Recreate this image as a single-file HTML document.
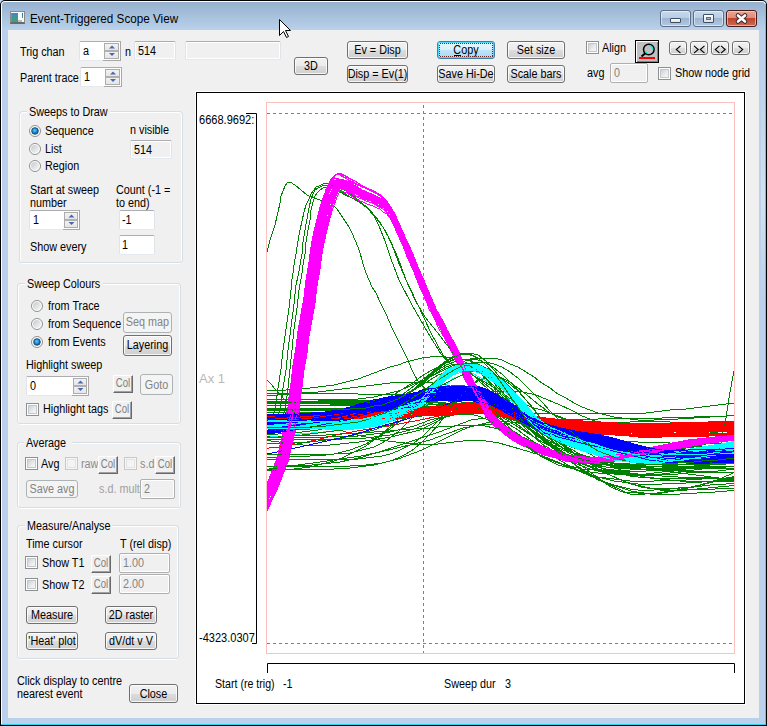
<!DOCTYPE html><html><head><meta charset="utf-8"><style>
html,body{margin:0;padding:0;width:767px;height:726px;overflow:hidden;background:#C9DDF0;}
.t{position:absolute;white-space:nowrap;font-family:'Liberation Sans', sans-serif;font-size:12px;line-height:12px;transform-origin:0 0;}
</style></head><body>
<div style="position:absolute;left:0;top:0;width:767px;height:726px;border-radius:5px 5px 0 0;background:#000;"></div>
<div style="position:absolute;left:1px;top:1px;width:765px;height:724px;border-radius:4px 4px 0 0;background:#FFF;"></div>
<div style="position:absolute;left:2px;top:2px;width:763px;height:722px;border-radius:3px 3px 0 0;background:linear-gradient(#96B1CF 0px,#B9D1EA 28px,#B9D1EA 100%);"></div>
<div style="position:absolute;left:765px;top:4px;width:1px;height:721px;box-sizing:border-box;background:#3AD5F0;"></div>
<div style="position:absolute;left:761px;top:60px;width:4px;height:241px;box-sizing:border-box;background:linear-gradient(rgba(255,255,255,0),rgba(255,255,255,0.35) 60%,rgba(255,255,255,0));"></div>
<div style="position:absolute;left:766px;top:4px;width:1px;height:722px;box-sizing:border-box;background:#000;"></div>
<div style="position:absolute;left:1px;top:724px;width:765px;height:1px;box-sizing:border-box;background:#2FD3F0;"></div>
<div style="position:absolute;left:0px;top:725px;width:767px;height:1px;box-sizing:border-box;background:#000;"></div>
<div style="position:absolute;left:0px;top:4px;width:1px;height:722px;box-sizing:border-box;background:#000;"></div>
<div style="position:absolute;left:8px;top:30px;width:751px;height:688px;box-sizing:border-box;background:#F0F0F0;"></div>
<div style="position:absolute;left:10px;top:11px;width:15px;height:13px;box-sizing:border-box;border:1px solid #8A8A8A;border-bottom:2px solid #6A6A6A;background:#FAFAFA;"></div>
<div style="position:absolute;left:11px;top:13px;width:7px;height:9px;box-sizing:border-box;background:linear-gradient(#3F86C8,#3FA36B);border-left:1px solid #8A7FC0;"></div>
<div style="position:absolute;left:18px;top:20px;width:4px;height:2px;box-sizing:border-box;background:#BDBDBD;"></div>
<div style="position:absolute;left:22px;top:13px;width:1px;height:5px;box-sizing:border-box;background:linear-gradient(#2B68C9,#3FB050);"></div>
<div class="t" style="left:30px;top:13px;font-size:12px;line-height:12px;transform:scaleX(0.974);color:#000;">Event-Triggered Scope View</div>
<div style="position:absolute;left:660px;top:10px;width:31px;height:17px;box-sizing:border-box;border:1px solid #5D6E84;border-radius:3px;background:linear-gradient(#C8D9EC 0%,#B9CDE4 45%,#9DB5D1 50%,#B3C8E0 100%);box-shadow:inset 0 0 0 1px rgba(255,255,255,0.5);"></div>
<div style="position:absolute;left:693px;top:10px;width:31px;height:17px;box-sizing:border-box;border:1px solid #5D6E84;border-radius:3px;background:linear-gradient(#C8D9EC 0%,#B9CDE4 45%,#9DB5D1 50%,#B3C8E0 100%);box-shadow:inset 0 0 0 1px rgba(255,255,255,0.5);"></div>
<div style="position:absolute;left:726px;top:10px;width:31px;height:17px;box-sizing:border-box;border:1px solid #4A1A1A;border-radius:3px;background:linear-gradient(#E8A493 0%,#DC8D7A 45%,#C0432A 50%,#CC6C56 100%);box-shadow:inset 0 0 0 1px rgba(255,220,210,0.6);"></div>
<div style="position:absolute;left:670px;top:18px;width:11px;height:5px;box-sizing:border-box;border:1px solid #3E4E66;border-radius:1px;background:linear-gradient(#FFF,#E0E0E0);"></div>
<div style="position:absolute;left:703px;top:14px;width:11px;height:9px;box-sizing:border-box;border:1px solid #3E4E66;border-radius:1px;background:linear-gradient(#FFF,#E0E0E0);"></div>
<div style="position:absolute;left:706px;top:17px;width:5px;height:3px;box-sizing:border-box;border:1px solid #5A6F90;background:#9AB2D4;"></div>
<svg style="position:absolute;left:0;top:0" width="767" height="726"><path d="M738,15.5 L745,21.5 M745,15.5 L738,21.5" stroke="#3B2A30" stroke-width="4.6" stroke-linecap="round"/><path d="M738,15.5 L745,21.5 M745,15.5 L738,21.5" stroke="#FFF" stroke-width="2.6" stroke-linecap="round"/></svg>
<div class="t" style="left:20px;top:46px;color:#000;font-size:12px;line-height:12px;transform:scaleX(0.9);">Trig chan</div>
<div style="position:absolute;left:79px;top:41px;width:42px;height:20px;box-sizing:border-box;border:1px solid;border-color:#ABADB3 #E2E3EA #E3E9EF #E2E3EA;border-radius:2px;background:#FFF;"></div>
<div style="position:absolute;left:103px;top:41px;width:18px;height:20px;box-sizing:border-box;border-top:1px solid #ABADB3;border-right:1px solid #A8A8A8;border-bottom:1px solid #A8A8A8;background:#FFF;"></div>
<div style="position:absolute;left:104px;top:43px;width:15px;height:16px;box-sizing:border-box;border:1px solid #ACACAC;background:#ECECEC;"></div>
<div style="position:absolute;left:105px;top:44px;width:13px;height:6px;box-sizing:border-box;background:linear-gradient(#F2F2F2,#E6E6E6);"></div>
<div style="position:absolute;left:105px;top:51px;width:13px;height:7px;box-sizing:border-box;background:linear-gradient(#F2F2F2,#E6E6E6);"></div>
<div style="position:absolute;left:105px;top:50px;width:13px;height:2px;box-sizing:border-box;background:#B0B0B0;"></div>
<svg style="position:absolute;left:0;top:0" width="767" height="726"><path d="M109.0,48.6 L112.0,45.4 L115.0,48.6Z" fill="#4A68B0"/><path d="M109.0,52.9 L112.0,56.1 L115.0,52.9Z" fill="#4A68B0"/></svg>
<div class="t" style="left:83px;top:45px;transform:scaleX(0.9);">a</div>
<div class="t" style="left:125px;top:46px;color:#000;font-size:12px;line-height:12px;transform:scaleX(0.9);">n</div>
<div style="position:absolute;left:134px;top:41px;width:42px;height:19px;box-sizing:border-box;border:1px solid;border-color:#ABADB3 #E2E3EA #E3E9EF #E2E3EA;border-radius:2px;background:#F0F0F0;box-shadow:inset 0 0 0 1px #FFF;"></div>
<div class="t" style="left:138px;top:45px;color:#000;transform:scaleX(0.9);">514</div>
<div style="position:absolute;left:185px;top:41px;width:96px;height:19px;box-sizing:border-box;border:1px solid;border-color:#ABADB3 #E2E3EA #E3E9EF #E2E3EA;border-radius:2px;background:#F0F0F0;box-shadow:inset 0 0 0 1px #FFF;"></div>
<div class="t" style="left:20px;top:72px;color:#000;font-size:12px;line-height:12px;transform:scaleX(0.9);">Parent trace</div>
<div style="position:absolute;left:80px;top:67px;width:42px;height:20px;box-sizing:border-box;border:1px solid;border-color:#ABADB3 #E2E3EA #E3E9EF #E2E3EA;border-radius:2px;background:#FFF;"></div>
<div style="position:absolute;left:104px;top:67px;width:18px;height:20px;box-sizing:border-box;border-top:1px solid #ABADB3;border-right:1px solid #A8A8A8;border-bottom:1px solid #A8A8A8;background:#FFF;"></div>
<div style="position:absolute;left:105px;top:69px;width:15px;height:16px;box-sizing:border-box;border:1px solid #ACACAC;background:#ECECEC;"></div>
<div style="position:absolute;left:106px;top:70px;width:13px;height:6px;box-sizing:border-box;background:linear-gradient(#F2F2F2,#E6E6E6);"></div>
<div style="position:absolute;left:106px;top:77px;width:13px;height:7px;box-sizing:border-box;background:linear-gradient(#F2F2F2,#E6E6E6);"></div>
<div style="position:absolute;left:106px;top:76px;width:13px;height:2px;box-sizing:border-box;background:#B0B0B0;"></div>
<svg style="position:absolute;left:0;top:0" width="767" height="726"><path d="M110.0,74.6 L113.0,71.4 L116.0,74.6Z" fill="#4A68B0"/><path d="M110.0,78.9 L113.0,82.1 L116.0,78.9Z" fill="#4A68B0"/></svg>
<div class="t" style="left:84px;top:71px;transform:scaleX(0.9);">1</div>
<div style="position:absolute;left:294px;top:57px;width:34px;height:18px;box-sizing:border-box;border:1px solid #707070;border-radius:3px;background:linear-gradient(#F2F2F2 0%,#EBEBEB 50%,#DDDDDD 50%,#CFCFCF 100%);box-shadow:inset 0 0 0 1px rgba(255,255,255,0.8);"></div>
<div class="t" style="left:294px;top:60px;width:37.8px;text-align:center;color:#000;transform:scaleX(0.9);">3D</div>
<div style="position:absolute;left:347px;top:41px;width:61px;height:18px;box-sizing:border-box;border:1px solid #707070;border-radius:3px;background:linear-gradient(#F2F2F2 0%,#EBEBEB 50%,#DDDDDD 50%,#CFCFCF 100%);box-shadow:inset 0 0 0 1px rgba(255,255,255,0.8);"></div>
<div class="t" style="left:347px;top:44px;width:67.8px;text-align:center;color:#000;transform:scaleX(0.9);">Ev = Disp</div>
<div style="position:absolute;left:347px;top:65px;width:61px;height:18px;box-sizing:border-box;border:1px solid #707070;border-radius:3px;background:linear-gradient(#F2F2F2 0%,#EBEBEB 50%,#DDDDDD 50%,#CFCFCF 100%);box-shadow:inset 0 0 0 1px rgba(255,255,255,0.8);"></div>
<div class="t" style="left:347px;top:68px;width:67.8px;text-align:center;color:#000;transform:scaleX(0.9);">Disp = Ev(1)</div>
<div style="position:absolute;left:437px;top:41px;width:58px;height:18px;box-sizing:border-box;border:1px solid #3C7FB1;border-radius:3px;background:linear-gradient(#EAF6FD 0%,#D9F0FC 50%,#BEE6FD 50%,#A7D9F5 100%);box-shadow:inset 0 0 0 1px #48D8FB;"></div>
<div class="t" style="left:437px;top:44px;width:64.4px;text-align:center;color:#000;transform:scaleX(0.9);">Copy</div>
<svg style="position:absolute;left:0;top:0" width="767" height="726"><rect x="439.5" y="43.5" width="53" height="13" fill="none" stroke="#6A2A20" stroke-width="1" stroke-dasharray="1 1" shape-rendering="crispEdges"/></svg>
<div style="position:absolute;left:454px;top:55px;width:7px;height:1px;box-sizing:border-box;background:#000;"></div>
<div style="position:absolute;left:437px;top:65px;width:58px;height:18px;box-sizing:border-box;border:1px solid #707070;border-radius:3px;background:linear-gradient(#F2F2F2 0%,#EBEBEB 50%,#DDDDDD 50%,#CFCFCF 100%);box-shadow:inset 0 0 0 1px rgba(255,255,255,0.8);"></div>
<div class="t" style="left:437px;top:68px;width:64.4px;text-align:center;color:#000;transform:scaleX(0.9);">Save Hi-De</div>
<div style="position:absolute;left:507px;top:41px;width:58px;height:18px;box-sizing:border-box;border:1px solid #707070;border-radius:3px;background:linear-gradient(#F2F2F2 0%,#EBEBEB 50%,#DDDDDD 50%,#CFCFCF 100%);box-shadow:inset 0 0 0 1px rgba(255,255,255,0.8);"></div>
<div class="t" style="left:507px;top:44px;width:64.4px;text-align:center;color:#000;transform:scaleX(0.9);">Set size</div>
<div style="position:absolute;left:507px;top:65px;width:58px;height:18px;box-sizing:border-box;border:1px solid #707070;border-radius:3px;background:linear-gradient(#F2F2F2 0%,#EBEBEB 50%,#DDDDDD 50%,#CFCFCF 100%);box-shadow:inset 0 0 0 1px rgba(255,255,255,0.8);"></div>
<div class="t" style="left:507px;top:68px;width:64.4px;text-align:center;color:#000;transform:scaleX(0.9);">Scale bars</div>
<div style="position:absolute;left:586px;top:41px;width:13px;height:13px;box-sizing:border-box;border:1px solid #8E8F8F;background:#FFF;"></div>
<div style="position:absolute;left:588px;top:43px;width:9px;height:9px;box-sizing:border-box;border:1px solid #C3C7CC;background:linear-gradient(135deg,#CBCFD5 0%,#E8EAEC 55%,#F8F8F8 100%);"></div>
<div class="t" style="left:602px;top:42px;color:#000;font-size:12px;line-height:12px;transform:scaleX(0.9);">Align</div>
<div style="position:absolute;left:635px;top:40px;width:24px;height:23px;box-sizing:border-box;border:1px solid #000;background:#C0C0C0;box-shadow:inset 1px 1px 0 #FFF, inset -1px -1px 0 #808080;"></div>
<svg style="position:absolute;left:0;top:0" width="767" height="726"><circle cx="648.8" cy="49.5" r="5.3" fill="none" stroke="#000" stroke-width="1.5"/><path d="M649.3,45.6 A3.9,3.9 0 0 1 652.7,49.6" fill="none" stroke="#00F0F0" stroke-width="1.2"/><path d="M645.4,51.3 A3.9,3.9 0 0 0 647.6,53.3" fill="none" stroke="#00F0F0" stroke-width="1.2"/><path d="M645.3,53.2 L641.5,56.6" stroke="#000" stroke-width="2"/><rect x="639" y="57" width="16" height="2" fill="#F00"/></svg>
<div style="position:absolute;left:669px;top:41px;width:18px;height:14px;box-sizing:border-box;border:1px solid #707070;border-radius:3px;background:linear-gradient(#F2F2F2 0%,#EBEBEB 50%,#DDDDDD 50%,#CFCFCF 100%);box-shadow:inset 0 0 0 1px rgba(255,255,255,0.8);"></div>
<div class="t" style="left:669px;top:42px;width:20.0px;text-align:center;color:#000;transform:scaleX(0.9);"></div>
<div style="position:absolute;left:690px;top:41px;width:18px;height:14px;box-sizing:border-box;border:1px solid #707070;border-radius:3px;background:linear-gradient(#F2F2F2 0%,#EBEBEB 50%,#DDDDDD 50%,#CFCFCF 100%);box-shadow:inset 0 0 0 1px rgba(255,255,255,0.8);"></div>
<div class="t" style="left:690px;top:42px;width:20.0px;text-align:center;color:#000;transform:scaleX(0.9);"></div>
<div style="position:absolute;left:711px;top:41px;width:18px;height:14px;box-sizing:border-box;border:1px solid #707070;border-radius:3px;background:linear-gradient(#F2F2F2 0%,#EBEBEB 50%,#DDDDDD 50%,#CFCFCF 100%);box-shadow:inset 0 0 0 1px rgba(255,255,255,0.8);"></div>
<div class="t" style="left:711px;top:42px;width:20.0px;text-align:center;color:#000;transform:scaleX(0.9);"></div>
<div style="position:absolute;left:732px;top:41px;width:18px;height:14px;box-sizing:border-box;border:1px solid #707070;border-radius:3px;background:linear-gradient(#F2F2F2 0%,#EBEBEB 50%,#DDDDDD 50%,#CFCFCF 100%);box-shadow:inset 0 0 0 1px rgba(255,255,255,0.8);"></div>
<div class="t" style="left:732px;top:42px;width:20.0px;text-align:center;color:#000;transform:scaleX(0.9);"></div>
<svg style="position:absolute;left:0;top:0" width="767" height="726"><g fill="none" stroke="#000" stroke-width="1.1"><path d="M680.5,45.8 L676.3,49.5 L680.5,53.2"/><path d="M694,45.8 L698.2,49.5 L694,53.2 M704.5,45.8 L700.3,49.5 L704.5,53.2"/><path d="M719.5,45.8 L715.3,49.5 L719.5,53.2 M721,45.8 L725.2,49.5 L721,53.2"/><path d="M738.5,45.8 L742.7,49.5 L738.5,53.2"/></g></svg>
<div class="t" style="left:587px;top:67px;color:#000;font-size:12px;line-height:12px;transform:scaleX(0.9);">avg</div>
<div style="position:absolute;left:610px;top:63px;width:38px;height:20px;box-sizing:border-box;border:1px solid #AFAFAF;border-radius:2px;background:#F0F0F0;box-shadow:inset 0 0 0 1px #FFF;"></div>
<div class="t" style="left:614px;top:67px;color:#838383;transform:scaleX(0.9);">0</div>
<div style="position:absolute;left:658px;top:67px;width:13px;height:13px;box-sizing:border-box;border:1px solid #8E8F8F;background:#FFF;"></div>
<div style="position:absolute;left:660px;top:69px;width:9px;height:9px;box-sizing:border-box;border:1px solid #C3C7CC;background:linear-gradient(135deg,#CBCFD5 0%,#E8EAEC 55%,#F8F8F8 100%);"></div>
<div class="t" style="left:675px;top:67px;color:#000;font-size:12px;line-height:12px;transform:scaleX(0.9);">Show node grid</div>
<div style="position:absolute;left:20px;top:112px;width:162px;height:152px;box-sizing:border-box;border:1px solid #FFF;border-radius:3px;"></div>
<div style="position:absolute;left:19px;top:111px;width:164px;height:152px;box-sizing:border-box;border:1px solid #D5DFE5;border-radius:3px;"></div>
<div style="position:absolute;left:27px;top:109px;width:83px;height:5px;background:#F0F0F0"></div>
<div class="t" style="left:29px;top:106px;color:#000;font-size:12px;line-height:12px;transform:scaleX(0.9);">Sweeps to Draw</div>
<svg style="position:absolute;left:29px;top:125px" width="13" height="13"><defs><linearGradient id="rg29_125" x1="0" y1="0" x2="1" y2="1"><stop offset="0" stop-color="#C6CACF"/><stop offset="1" stop-color="#F8F8F8"/></linearGradient></defs><circle cx="6" cy="6" r="5.5" fill="#FFF" stroke="#8E8F8F" stroke-width="1"/><circle cx="6" cy="6" r="4" fill="url(#rg29_125)"/><defs><radialGradient id="drg29_125" cx="0.45" cy="0.4" r="0.6"><stop offset="0" stop-color="#5FD0FA"/><stop offset="0.6" stop-color="#1E84CC"/><stop offset="1" stop-color="#0B4A86"/></radialGradient></defs><circle cx="6" cy="6" r="3.3" fill="url(#drg29_125)" stroke="#154B7A" stroke-width="0.8"/></svg>
<div class="t" style="left:45px;top:125px;color:#000;font-size:12px;line-height:12px;transform:scaleX(0.9);">Sequence</div>
<svg style="position:absolute;left:29px;top:143px" width="13" height="13"><defs><linearGradient id="rg29_143" x1="0" y1="0" x2="1" y2="1"><stop offset="0" stop-color="#C6CACF"/><stop offset="1" stop-color="#F8F8F8"/></linearGradient></defs><circle cx="6" cy="6" r="5.5" fill="#FFF" stroke="#8E8F8F" stroke-width="1"/><circle cx="6" cy="6" r="4" fill="url(#rg29_143)"/></svg>
<div class="t" style="left:45px;top:143px;color:#000;font-size:12px;line-height:12px;transform:scaleX(0.9);">List</div>
<svg style="position:absolute;left:29px;top:160px" width="13" height="13"><defs><linearGradient id="rg29_160" x1="0" y1="0" x2="1" y2="1"><stop offset="0" stop-color="#C6CACF"/><stop offset="1" stop-color="#F8F8F8"/></linearGradient></defs><circle cx="6" cy="6" r="5.5" fill="#FFF" stroke="#8E8F8F" stroke-width="1"/><circle cx="6" cy="6" r="4" fill="url(#rg29_160)"/></svg>
<div class="t" style="left:45px;top:160px;color:#000;font-size:12px;line-height:12px;transform:scaleX(0.9);">Region</div>
<div class="t" style="left:130px;top:124px;color:#000;font-size:12px;line-height:12px;transform:scaleX(0.9);">n visible</div>
<div style="position:absolute;left:130px;top:140px;width:42px;height:19px;box-sizing:border-box;border:1px solid;border-color:#ABADB3 #E2E3EA #E3E9EF #E2E3EA;border-radius:2px;background:#F0F0F0;box-shadow:inset 0 0 0 1px #FFF;"></div>
<div class="t" style="left:134px;top:144px;color:#000;transform:scaleX(0.9);">514</div>
<div class="t" style="left:30px;top:184px;color:#000;font-size:12px;line-height:12px;transform:scaleX(0.9);">Start at sweep</div>
<div class="t" style="left:30px;top:197px;color:#000;font-size:12px;line-height:12px;transform:scaleX(0.9);">number</div>
<div class="t" style="left:116px;top:184px;color:#000;font-size:12px;line-height:12px;transform:scaleX(0.9);">Count (-1 =</div>
<div class="t" style="left:116px;top:197px;color:#000;font-size:12px;line-height:12px;transform:scaleX(0.9);">to end)</div>
<div style="position:absolute;left:29px;top:210px;width:51px;height:20px;box-sizing:border-box;border:1px solid;border-color:#ABADB3 #E2E3EA #E3E9EF #E2E3EA;border-radius:2px;background:#FFF;"></div>
<div style="position:absolute;left:63px;top:210px;width:17px;height:20px;box-sizing:border-box;border-top:1px solid #ABADB3;border-right:1px solid #A8A8A8;border-bottom:1px solid #A8A8A8;background:#FFF;"></div>
<div style="position:absolute;left:64px;top:212px;width:14px;height:16px;box-sizing:border-box;border:1px solid #ACACAC;background:#ECECEC;"></div>
<div style="position:absolute;left:65px;top:213px;width:12px;height:6px;box-sizing:border-box;background:linear-gradient(#F2F2F2,#E6E6E6);"></div>
<div style="position:absolute;left:65px;top:220px;width:12px;height:7px;box-sizing:border-box;background:linear-gradient(#F2F2F2,#E6E6E6);"></div>
<div style="position:absolute;left:65px;top:219px;width:12px;height:2px;box-sizing:border-box;background:#B0B0B0;"></div>
<svg style="position:absolute;left:0;top:0" width="767" height="726"><path d="M68.5,217.6 L71.5,214.4 L74.5,217.6Z" fill="#4A68B0"/><path d="M68.5,221.9 L71.5,225.1 L74.5,221.9Z" fill="#4A68B0"/></svg>
<div class="t" style="left:33px;top:214px;transform:scaleX(0.9);">1</div>
<div style="position:absolute;left:119px;top:210px;width:36px;height:20px;box-sizing:border-box;border:1px solid;border-color:#ABADB3 #E2E3EA #E3E9EF #E2E3EA;border-radius:2px;background:#FFF;"></div>
<div class="t" style="left:122px;top:214px;color:#000;transform:scaleX(0.9);">-1</div>
<div class="t" style="left:30px;top:241px;color:#000;font-size:12px;line-height:12px;transform:scaleX(0.9);">Show every</div>
<div style="position:absolute;left:119px;top:235px;width:36px;height:20px;box-sizing:border-box;border:1px solid;border-color:#ABADB3 #E2E3EA #E3E9EF #E2E3EA;border-radius:2px;background:#FFF;"></div>
<div class="t" style="left:122px;top:239px;color:#000;transform:scaleX(0.9);">1</div>
<div style="position:absolute;left:18px;top:284px;width:162px;height:141px;box-sizing:border-box;border:1px solid #FFF;border-radius:3px;"></div>
<div style="position:absolute;left:17px;top:283px;width:164px;height:141px;box-sizing:border-box;border:1px solid #D5DFE5;border-radius:3px;"></div>
<div style="position:absolute;left:25px;top:281px;width:78px;height:5px;background:#F0F0F0"></div>
<div class="t" style="left:27px;top:278px;color:#000;font-size:12px;line-height:12px;transform:scaleX(0.9);">Sweep Colours</div>
<svg style="position:absolute;left:31px;top:300px" width="13" height="13"><defs><linearGradient id="rg31_300" x1="0" y1="0" x2="1" y2="1"><stop offset="0" stop-color="#C6CACF"/><stop offset="1" stop-color="#F8F8F8"/></linearGradient></defs><circle cx="6" cy="6" r="5.5" fill="#FFF" stroke="#8E8F8F" stroke-width="1"/><circle cx="6" cy="6" r="4" fill="url(#rg31_300)"/></svg>
<div class="t" style="left:48px;top:300px;color:#000;font-size:12px;line-height:12px;transform:scaleX(0.9);">from Trace</div>
<svg style="position:absolute;left:31px;top:318px" width="13" height="13"><defs><linearGradient id="rg31_318" x1="0" y1="0" x2="1" y2="1"><stop offset="0" stop-color="#C6CACF"/><stop offset="1" stop-color="#F8F8F8"/></linearGradient></defs><circle cx="6" cy="6" r="5.5" fill="#FFF" stroke="#8E8F8F" stroke-width="1"/><circle cx="6" cy="6" r="4" fill="url(#rg31_318)"/></svg>
<div class="t" style="left:48px;top:318px;color:#000;font-size:12px;line-height:12px;transform:scaleX(0.9);">from Sequence</div>
<svg style="position:absolute;left:31px;top:336px" width="13" height="13"><defs><linearGradient id="rg31_336" x1="0" y1="0" x2="1" y2="1"><stop offset="0" stop-color="#C6CACF"/><stop offset="1" stop-color="#F8F8F8"/></linearGradient></defs><circle cx="6" cy="6" r="5.5" fill="#FFF" stroke="#8E8F8F" stroke-width="1"/><circle cx="6" cy="6" r="4" fill="url(#rg31_336)"/><defs><radialGradient id="drg31_336" cx="0.45" cy="0.4" r="0.6"><stop offset="0" stop-color="#5FD0FA"/><stop offset="0.6" stop-color="#1E84CC"/><stop offset="1" stop-color="#0B4A86"/></radialGradient></defs><circle cx="6" cy="6" r="3.3" fill="url(#drg31_336)" stroke="#154B7A" stroke-width="0.8"/></svg>
<div class="t" style="left:48px;top:336px;color:#000;font-size:12px;line-height:12px;transform:scaleX(0.9);">from Events</div>
<div style="position:absolute;left:123px;top:312px;width:49px;height:21px;box-sizing:border-box;border:1px solid #ADB2B5;border-radius:3px;background:#F4F4F4;"></div>
<div class="t" style="left:123px;top:316px;width:54.4px;text-align:center;color:#838383;transform:scaleX(0.9);">Seq map</div>
<div style="position:absolute;left:123px;top:335px;width:49px;height:21px;box-sizing:border-box;border:1px solid #707070;border-radius:3px;background:linear-gradient(#F2F2F2 0%,#EBEBEB 50%,#DDDDDD 50%,#CFCFCF 100%);box-shadow:inset 0 0 0 1px rgba(255,255,255,0.8);"></div>
<div class="t" style="left:123px;top:339px;width:54.4px;text-align:center;color:#000;transform:scaleX(0.9);">Layering</div>
<div class="t" style="left:26px;top:359px;color:#000;font-size:12px;line-height:12px;transform:scaleX(0.9);">Highlight sweep</div>
<div style="position:absolute;left:26px;top:376px;width:63px;height:20px;box-sizing:border-box;border:1px solid;border-color:#ABADB3 #E2E3EA #E3E9EF #E2E3EA;border-radius:2px;background:#FFF;"></div>
<div style="position:absolute;left:72px;top:376px;width:17px;height:20px;box-sizing:border-box;border-top:1px solid #ABADB3;border-right:1px solid #A8A8A8;border-bottom:1px solid #A8A8A8;background:#FFF;"></div>
<div style="position:absolute;left:73px;top:378px;width:14px;height:16px;box-sizing:border-box;border:1px solid #ACACAC;background:#ECECEC;"></div>
<div style="position:absolute;left:74px;top:379px;width:12px;height:6px;box-sizing:border-box;background:linear-gradient(#F2F2F2,#E6E6E6);"></div>
<div style="position:absolute;left:74px;top:386px;width:12px;height:7px;box-sizing:border-box;background:linear-gradient(#F2F2F2,#E6E6E6);"></div>
<div style="position:absolute;left:74px;top:385px;width:12px;height:2px;box-sizing:border-box;background:#B0B0B0;"></div>
<svg style="position:absolute;left:0;top:0" width="767" height="726"><path d="M77.5,383.6 L80.5,380.4 L83.5,383.6Z" fill="#4A68B0"/><path d="M77.5,387.9 L80.5,391.1 L83.5,387.9Z" fill="#4A68B0"/></svg>
<div class="t" style="left:30px;top:380px;transform:scaleX(0.9);">0</div>
<div style="position:absolute;left:113px;top:375px;width:20px;height:18px;box-sizing:border-box;border-top:1px solid #FFF;border-left:1px solid #FFF;border-right:1px solid #696969;border-bottom:1px solid #696969;box-shadow:inset -1px -1px 0 #A0A0A0;background:#F0F0F0;"></div>
<div class="t" style="left:113px;top:377px;width:25.0px;text-align:center;color:#808080;transform:scaleX(0.8);">Col</div>
<div style="position:absolute;left:140px;top:374px;width:33px;height:21px;box-sizing:border-box;border:1px solid #ADB2B5;border-radius:3px;background:#F4F4F4;"></div>
<div class="t" style="left:140px;top:379px;width:36.7px;text-align:center;color:#838383;transform:scaleX(0.9);">Goto</div>
<div style="position:absolute;left:26px;top:403px;width:13px;height:13px;box-sizing:border-box;border:1px solid #8E8F8F;background:#FFF;"></div>
<div style="position:absolute;left:28px;top:405px;width:9px;height:9px;box-sizing:border-box;border:1px solid #C3C7CC;background:linear-gradient(135deg,#CBCFD5 0%,#E8EAEC 55%,#F8F8F8 100%);"></div>
<div class="t" style="left:43px;top:403px;color:#000;font-size:12px;line-height:12px;transform:scaleX(0.9);">Highlight tags</div>
<div style="position:absolute;left:112px;top:401px;width:20px;height:18px;box-sizing:border-box;border-top:1px solid #FFF;border-left:1px solid #FFF;border-right:1px solid #696969;border-bottom:1px solid #696969;box-shadow:inset -1px -1px 0 #A0A0A0;background:#F0F0F0;"></div>
<div class="t" style="left:112px;top:403px;width:25.0px;text-align:center;color:#808080;transform:scaleX(0.8);">Col</div>
<div style="position:absolute;left:18px;top:443px;width:162px;height:66px;box-sizing:border-box;border:1px solid #FFF;border-radius:3px;"></div>
<div style="position:absolute;left:17px;top:442px;width:164px;height:66px;box-sizing:border-box;border:1px solid #D5DFE5;border-radius:3px;"></div>
<div style="position:absolute;left:24px;top:440px;width:48px;height:5px;background:#F0F0F0"></div>
<div class="t" style="left:26px;top:437px;color:#000;font-size:12px;line-height:12px;transform:scaleX(0.9);">Average</div>
<div style="position:absolute;left:25px;top:457px;width:13px;height:13px;box-sizing:border-box;border:1px solid #8E8F8F;background:#FFF;"></div>
<div style="position:absolute;left:27px;top:459px;width:9px;height:9px;box-sizing:border-box;border:1px solid #C3C7CC;background:linear-gradient(135deg,#CBCFD5 0%,#E8EAEC 55%,#F8F8F8 100%);"></div>
<div class="t" style="left:41px;top:458px;color:#000;font-size:12px;line-height:12px;transform:scaleX(0.9);">Avg</div>
<div style="position:absolute;left:65px;top:457px;width:13px;height:13px;box-sizing:border-box;border:1px solid #C8C8C8;background:#F6F6F6;"></div>
<div style="position:absolute;left:67px;top:459px;width:9px;height:9px;box-sizing:border-box;border:1px solid #E3E3E3;background:#F4F4F4;"></div>
<div class="t" style="left:81px;top:458px;color:#8C8C8C;font-size:12px;line-height:12px;transform:scaleX(0.9);">raw</div>
<div style="position:absolute;left:98px;top:456px;width:20px;height:18px;box-sizing:border-box;border-top:1px solid #FFF;border-left:1px solid #FFF;border-right:1px solid #696969;border-bottom:1px solid #696969;box-shadow:inset -1px -1px 0 #A0A0A0;background:#F0F0F0;"></div>
<div class="t" style="left:98px;top:458px;width:25.0px;text-align:center;color:#808080;transform:scaleX(0.8);">Col</div>
<div style="position:absolute;left:124px;top:457px;width:13px;height:13px;box-sizing:border-box;border:1px solid #C8C8C8;background:#F6F6F6;"></div>
<div style="position:absolute;left:126px;top:459px;width:9px;height:9px;box-sizing:border-box;border:1px solid #E3E3E3;background:#F4F4F4;"></div>
<div class="t" style="left:140px;top:458px;color:#8C8C8C;font-size:12px;line-height:12px;transform:scaleX(0.9);">s.d</div>
<div style="position:absolute;left:155px;top:456px;width:20px;height:18px;box-sizing:border-box;border-top:1px solid #FFF;border-left:1px solid #FFF;border-right:1px solid #696969;border-bottom:1px solid #696969;box-shadow:inset -1px -1px 0 #A0A0A0;background:#F0F0F0;"></div>
<div class="t" style="left:155px;top:458px;width:25.0px;text-align:center;color:#808080;transform:scaleX(0.8);">Col</div>
<div style="position:absolute;left:26px;top:480px;width:52px;height:18px;box-sizing:border-box;border:1px solid #ADB2B5;border-radius:3px;background:#F4F4F4;"></div>
<div class="t" style="left:26px;top:483px;width:57.8px;text-align:center;color:#838383;transform:scaleX(0.9);">Save avg</div>
<div class="t" style="left:99px;top:483px;color:#A0A0A0;font-size:12px;line-height:12px;transform:scaleX(0.9);">s.d. mult</div>
<div style="position:absolute;left:140px;top:479px;width:35px;height:20px;box-sizing:border-box;border:1px solid #AFAFAF;border-radius:2px;background:#F0F0F0;box-shadow:inset 0 0 0 1px #FFF;"></div>
<div class="t" style="left:144px;top:483px;color:#838383;transform:scaleX(0.9);">2</div>
<div style="position:absolute;left:18px;top:526px;width:160px;height:134px;box-sizing:border-box;border:1px solid #FFF;border-radius:3px;"></div>
<div style="position:absolute;left:17px;top:525px;width:162px;height:134px;box-sizing:border-box;border:1px solid #D5DFE5;border-radius:3px;"></div>
<div style="position:absolute;left:25px;top:523px;width:87px;height:5px;background:#F0F0F0"></div>
<div class="t" style="left:27px;top:520px;color:#000;font-size:12px;line-height:12px;transform:scaleX(0.9);">Measure/Analyse</div>
<div class="t" style="left:26px;top:538px;color:#000;font-size:12px;line-height:12px;transform:scaleX(0.9);">Time cursor</div>
<div class="t" style="left:120px;top:538px;color:#000;font-size:12px;line-height:12px;transform:scaleX(0.9);">T (rel disp)</div>
<div style="position:absolute;left:25px;top:556px;width:13px;height:13px;box-sizing:border-box;border:1px solid #8E8F8F;background:#FFF;"></div>
<div style="position:absolute;left:27px;top:558px;width:9px;height:9px;box-sizing:border-box;border:1px solid #C3C7CC;background:linear-gradient(135deg,#CBCFD5 0%,#E8EAEC 55%,#F8F8F8 100%);"></div>
<div class="t" style="left:42px;top:557px;color:#000;font-size:12px;line-height:12px;transform:scaleX(0.9);">Show T1</div>
<div style="position:absolute;left:91px;top:555px;width:20px;height:18px;box-sizing:border-box;border-top:1px solid #FFF;border-left:1px solid #FFF;border-right:1px solid #696969;border-bottom:1px solid #696969;box-shadow:inset -1px -1px 0 #A0A0A0;background:#F0F0F0;"></div>
<div class="t" style="left:91px;top:557px;width:25.0px;text-align:center;color:#808080;transform:scaleX(0.8);">Col</div>
<div style="position:absolute;left:119px;top:553px;width:51px;height:20px;box-sizing:border-box;border:1px solid #AFAFAF;border-radius:2px;background:#F0F0F0;box-shadow:inset 0 0 0 1px #FFF;"></div>
<div class="t" style="left:123px;top:557px;color:#838383;transform:scaleX(0.9);">1.00</div>
<div style="position:absolute;left:25px;top:578px;width:13px;height:13px;box-sizing:border-box;border:1px solid #8E8F8F;background:#FFF;"></div>
<div style="position:absolute;left:27px;top:580px;width:9px;height:9px;box-sizing:border-box;border:1px solid #C3C7CC;background:linear-gradient(135deg,#CBCFD5 0%,#E8EAEC 55%,#F8F8F8 100%);"></div>
<div class="t" style="left:42px;top:579px;color:#000;font-size:12px;line-height:12px;transform:scaleX(0.9);">Show T2</div>
<div style="position:absolute;left:91px;top:576px;width:20px;height:18px;box-sizing:border-box;border-top:1px solid #FFF;border-left:1px solid #FFF;border-right:1px solid #696969;border-bottom:1px solid #696969;box-shadow:inset -1px -1px 0 #A0A0A0;background:#F0F0F0;"></div>
<div class="t" style="left:91px;top:578px;width:25.0px;text-align:center;color:#808080;transform:scaleX(0.8);">Col</div>
<div style="position:absolute;left:119px;top:574px;width:51px;height:20px;box-sizing:border-box;border:1px solid #AFAFAF;border-radius:2px;background:#F0F0F0;box-shadow:inset 0 0 0 1px #FFF;"></div>
<div class="t" style="left:123px;top:578px;color:#838383;transform:scaleX(0.9);">2.00</div>
<div style="position:absolute;left:26px;top:606px;width:52px;height:18px;box-sizing:border-box;border:1px solid #707070;border-radius:3px;background:linear-gradient(#F2F2F2 0%,#EBEBEB 50%,#DDDDDD 50%,#CFCFCF 100%);box-shadow:inset 0 0 0 1px rgba(255,255,255,0.8);"></div>
<div class="t" style="left:26px;top:609px;width:57.8px;text-align:center;color:#000;transform:scaleX(0.9);">Measure</div>
<div style="position:absolute;left:105px;top:606px;width:52px;height:18px;box-sizing:border-box;border:1px solid #707070;border-radius:3px;background:linear-gradient(#F2F2F2 0%,#EBEBEB 50%,#DDDDDD 50%,#CFCFCF 100%);box-shadow:inset 0 0 0 1px rgba(255,255,255,0.8);"></div>
<div class="t" style="left:105px;top:609px;width:57.8px;text-align:center;color:#000;transform:scaleX(0.9);">2D raster</div>
<div style="position:absolute;left:26px;top:632px;width:52px;height:18px;box-sizing:border-box;border:1px solid #707070;border-radius:3px;background:linear-gradient(#F2F2F2 0%,#EBEBEB 50%,#DDDDDD 50%,#CFCFCF 100%);box-shadow:inset 0 0 0 1px rgba(255,255,255,0.8);"></div>
<div class="t" style="left:26px;top:635px;width:57.8px;text-align:center;color:#000;transform:scaleX(0.9);">'Heat' plot</div>
<div style="position:absolute;left:105px;top:632px;width:52px;height:18px;box-sizing:border-box;border:1px solid #707070;border-radius:3px;background:linear-gradient(#F2F2F2 0%,#EBEBEB 50%,#DDDDDD 50%,#CFCFCF 100%);box-shadow:inset 0 0 0 1px rgba(255,255,255,0.8);"></div>
<div class="t" style="left:105px;top:635px;width:57.8px;text-align:center;color:#000;transform:scaleX(0.9);">dV/dt v V</div>
<div class="t" style="left:17px;top:675px;color:#000;font-size:12px;line-height:12px;transform:scaleX(0.9);">Click display to centre</div>
<div class="t" style="left:17px;top:688px;color:#000;font-size:12px;line-height:12px;transform:scaleX(0.9);">nearest event</div>
<div style="position:absolute;left:129px;top:684px;width:49px;height:19px;box-sizing:border-box;border:1px solid #707070;border-radius:3px;background:linear-gradient(#F2F2F2 0%,#EBEBEB 50%,#DDDDDD 50%,#CFCFCF 100%);box-shadow:inset 0 0 0 1px rgba(255,255,255,0.8);"></div>
<div class="t" style="left:129px;top:688px;width:54.4px;text-align:center;color:#000;transform:scaleX(0.9);">Close</div>
<div style="position:absolute;left:195px;top:91px;width:551px;height:614px;box-sizing:border-box;border:1px solid #FFF;"></div>
<div style="position:absolute;left:196px;top:92px;width:549px;height:612px;box-sizing:border-box;border:1px solid #000;background:#FFF;"></div>
<svg style="position:absolute;left:0;top:0" width="767" height="726">
<defs><clipPath id="pc"><rect x="267" y="103" width="467" height="550"/></clipPath></defs>
<rect x="266.5" y="102.5" width="468" height="551" fill="none" stroke="#FFC0C0" stroke-width="1"/>
<path d="M267,113.5 H733 M267,643.5 H733" stroke="#808080" stroke-width="1" stroke-dasharray="3 3"/>
<path d="M423.5,105 V653" stroke="#808080" stroke-width="1" stroke-dasharray="3 3"/>
<g clip-path="url(#pc)" fill="none" stroke-linejoin="round" shape-rendering="crispEdges">
<path d="M262,403 270,403 278,403 286,403 294,403 302,403 310,403 318,403 326,403 334,403 342,403 350,403 358,403 366,403 374,403 382,403 390,403 398,403 406,404 414,404 422,404 430,404 438,404 446,404 454,405 462,405 470,406 478,407 486,409 494,411 502,413 510,416 518,420 526,424 534,429 542,434 550,438 558,442 566,445 574,448 582,450 590,452 598,453 606,454 614,454 622,455 630,455 638,455 646,455 654,455 662,454 670,454 678,453 686,453 694,452 702,452 710,451 718,451 726,450 734,450 742,449" stroke="#008000" stroke-width="1"/>
<path d="M264,419 264,419 265,419 269,419 277,418 289,418 302,417 315,416 328,415 342,413 354,410 365,406 377,403 391,400 405,398 417,396 422,395 423,394 426,393 432,392 439,390 447,389 453,389 459,389 465,389 470,389 476,389 482,390 487,392 493,395 502,400 514,408 530,417 547,425 564,430 583,434 602,438 619,442 636,447 652,451 665,452 678,453 692,452 709,452 728,452 742,451" stroke="#0000FF" stroke-width="1"/>
<path d="M261,431 261,431 262,431 266,431 275,430 287,428 299,426 312,425 326,423 339,420 351,417 362,413 374,410 388,408 403,406 414,405 419,403 420,401 423,400 429,399 437,398 444,398 450,398 456,398 462,398 468,398 473,398 479,399 485,401 491,403 499,407 512,415 527,424 544,431 562,437 581,441 599,445 617,450 633,455 649,458 663,460 675,461 689,461 707,461 726,460 739,460" stroke="#0000FF" stroke-width="1"/>
<path d="M261,522 263,516 268,508 272,499 275,492 278,484 282,476 284,468 287,460 290,452 292,443 294,434 296,425 297,417 298,410 300,400 301,385 304,367 306,350 309,333 311,316 314,300 317,282 319,265 322,250 324,238 326,230 328,222 330,214 332,207 334,201 335,196 337,192 339,189 341,186 343,184 345,183 348,183 351,185 354,187 357,189 360,191 363,193 366,194 369,196 372,197 375,198 379,200 382,202 385,204 388,207 392,211 395,216 398,223 402,232 407,243 412,256 418,269 423,280 427,291 431,300 434,306 436,311 439,317 444,326 449,336 454,345 457,350 458,355 461,360 465,368 469,377 474,385 477,391 481,397 484,402 486,407 488,411 492,416 498,422 505,428 512,434 518,438 525,442 532,445 538,448 545,451 552,453 560,455 568,458 577,459 584,460 592,461 602,460 615,458 631,455 647,452 662,449 676,446 692,443 710,441 729,438 742,437" stroke="#FF00FF" stroke-width="1"/>
<path d="M260,424 260,424 261,424 265,424 274,423 285,422 298,421 311,420 325,418 338,416 350,413 361,409 373,406 387,404 402,402 413,400 418,399 419,397 422,396 428,395 436,394 443,393 449,393 455,393 461,393 467,393 472,393 478,394 484,396 489,399 498,403 511,411 526,420 543,428 561,433 580,437 598,441 615,446 632,451 648,454 662,456 674,456 688,456 706,456 725,455 738,455" stroke="#0000FF" stroke-width="1"/>
<path d="M262,417 261,417 260,417 267,417 287,416 314,415 340,414 362,413 383,412 400,410 410,409 417,408 423,407 431,407 438,406 445,406 451,405 457,404 463,403 468,403 474,403 480,403 485,404 491,406 500,408 513,412 528,415 545,418 563,420 582,422 600,423 616,423 630,424 645,424 660,424 674,423 690,423 708,422 727,422 740,422" stroke="#FF0000" stroke-width="1"/>
<path d="M261,426 261,426 262,426 266,426 275,425 286,424 299,423 312,421 326,419 339,417 351,414 362,410 374,407 388,405 403,403 414,401 419,400 420,398 423,397 429,396 437,395 444,394 450,394 456,394 462,394 468,394 473,394 479,395 485,397 490,400 499,404 512,412 527,421 544,429 562,434 581,438 599,442 616,447 633,452 649,455 663,457 675,457 689,457 707,457 726,457 739,456" stroke="#0000FF" stroke-width="1"/>
<path d="M252,523 255,517 259,508 263,500 267,492 270,485 273,477 276,469 279,461 281,453 283,444 285,434 287,425 289,418 290,410 291,400 293,385 295,368 298,350 300,333 303,316 306,300 308,282 311,264 313,249 315,238 317,229 319,221 321,213 323,206 325,200 327,195 328,191 330,188 332,185 335,183 338,182 341,183 344,184 347,186 351,188 354,190 358,192 361,193 365,195 368,196 372,198 375,199 379,201 382,203 385,206 389,210 392,216 395,222 399,231 404,243 409,256 415,268 419,280 424,290 428,300 430,306 433,311 436,317 440,326 446,336 451,345 453,351 455,355 458,360 462,368 466,377 471,385 474,392 477,397 481,402 483,407 485,411 489,416 494,422 501,429 509,434 515,439 522,442 529,446 535,449 541,451 549,454 556,456 565,458 574,460 581,461 589,461 599,461 612,459 628,456 644,453 658,450 673,446 689,444 707,441 725,439 739,437" stroke="#FF00FF" stroke-width="1"/>
<path d="M258,520 261,514 265,505 269,497 273,489 276,481 279,474 282,466 285,458 287,450 290,441 292,432 293,423 295,415 296,408 297,397 299,383 301,365 304,347 306,331 309,314 312,297 314,280 317,262 319,247 321,236 323,227 325,219 327,211 329,204 331,198 333,193 335,189 336,186 338,183 341,181 343,180 346,181 349,183 352,184 355,186 358,188 361,190 365,192 368,193 371,194 374,196 378,197 381,199 384,201 388,204 391,208 394,214 397,220 401,229 406,240 412,254 417,266 422,277 426,288 430,297 433,304 435,308 438,314 443,323 448,334 453,342 456,348 457,352 460,357 464,365 469,374 473,382 477,389 480,394 483,399 485,404 487,409 491,414 497,419 504,426 511,432 518,436 524,439 531,443 537,446 544,448 551,451 559,453 567,455 576,457 584,458 591,458 601,458 614,456 630,453 646,450 661,447 676,443 691,441 709,438 728,436 741,435" stroke="#FF00FF" stroke-width="1"/>
<path d="M262,436 270,436 278,436 286,436 294,436 302,435 310,435 318,435 326,435 334,434 342,434 350,433 358,433 366,432 374,432 382,431 390,431 398,430 406,429 414,429 422,428 430,428 438,427 446,426 454,426 462,425 470,425 478,425 486,424 494,424 502,423 510,423 518,422 526,422 534,421 542,421 550,420 558,420 566,419 574,419 582,419 590,419 598,419 606,418 614,418 622,418 630,418 638,418 646,418 654,418 662,418 670,417 678,417 686,417 694,417 702,416 710,416 718,416 726,416 734,415 742,415" stroke="#008000" stroke-width="1"/>
<path d="M263,418 262,418 261,418 268,418 288,417 315,416 341,415 363,414 384,413 401,412 411,411 418,410 424,409 432,409 439,408 446,408 452,407 458,406 464,406 469,405 475,405 481,406 486,407 492,408 501,410 514,414 529,417 546,420 564,423 583,424 601,426 617,427 631,427 646,427 661,427 675,427 691,426 709,426 728,425 741,425" stroke="#FF0000" stroke-width="1"/>
<path d="M262,466 270,466 278,466 286,466 294,466 302,466 310,466 318,466 326,466 334,466 342,466 350,466 358,465 366,465 374,464 382,463 390,461 398,458 406,454 414,449 422,442 430,434 438,425 446,415 454,405 462,395 470,386 478,380 486,377 494,376 502,378 510,382 518,388 526,394 534,401 542,407 550,413 558,417 566,420 574,422 582,423 590,423 598,423 606,423 614,423 622,422 630,422 638,421 646,421 654,421 662,421 670,422 678,422 686,422 694,422 702,422 710,423 718,423 726,423 734,424 742,424" stroke="#008000" stroke-width="1"/>
<path d="M262,418 261,418 260,418 267,418 287,417 314,416 340,415 362,414 383,414 400,413 411,412 417,411 423,410 431,409 438,409 445,408 451,408 457,407 463,406 469,406 474,406 480,406 485,407 491,409 500,411 513,414 528,418 545,421 563,423 582,425 600,426 616,427 630,428 645,428 660,428 675,427 690,427 708,426 727,426 740,426" stroke="#FF0000" stroke-width="1"/>
<path d="M262,420 262,421 263,421 267,420 275,420 287,419 300,418 313,417 327,416 340,414 352,411 363,407 375,404 389,401 404,399 415,398 420,396 421,395 424,394 430,393 438,391 445,391 451,390 457,390 463,390 468,390 474,390 480,392 485,393 491,396 500,401 513,408 528,418 545,426 563,431 581,435 600,439 617,443 634,448 650,452 663,453 676,454 690,454 708,453 726,453 740,452" stroke="#0000FF" stroke-width="1"/>
<path d="M263,415 263,415 264,415 268,415 277,415 288,415 301,414 314,413 328,412 341,411 353,408 364,404 376,401 390,398 405,396 416,394 421,393 422,392 425,391 431,389 439,388 446,387 452,386 458,386 464,386 470,386 475,387 481,388 487,390 492,393 501,397 514,405 529,415 546,424 564,429 583,432 601,435 618,440 635,445 651,449 665,450 677,450 691,450 709,450 728,449 741,448" stroke="#0000FF" stroke-width="1"/>
<path d="M262,402 270,402 278,402 286,402 294,402 302,402 310,402 318,402 326,402 334,402 342,402 350,402 358,402 366,402 374,401 382,401 390,401 398,400 406,400 414,400 422,399 430,399 438,399 446,400 454,401 462,402 470,404 478,406 486,409 494,413 502,417 510,422 518,427 526,432 534,437 542,442 550,446 558,451 566,454 574,457 582,460 590,462 598,464 606,465 614,467 622,467 630,468 638,469 646,469 654,468 662,468 670,467 678,467 686,466 694,466 702,465 710,465 718,464 726,463 734,463 742,462" stroke="#008000" stroke-width="1"/>
<path d="M261,422 262,422 262,422 266,422 275,421 287,420 299,419 312,418 326,417 339,415 351,411 362,408 374,405 388,402 403,400 414,398 419,397 421,396 423,395 430,393 437,392 444,391 451,391 457,391 462,391 468,391 473,391 479,392 485,394 491,397 499,401 512,409 528,419 544,427 562,432 581,436 599,439 617,444 634,449 649,453 663,454 676,454 689,454 707,454 726,454 739,453" stroke="#0000FF" stroke-width="1"/>
<path d="M262,423 270,423 278,423 286,423 294,423 302,422 310,422 318,421 326,420 334,419 342,417 350,415 358,413 366,410 374,406 382,402 390,397 398,392 406,387 414,382 422,376 430,371 438,367 446,363 454,360 462,359 470,359 478,360 486,363 494,368 502,374 510,382 518,390 526,400 534,410 542,420 550,429 558,438 566,446 574,453 582,459 590,463 598,467 606,470 614,472 622,474 630,476 638,477 646,477 654,478 662,478 670,478 678,478 686,478 694,478 702,478 710,478 718,478 726,478 734,478 742,478" stroke="#008000" stroke-width="1"/>
<path d="M263,421 262,421 261,421 268,421 288,420 315,419 341,418 363,417 384,417 401,417 412,416 418,415 425,414 432,414 439,414 446,414 452,413 458,412 464,412 470,412 475,412 481,412 487,412 492,413 501,415 514,418 529,422 546,425 564,428 583,430 601,432 617,434 631,434 646,435 661,435 676,434 691,434 709,434 728,433 741,433" stroke="#FF0000" stroke-width="1"/>
<path d="M262,418 261,418 261,418 267,418 287,417 315,416 340,415 363,414 384,413 400,413 411,411 418,410 424,410 431,409 439,409 445,408 452,407 458,407 463,406 469,406 475,406 480,406 486,407 492,408 500,411 513,414 529,417 545,421 563,423 582,424 600,426 616,427 631,427 645,428 660,427 675,427 690,426 709,426 727,426 740,425" stroke="#FF0000" stroke-width="1"/>
<path d="M259,525 262,519 266,510 270,502 274,494 277,487 280,479 283,471 286,463 288,455 291,446 293,437 294,428 296,420 297,413 298,403 300,388 302,370 305,353 307,336 310,319 313,303 315,285 318,268 320,253 322,241 324,233 326,225 328,217 330,210 332,204 334,199 336,195 337,192 339,189 342,187 344,186 347,186 350,188 353,190 356,192 359,194 362,196 365,197 368,199 372,200 375,201 378,203 381,205 385,207 388,210 391,214 394,219 398,226 401,235 406,246 412,259 417,272 422,283 426,294 430,303 433,309 435,314 438,320 443,329 449,339 453,348 456,353 458,357 460,363 464,371 469,380 473,388 477,394 480,400 483,405 486,410 488,414 491,419 497,425 504,431 511,437 518,441 525,445 531,448 538,451 544,453 551,456 559,458 568,460 576,462 584,463 592,463 601,463 615,461 631,458 646,455 661,452 676,449 691,446 709,443 728,441 741,440" stroke="#FF00FF" stroke-width="1"/>
<path d="M261,419 260,419 259,419 266,419 286,418 313,417 339,416 361,416 382,415 399,414 410,413 416,412 423,411 430,411 437,411 444,410 450,410 456,409 462,408 468,408 473,408 479,408 485,409 491,410 499,412 512,415 528,419 544,422 562,425 581,427 599,429 615,430 630,430 644,431 659,430 674,430 689,430 707,429 726,429 739,429" stroke="#FF0000" stroke-width="1"/>
<path d="M263,417 262,417 261,417 268,417 288,416 315,415 341,414 363,413 384,411 401,410 411,409 418,408 424,407 432,407 439,406 446,405 452,404 458,404 464,403 469,402 475,402 481,403 486,404 492,406 501,408 514,411 529,415 546,418 564,420 583,421 601,422 617,423 631,424 646,424 661,424 675,423 691,422 709,422 728,422 741,421" stroke="#FF0000" stroke-width="1"/>
<path d="M262,417 261,417 260,417 267,417 287,416 314,415 340,414 363,413 383,412 400,411 411,410 417,409 424,408 431,408 438,407 445,406 452,406 457,405 463,404 469,404 474,404 480,404 486,405 492,407 500,409 513,412 529,416 545,419 563,421 582,423 600,424 616,425 631,425 645,425 660,425 675,425 690,424 708,424 727,423 740,423" stroke="#FF0000" stroke-width="1"/>
<path d="M262,418 261,418 260,418 267,418 287,417 314,416 340,415 362,414 383,414 400,413 410,412 417,411 423,410 431,409 438,409 445,408 451,408 457,407 463,406 468,406 474,406 480,406 485,407 491,409 500,411 513,414 528,417 545,421 563,423 582,425 600,426 615,427 630,428 645,428 660,428 674,427 690,427 708,426 727,426 740,426" stroke="#FF0000" stroke-width="1"/>
<path d="M257,519 260,513 264,504 268,496 271,488 275,481 278,473 281,465 283,457 286,449 288,441 290,431 292,423 293,415 294,408 296,398 298,383 300,366 302,348 305,332 308,315 310,299 313,282 316,264 318,249 320,238 322,230 324,222 326,214 328,207 330,201 332,196 333,192 335,189 337,186 339,184 342,183 345,184 348,186 351,187 354,189 357,191 361,193 364,194 367,196 370,197 374,199 377,200 380,202 384,204 387,207 390,211 393,216 397,223 400,232 405,243 411,256 416,268 421,279 426,290 429,299 432,305 434,310 437,316 442,325 448,335 452,343 455,349 457,353 459,358 463,366 468,375 472,383 476,389 479,395 482,400 485,404 487,409 490,414 496,420 503,426 510,431 517,436 524,439 530,442 537,445 543,448 550,450 558,453 567,455 575,456 583,457 591,458 600,457 614,455 630,452 645,449 660,446 675,443 690,440 709,438 727,436 740,434" stroke="#FF00FF" stroke-width="1"/>
<path d="M263,417 262,417 261,417 268,417 288,416 315,415 341,414 363,413 384,411 401,410 412,409 418,408 425,407 432,407 439,406 446,405 452,405 458,404 464,403 470,403 475,402 481,403 487,404 492,406 501,408 514,412 529,415 546,418 564,420 583,422 601,423 617,423 631,424 646,424 661,424 676,423 691,423 709,422 728,422 741,422" stroke="#FF0000" stroke-width="1"/>
<path d="M262,417 261,417 260,417 267,417 287,416 314,415 340,414 362,412 383,411 400,410 411,409 417,408 424,407 431,406 438,406 445,405 451,404 457,403 463,403 469,402 474,402 480,403 486,404 491,406 500,408 513,411 528,415 545,418 563,420 582,421 600,422 616,423 630,423 645,424 660,423 675,423 690,422 708,422 727,421 740,421" stroke="#FF0000" stroke-width="1"/>
<path d="M262,390 270,390 278,390 286,390 294,389 302,389 310,388 318,387 326,386 334,385 342,383 350,381 358,379 366,376 374,373 382,370 390,367 398,365 406,362 414,360 422,358 430,357 438,356 446,357 454,358 462,361 470,364 478,369 486,374 494,381 502,388 510,396 518,404 526,412 534,420 542,427 550,434 558,439 566,444 574,447 582,450 590,453 598,454 606,456 614,457 622,457 630,458 638,458 646,458 654,458 662,458 670,458 678,457 686,457 694,457 702,456 710,456 718,456 726,455 734,455 742,454" stroke="#008000" stroke-width="1"/>
<path d="M261,424 262,424 263,424 266,424 275,423 287,422 299,421 312,420 326,418 339,416 351,413 363,409 374,406 389,404 403,402 414,400 419,398 421,397 423,396 430,395 437,394 444,393 451,393 457,393 462,393 468,393 474,393 479,394 485,396 491,399 499,403 512,411 528,420 544,428 562,433 581,437 599,441 617,446 634,450 649,454 663,456 676,456 689,456 707,456 726,455 739,455" stroke="#0000FF" stroke-width="1"/>
<path d="M262,408 270,408 278,408 286,408 294,408 302,408 310,408 318,408 326,408 334,408 342,408 350,408 358,408 366,407 374,406 382,405 390,402 398,399 406,395 414,389 422,382 430,376 438,369 446,363 454,360 462,359 470,361 478,366 486,373 494,383 502,393 510,404 518,414 526,424 534,432 542,438 550,443 558,448 566,451 574,453 582,455 590,457 598,458 606,459 614,459 622,460 630,460 638,461 646,461 654,461 662,461 670,461 678,461 686,461 694,461 702,461 710,461 718,461 726,461 734,461 742,461" stroke="#008000" stroke-width="1"/>
<path d="M261,423 261,424 262,424 266,423 275,423 287,422 299,421 312,419 326,418 339,416 351,413 362,409 374,406 388,403 403,401 414,400 419,398 420,397 423,396 429,394 437,393 444,393 450,392 456,392 462,393 468,393 473,393 479,394 485,395 491,398 499,403 512,410 528,420 544,428 562,433 581,437 599,441 617,445 633,450 649,454 663,455 675,456 689,456 707,455 726,455 739,455" stroke="#0000FF" stroke-width="1"/>
<path d="M263,421 262,421 261,421 268,421 288,420 315,418 341,418 363,417 384,417 401,416 411,415 418,414 424,413 432,413 439,413 446,413 452,413 458,412 464,411 469,411 475,411 481,411 486,412 492,413 501,414 514,417 529,421 546,424 564,427 583,430 601,432 616,433 631,434 646,434 661,434 675,434 691,433 709,433 728,433 741,432" stroke="#FF0000" stroke-width="1"/>
<path d="M256,518 259,512 263,504 267,496 270,488 274,481 277,473 280,465 283,457 285,449 287,440 289,431 291,422 292,415 294,408 295,398 297,383 299,366 301,348 304,332 307,315 309,299 312,282 315,264 317,249 319,238 321,230 323,222 325,214 327,207 329,201 331,196 332,192 334,189 336,186 338,184 341,183 344,184 347,186 350,188 353,189 357,191 360,193 363,195 367,196 370,198 373,199 377,200 380,202 383,204 387,207 390,211 393,216 396,223 400,232 405,243 411,256 416,268 421,279 425,290 429,299 432,305 434,310 437,316 442,325 447,335 452,343 455,349 456,353 459,358 463,366 468,375 472,383 476,389 479,395 482,400 484,404 486,409 490,414 496,419 503,426 510,431 517,436 523,439 530,442 536,445 543,448 550,450 558,452 566,455 575,456 583,457 590,458 600,457 613,455 629,452 645,449 660,446 675,443 690,440 708,438 727,436 740,434" stroke="#FF00FF" stroke-width="1"/>
<path d="M262,434 270,434 278,434 286,433 294,432 302,432 310,431 318,430 326,428 334,427 342,425 350,423 358,421 366,419 374,417 382,414 390,411 398,409 406,406 414,404 422,402 430,400 438,398 446,396 454,395 462,395 470,394 478,395 486,395 494,397 502,398 510,400 518,402 526,405 534,408 542,410 550,413 558,416 566,419 574,422 582,424 590,427 598,429 606,431 614,433 622,434 630,436 638,437 646,437 654,437 662,437 670,436 678,436 686,435 694,434 702,434 710,433 718,432 726,431 734,430 742,429" stroke="#008000" stroke-width="1"/>
<path d="M262,417 260,417 260,417 267,417 286,416 314,415 340,414 362,413 383,412 400,411 410,410 417,409 423,408 430,407 438,407 445,406 451,406 457,405 463,404 468,404 474,404 480,404 485,405 491,407 500,409 512,412 528,416 545,419 562,421 582,423 600,424 615,424 630,425 645,425 659,425 674,424 690,424 708,423 726,423 740,423" stroke="#FF0000" stroke-width="1"/>
<path d="M261,432 262,432 263,432 266,432 275,431 287,429 299,427 312,425 326,423 339,421 351,417 363,414 374,411 389,409 403,407 414,406 419,404 421,402 423,401 430,400 437,399 444,399 451,398 457,399 462,399 468,399 474,399 479,400 485,401 491,404 499,408 512,415 528,424 544,432 562,437 581,442 599,446 617,451 634,455 649,459 663,461 676,461 689,462 707,462 726,461 739,461" stroke="#0000FF" stroke-width="1"/>
<path d="M262,426 263,427 263,427 267,426 276,426 288,424 300,423 313,421 327,420 340,417 352,414 363,411 375,407 389,405 404,403 415,402 420,400 422,399 424,397 430,396 438,395 445,395 452,394 457,395 463,395 469,395 474,395 480,396 486,397 492,400 500,405 513,412 529,421 545,429 563,435 582,439 600,443 618,447 635,452 650,455 664,457 677,458 690,458 708,458 727,457 740,457" stroke="#0000FF" stroke-width="1"/>
<path d="M262,410 270,410 278,410 286,410 294,410 302,410 310,410 318,410 326,410 334,410 342,410 350,410 358,409 366,408 374,407 382,406 390,403 398,400 406,395 414,389 422,382 430,375 438,367 446,361 454,356 462,353 470,353 478,355 486,361 494,370 502,380 510,391 518,403 526,414 534,425 542,435 550,443 558,450 566,456 574,460 582,463 590,466 598,467 606,469 614,470 622,470 630,471 638,471 646,471 654,470 662,469 670,469 678,468 686,467 694,466 702,466 710,465 718,464 726,463 734,462 742,462" stroke="#008000" stroke-width="1"/>
<path d="M264,419 263,420 262,420 269,419 289,419 316,418 342,416 364,416 385,415 402,415 412,414 419,413 425,412 433,411 440,411 447,411 453,410 459,410 465,409 470,409 476,409 482,409 487,410 493,411 502,413 515,416 530,419 547,423 565,425 584,428 602,429 617,430 632,431 647,431 662,431 676,431 692,430 710,430 729,430 742,429" stroke="#FF0000" stroke-width="1"/>
<path d="M263,417 263,417 264,417 268,417 277,417 288,416 301,416 314,415 328,414 341,412 353,409 364,405 376,402 390,399 405,397 416,395 421,394 422,393 425,392 431,391 439,389 446,388 452,388 458,388 464,388 469,388 475,388 481,389 486,391 492,394 501,399 514,407 529,416 546,425 564,430 583,433 601,437 618,441 635,446 651,450 665,451 677,452 691,451 709,451 728,450 741,450" stroke="#0000FF" stroke-width="1"/>
<path d="M264,419 262,419 262,419 269,419 288,418 316,417 342,416 364,415 385,415 402,414 412,413 419,412 425,411 433,411 440,411 447,410 453,410 459,409 465,408 470,408 476,408 482,408 487,409 493,410 502,412 514,415 530,419 547,422 565,425 584,427 602,428 617,429 632,430 647,430 661,430 676,430 692,429 710,429 728,429 742,428" stroke="#FF0000" stroke-width="1"/>
<path d="M268,430 270,424 273,416 276,404 278,388 281,369 283,350 286,329 289,308 291,290 292,279 293,273 294,265 296,254 298,241 300,230 302,221 304,212 306,205 309,199 311,194 314,190 316,187 319,186 321,185 323,184 325,183 328,183 331,183 334,184 339,186 346,191 355,197 363,204 369,210 374,216 379,226 385,241 391,259 399,280 412,305 428,333 441,354 449,363 454,365 460,368 468,373 478,378 490,385 505,395 522,407 540,420 560,434 580,448 600,460 616,468 631,474 650,478 680,481 715,481 740,482" stroke="#008000" stroke-width="1"/>
<path d="M262,437 270,437 278,437 286,437 294,437 302,437 310,437 318,437 326,437 334,436 342,436 350,436 358,436 366,435 374,434 382,433 390,432 398,430 406,428 414,426 422,423 430,420 438,418 446,415 454,412 462,411 470,409 478,409 486,410 494,412 502,416 510,420 518,425 526,431 534,437 542,444 550,449 558,454 566,459 574,463 582,466 590,469 598,471 606,472 614,473 622,474 630,475 638,475 646,475 654,474 662,474 670,473 678,472 686,471 694,470 702,469 710,468 718,468 726,467 734,466 742,465" stroke="#008000" stroke-width="1"/>
<path d="M251,521 254,515 258,506 262,498 266,490 269,482 272,474 275,466 278,458 280,450 282,441 284,432 286,423 287,415 289,408 290,398 292,383 294,365 297,347 299,330 302,313 305,296 307,279 310,261 312,246 314,235 316,226 318,218 320,210 322,203 324,196 326,192 327,188 329,184 331,181 334,179 336,178 339,179 343,181 346,183 350,185 353,187 357,188 360,190 364,191 368,193 371,194 375,196 378,197 381,200 385,202 388,207 391,212 394,219 398,228 403,239 409,253 414,265 419,277 423,287 427,296 430,303 432,308 435,314 440,323 445,333 450,342 453,348 455,352 457,357 461,365 466,374 470,382 474,389 477,394 480,400 482,404 485,409 488,414 494,420 501,426 508,432 515,436 521,440 528,443 534,446 541,449 548,451 556,453 564,456 573,457 581,458 588,459 598,458 612,456 627,453 643,450 658,447 673,444 688,441 706,438 725,436 738,435" stroke="#FF00FF" stroke-width="1"/>
<path d="M262,417 261,417 260,418 267,417 287,417 314,415 340,414 362,413 383,412 400,411 410,410 417,409 423,408 431,408 438,407 445,407 451,406 457,405 463,404 468,404 474,404 480,404 485,405 491,407 500,409 513,412 528,416 545,419 563,421 582,423 600,424 616,425 630,425 645,426 660,425 674,425 690,424 708,424 727,424 740,423" stroke="#FF0000" stroke-width="1"/>
<path d="M253,526 256,519 260,510 264,501 268,493 271,485 274,477 277,469 280,461 282,452 285,443 287,434 288,425 290,417 291,409 292,398 294,383 297,365 299,347 302,330 304,313 307,295 310,277 312,259 314,243 317,231 319,222 320,214 322,206 325,198 326,192 328,187 330,183 331,179 334,177 336,175 338,174 341,175 344,177 347,179 351,181 354,183 357,184 361,186 364,187 367,189 371,190 374,191 377,193 381,195 384,198 387,202 391,208 394,216 397,225 402,237 408,250 413,263 418,275 423,286 426,295 429,302 431,306 434,312 439,321 445,332 449,341 452,347 454,351 456,356 460,364 465,374 469,382 473,389 476,395 479,400 482,405 484,410 487,415 493,421 500,428 507,434 514,438 521,442 527,445 534,449 540,451 547,454 555,456 564,459 572,460 580,461 588,461 597,461 611,459 627,456 642,453 657,450 672,446 687,443 706,440 724,438 737,437" stroke="#FF00FF" stroke-width="1"/>
<path d="M261,519 264,513 268,505 272,496 276,489 279,481 282,473 285,466 288,458 290,449 292,440 294,431 296,422 298,415 299,407 300,397 302,383 304,365 307,347 309,331 312,314 315,297 317,280 320,263 322,248 324,236 326,228 328,220 330,212 332,205 334,199 336,194 337,190 339,187 341,184 343,182 346,181 348,181 351,183 354,185 357,187 360,189 363,191 366,192 370,194 373,195 376,196 379,198 382,200 385,202 389,205 392,209 395,214 398,221 402,230 407,241 413,254 418,267 423,278 427,288 431,297 434,304 436,309 439,314 444,323 449,334 454,342 457,348 459,352 461,357 465,365 470,374 474,382 478,389 481,394 484,399 486,404 489,409 492,413 498,419 505,426 512,431 519,436 525,439 532,442 539,445 545,448 552,450 560,453 569,455 577,456 585,457 592,458 602,457 616,455 631,452 647,449 662,446 677,443 692,440 710,438 729,436 742,434" stroke="#FF00FF" stroke-width="1"/>
<path d="M262,469 270,469 278,469 286,469 294,469 302,469 310,469 318,469 326,469 334,469 342,468 350,468 358,467 366,466 374,465 382,463 390,461 398,459 406,456 414,453 422,450 430,446 438,442 446,438 454,434 462,430 470,427 478,425 486,423 494,422 502,421 510,422 518,423 526,425 534,427 542,430 550,433 558,437 566,440 574,443 582,446 590,448 598,451 606,452 614,454 622,455 630,456 638,457 646,457 654,457 662,456 670,456 678,456 686,455 694,455 702,454 710,454 718,453 726,452 734,452 742,451" stroke="#008000" stroke-width="1"/>
<path d="M261,417 259,418 259,418 266,417 285,417 313,416 339,414 361,413 382,412 399,411 409,410 416,409 422,408 430,408 437,407 444,407 450,406 456,405 462,405 467,404 473,404 479,405 484,406 490,407 499,409 511,413 527,416 544,419 562,422 581,423 599,424 614,425 629,426 644,426 658,426 673,425 689,425 707,424 725,424 739,424" stroke="#FF0000" stroke-width="1"/>
<path d="M251,526 254,520 258,511 262,503 266,495 269,487 272,479 275,471 278,463 280,455 283,446 285,437 286,428 288,420 289,413 290,402 292,387 295,369 297,352 299,335 302,318 305,301 308,283 310,265 312,250 315,239 316,230 318,222 320,214 322,207 324,200 326,196 328,192 329,188 332,185 334,183 337,182 340,183 343,185 346,187 350,189 353,191 357,192 361,194 364,195 368,197 371,198 375,200 378,201 382,204 385,207 388,211 391,216 394,223 398,232 403,243 409,257 414,269 419,281 423,292 427,301 430,307 432,312 435,318 440,327 445,338 450,347 453,352 455,356 457,362 461,370 466,379 470,387 474,394 477,399 480,404 483,409 485,414 488,419 494,425 501,431 508,437 515,441 521,445 528,448 535,451 541,454 548,456 556,458 565,461 573,462 581,463 588,464 598,463 612,461 627,458 643,455 658,452 673,449 688,446 706,443 725,441 738,440" stroke="#FF00FF" stroke-width="1"/>
<path d="M259,522 261,516 266,508 270,499 273,492 276,484 280,476 282,469 285,461 288,453 290,444 292,435 294,426 295,418 296,411 298,401 299,386 302,369 304,351 307,334 309,318 312,301 315,284 317,266 320,252 322,240 324,232 326,224 328,216 330,209 332,203 333,198 335,194 337,191 339,188 341,186 343,185 346,186 349,187 352,189 355,191 358,193 362,195 365,196 368,198 371,199 375,201 378,202 381,204 384,206 388,209 391,213 394,218 397,225 401,234 406,245 412,258 417,270 422,282 426,292 430,301 433,308 435,312 438,318 443,327 448,337 453,346 456,352 458,356 460,361 464,369 469,378 473,386 477,392 480,398 483,403 485,408 488,412 491,417 497,423 504,429 511,435 518,439 524,442 531,446 537,449 544,451 551,454 559,456 567,458 576,460 584,461 591,461 601,461 615,459 630,456 646,453 661,450 676,446 691,444 709,441 728,439 741,438" stroke="#FF00FF" stroke-width="1"/>
<path d="M262,266 263,263 265,259 267,252 270,240 275,225 278,212 280,203 281,196 283,191 285,186 287,183 290,182 295,185 301,190 307,195 311,197 314,198 317,199 320,200 324,201 327,202 329,202 331,203 333,205 337,209 341,215 345,221 349,227 352,233 355,240 358,247 360,253 362,260 364,267 366,273 369,280 372,287 376,293 380,302 386,314 392,328 398,340 402,348 405,354 408,360 411,368 415,376 420,384 427,390 435,396 445,400 455,403 466,405 480,408 498,414 519,421 540,428 560,435 580,443 600,450 619,457 639,464 660,470 688,474 719,478 740,480" stroke="#008000" stroke-width="1"/>
<path d="M262,375 263,376 265,377 267,380 271,384 275,389 280,394 284,399 288,403 293,408 298,412 303,416 310,420 319,423 329,427 340,430 352,434 366,437 380,440 396,442 413,444 430,445 446,443 463,441 480,440 499,443 520,449 540,455 560,463 581,472 600,480 616,486 631,491 650,494 680,494 715,492 740,490" stroke="#008000" stroke-width="1"/>
<path d="M251,519 254,513 258,505 262,496 265,489 269,481 272,473 275,465 277,457 280,449 282,440 284,431 286,422 287,415 288,407 290,397 292,382 294,365 296,347 299,330 302,314 304,297 307,279 309,262 312,247 314,236 316,227 318,219 320,211 322,204 324,198 325,193 327,189 329,186 331,183 334,181 336,180 339,180 343,182 346,184 349,186 353,188 357,190 360,191 364,193 367,194 371,196 374,197 378,199 381,201 385,204 388,208 391,213 394,220 398,229 403,240 409,253 414,266 419,277 423,288 427,297 430,303 432,308 435,314 440,323 445,333 450,342 453,348 454,352 457,357 461,365 466,374 470,382 474,388 477,394 480,399 482,404 484,408 488,413 494,419 501,425 508,431 515,435 521,439 528,442 534,445 541,448 548,450 556,452 564,455 573,456 581,457 588,458 598,457 611,455 627,452 643,449 658,446 673,443 688,440 706,438 725,436 738,434" stroke="#FF00FF" stroke-width="1"/>
<path d="M257,521 260,515 264,506 268,498 272,490 275,482 278,475 281,467 284,459 286,451 289,442 291,433 292,424 294,416 295,409 296,399 298,384 301,366 303,349 306,332 308,316 311,299 314,281 316,264 318,249 321,238 323,229 324,221 326,213 329,206 330,200 332,195 334,191 335,188 338,185 340,183 342,182 345,183 348,185 351,187 354,188 358,190 361,192 364,194 367,195 371,197 374,198 377,199 381,201 384,203 387,206 391,210 394,216 397,222 401,231 406,242 411,255 417,268 421,279 426,290 430,299 432,305 435,310 438,316 442,325 448,335 453,344 455,349 457,354 460,359 464,367 468,376 473,384 476,390 480,396 483,401 485,406 487,410 491,415 496,421 503,427 511,433 517,437 524,441 531,444 537,447 544,449 551,452 559,454 567,456 576,458 583,459 591,459 601,459 614,457 630,454 646,451 660,448 675,445 691,442 709,439 727,437 741,436" stroke="#FF00FF" stroke-width="1"/>
<path d="M260,521 263,515 267,507 271,498 275,491 278,483 281,475 284,467 287,460 289,451 292,442 294,433 295,424 297,417 298,409 299,399 301,384 304,367 306,349 308,333 311,316 314,299 317,282 319,264 321,249 324,238 325,229 327,221 329,213 331,206 333,200 335,195 337,192 338,188 340,185 343,183 345,182 348,183 351,185 353,187 357,189 360,191 363,192 366,194 369,195 372,197 375,198 379,199 382,201 385,204 388,206 392,210 395,216 398,223 402,231 407,243 412,256 418,268 423,280 427,290 431,299 434,306 436,310 439,316 444,325 449,336 454,344 456,350 458,354 461,359 465,367 469,376 474,384 477,391 481,396 484,401 486,406 488,410 492,415 498,421 505,428 512,433 518,438 525,441 532,444 538,447 545,450 552,452 560,455 568,457 577,458 584,459 592,460 602,459 615,457 631,454 647,451 662,448 676,445 692,442 710,440 729,438 742,436" stroke="#FF00FF" stroke-width="1"/>
<path d="M262,426 270,426 278,426 286,426 294,426 302,425 310,425 318,425 326,424 334,423 342,423 350,422 358,420 366,419 374,417 382,415 390,413 398,411 406,409 414,407 422,405 430,403 438,401 446,400 454,399 462,399 470,399 478,400 486,402 494,404 502,406 510,409 518,412 526,416 534,419 542,422 550,425 558,428 566,431 574,433 582,435 590,437 598,438 606,439 614,440 622,441 630,441 638,442 646,442 654,442 662,442 670,443 678,443 686,443 694,443 702,443 710,443 718,443 726,443 734,443 742,443" stroke="#008000" stroke-width="1"/>
<path d="M263,417 263,417 264,417 268,417 276,416 288,416 301,415 314,414 328,413 341,412 353,409 364,405 376,402 390,399 405,397 416,395 421,394 422,393 425,392 431,390 439,389 446,388 452,387 458,387 464,387 469,388 475,388 481,389 486,391 492,394 501,398 514,406 529,416 546,424 564,429 582,433 601,436 618,441 635,446 651,450 664,451 677,451 691,451 709,451 727,450 741,449" stroke="#0000FF" stroke-width="1"/>
<path d="M250,525 253,519 257,511 261,502 265,494 268,487 271,479 274,471 277,463 279,455 282,446 284,437 285,428 287,420 288,413 289,403 291,388 293,370 296,352 298,336 301,319 304,302 306,284 309,267 311,252 313,240 315,232 317,224 319,216 321,209 323,202 325,198 327,194 328,190 331,188 333,185 336,184 339,185 342,187 346,189 349,191 353,193 356,194 360,196 364,198 367,199 371,200 374,202 378,203 381,206 384,208 388,213 391,218 394,225 398,234 403,245 408,258 414,271 418,282 423,293 427,302 430,308 432,313 435,319 440,328 445,338 450,347 452,353 454,357 457,362 461,370 465,379 470,387 473,394 477,399 480,405 482,409 484,414 488,419 494,425 501,431 508,437 514,441 521,445 528,448 534,451 541,453 548,456 556,458 564,460 573,462 580,463 588,463 598,463 611,461 627,458 643,455 658,452 672,449 688,446 706,443 725,441 738,440" stroke="#FF00FF" stroke-width="1"/>
<path d="M263,417 262,417 261,417 268,417 288,416 315,415 341,414 363,412 384,411 401,410 411,409 418,408 424,407 432,406 439,406 446,405 452,404 458,403 464,403 469,402 475,402 481,403 486,404 492,406 501,408 514,411 529,415 546,418 564,420 583,421 601,422 617,423 631,423 646,424 661,423 675,423 691,422 709,422 728,421 741,421" stroke="#FF0000" stroke-width="1"/>
<path d="M262,457 270,457 278,457 286,457 294,456 302,456 310,456 318,455 326,455 334,454 342,452 350,450 358,447 366,444 374,439 382,434 390,427 398,420 406,412 414,403 422,395 430,386 438,378 446,372 454,367 462,364 470,363 478,364 486,368 494,374 502,381 510,390 518,399 526,409 534,418 542,427 550,435 558,442 566,448 574,453 582,457 590,460 598,462 606,464 614,466 622,466 630,467 638,468 646,467 654,467 662,466 670,465 678,465 686,464 694,463 702,462 710,462 718,461 726,460 734,459 742,459" stroke="#008000" stroke-width="1"/>
<path d="M262,428 262,428 263,428 267,428 276,427 288,426 300,424 313,423 327,421 340,418 352,415 363,412 375,408 389,406 404,404 415,403 420,401 421,400 424,398 430,397 438,396 445,396 451,396 457,396 463,396 469,396 474,396 480,397 486,399 492,401 500,406 513,413 529,422 545,430 563,435 582,440 600,444 618,448 634,453 650,456 664,458 676,459 690,459 708,459 727,458 740,458" stroke="#0000FF" stroke-width="1"/>
<path d="M263,418 262,418 261,418 268,418 288,417 315,416 341,415 364,414 385,413 401,412 412,411 418,410 425,409 432,408 439,408 446,407 453,407 459,406 464,405 470,405 475,405 481,405 487,406 493,408 501,410 514,413 530,417 546,420 564,422 583,424 601,425 617,426 632,426 646,427 661,426 676,426 691,425 709,425 728,425 741,424" stroke="#FF0000" stroke-width="1"/>
<path d="M262,425 262,425 263,425 267,425 275,425 287,425 300,425 313,426 326,426 340,426 352,426 363,425 375,423 387,418 399,413 410,408 416,405 419,403 424,399 430,392 438,384 445,377 451,373 457,370 463,369 468,368 474,369 480,371 486,374 493,379 500,384 506,390 513,397 520,404 526,413 534,422 545,431 561,439 581,446 600,453 615,457 630,459 645,460 659,460 674,458 690,456 708,453 726,450 740,448" stroke="#00FFFF" stroke-width="1"/>
<path d="M261,426 261,426 262,427 266,426 275,426 286,424 299,423 312,421 326,420 339,417 351,414 362,411 374,407 388,405 403,403 414,402 419,400 420,399 423,397 429,396 437,395 444,395 450,394 456,395 462,395 468,395 473,395 479,396 484,397 490,400 499,405 512,412 527,421 544,429 562,434 581,439 599,443 616,447 633,452 649,455 663,457 675,458 689,458 707,458 726,457 739,457" stroke="#0000FF" stroke-width="1"/>
<path d="M262,395 270,395 278,395 286,394 294,394 302,393 310,392 318,392 326,391 334,390 342,389 350,388 358,387 366,386 374,385 382,384 390,383 398,382 406,382 414,382 422,382 430,382 438,383 446,385 454,387 462,389 470,392 478,396 486,400 494,405 502,410 510,415 518,421 526,426 534,432 542,437 550,441 558,446 566,449 574,453 582,456 590,458 598,460 606,462 614,464 622,465 630,466 638,467 646,468 654,469 662,469 670,470 678,470 686,471 694,471 702,472 710,472 718,472 726,472 734,473 742,473" stroke="#008000" stroke-width="1"/>
<path d="M256,525 259,519 263,510 267,501 270,494 274,486 277,478 280,470 283,462 285,454 287,445 289,436 291,427 292,419 294,412 295,402 297,387 299,369 302,351 304,335 307,318 310,301 312,284 315,266 317,251 319,240 321,231 323,223 325,215 327,208 329,201 331,197 332,193 334,189 336,187 338,184 341,183 344,184 347,186 350,188 353,190 357,192 360,193 363,195 367,196 370,198 373,199 377,201 380,202 383,205 387,207 390,212 393,217 396,224 400,233 405,244 411,257 416,270 421,281 425,292 429,301 432,307 434,312 437,318 442,327 447,338 452,346 455,352 457,356 459,362 463,369 468,379 472,387 476,393 479,399 482,404 484,409 487,413 490,418 496,424 503,430 510,436 517,440 523,444 530,447 536,450 543,453 550,455 558,458 566,460 575,461 583,462 590,463 600,462 614,460 629,457 645,454 660,451 675,448 690,445 708,443 727,441 740,439" stroke="#FF00FF" stroke-width="1"/>
<path d="M261,418 260,418 260,418 266,418 286,417 314,416 339,415 362,414 383,414 399,413 410,412 417,411 423,410 430,409 438,409 444,408 451,408 457,407 462,406 468,406 474,406 479,406 485,407 491,409 499,411 512,414 528,418 544,421 562,423 582,425 599,426 615,427 630,428 644,428 659,428 674,427 689,427 708,426 726,426 739,426" stroke="#FF0000" stroke-width="1"/>
<path d="M262,420 261,420 260,420 267,420 287,419 314,418 340,417 362,416 383,416 400,415 410,414 417,413 423,412 431,412 438,412 445,412 451,411 457,410 463,410 468,410 474,410 480,410 485,411 491,412 500,413 513,416 528,420 545,423 563,426 582,428 600,430 616,431 630,432 645,432 660,432 674,432 690,431 708,431 727,431 740,430" stroke="#FF0000" stroke-width="1"/>
<path d="M263,417 261,417 261,417 268,417 287,416 315,415 341,414 363,412 384,411 401,410 411,409 418,408 424,407 431,406 439,406 446,405 452,404 458,403 464,403 469,402 475,402 481,403 486,404 492,406 501,408 513,411 529,415 546,418 563,420 583,421 601,422 616,423 631,423 646,424 660,423 675,423 691,422 709,422 727,421 741,421" stroke="#FF0000" stroke-width="1"/>
<path d="M262,426 262,426 263,426 267,426 275,425 287,425 300,426 313,426 326,427 340,427 352,426 363,425 375,423 387,419 399,413 410,409 415,406 419,403 424,400 430,392 437,384 445,377 451,373 457,370 463,369 468,368 474,369 480,371 486,374 493,379 500,384 506,390 512,397 520,405 526,413 534,422 545,431 561,439 581,447 600,453 615,457 630,460 645,461 659,460 674,458 690,456 708,453 726,450 740,448" stroke="#00FFFF" stroke-width="1"/>
<path d="M263,433 263,433 264,433 268,433 277,432 288,430 301,428 314,426 328,424 341,421 353,418 364,414 376,411 390,409 405,408 416,406 421,404 422,403 425,401 431,400 439,400 446,399 452,399 458,399 464,400 470,400 475,399 481,400 486,402 492,405 501,409 514,416 529,425 546,432 564,438 583,442 601,447 618,451 635,456 651,459 665,461 677,462 691,462 709,462 728,462 741,462" stroke="#0000FF" stroke-width="1"/>
<path d="M263,421 263,421 264,421 268,421 276,421 288,421 301,421 314,421 327,422 341,422 353,421 364,419 376,417 388,413 400,408 411,404 417,401 420,399 425,395 431,388 439,379 446,372 452,368 458,366 464,365 469,364 475,365 481,367 487,370 494,375 501,380 507,386 514,393 521,400 527,408 535,417 546,425 562,433 582,441 601,447 616,451 631,454 646,455 660,455 675,452 691,450 709,447 727,444 741,441" stroke="#00FFFF" stroke-width="1"/>
<path d="M264,419 264,419 265,419 269,419 277,419 289,418 302,417 315,416 329,415 342,413 354,410 365,406 377,403 391,400 406,398 417,397 422,395 423,394 426,393 432,392 440,390 447,390 453,389 459,389 465,389 470,389 476,389 482,391 487,392 493,395 502,400 515,408 530,417 547,426 565,431 583,434 602,438 619,443 636,447 652,451 665,452 678,453 692,453 710,452 728,452 742,451" stroke="#0000FF" stroke-width="1"/>
<path d="M262,424 262,424 263,424 267,424 275,424 287,424 300,424 313,425 326,425 340,425 352,425 363,424 375,421 387,417 400,412 410,407 416,404 419,402 424,398 430,391 438,383 445,376 451,372 457,369 463,368 468,367 474,368 480,370 486,373 493,378 500,383 506,389 513,396 520,403 526,412 534,421 545,429 561,437 581,445 600,451 615,455 630,458 645,459 659,459 674,457 690,454 708,452 726,449 740,446" stroke="#00FFFF" stroke-width="1"/>
<path d="M262,420 262,420 263,420 267,420 276,420 287,420 300,420 313,421 327,421 340,421 352,420 363,419 375,416 387,412 400,407 410,403 416,400 419,398 424,394 430,387 438,379 445,372 451,368 457,365 463,364 468,364 474,364 480,366 486,370 493,374 500,380 506,385 513,392 520,399 527,407 534,416 545,424 561,432 581,440 600,446 616,451 630,453 645,455 660,454 674,452 690,449 708,446 727,443 740,440" stroke="#00FFFF" stroke-width="1"/>
<path d="M262,417 261,417 260,417 267,417 287,416 314,415 340,414 362,412 383,411 400,410 411,409 417,408 424,407 431,406 438,406 445,405 451,404 457,403 463,403 469,402 474,402 480,403 486,404 492,406 500,408 513,411 529,415 545,418 563,420 582,421 600,422 616,423 631,423 645,424 660,423 675,423 690,422 708,422 727,421 740,421" stroke="#FF0000" stroke-width="1"/>
<path d="M262,405 270,405 278,405 286,405 294,405 302,405 310,405 318,405 326,405 334,405 342,405 350,405 358,405 366,405 374,405 382,405 390,405 398,406 406,406 414,406 422,406 430,406 438,406 446,407 454,407 462,408 470,408 478,409 486,411 494,413 502,415 510,418 518,421 526,424 534,428 542,432 550,436 558,439 566,442 574,445 582,447 590,448 598,449 606,450 614,451 622,452 630,452 638,452 646,452 654,451 662,450 670,449 678,448 686,447 694,446 702,445 710,443 718,442 726,441 734,440 742,439" stroke="#008000" stroke-width="1"/>
<path d="M262,438 270,437 283,436 300,434 323,432 351,429 375,425 392,421 406,417 420,410 436,396 452,379 470,372 492,384 517,406 540,425 558,437 574,446 600,452 646,452 701,449 740,446" stroke="#00FFFF" stroke-width="1"/>
<path d="M264,422 264,422 265,422 269,422 277,422 289,422 302,422 315,423 328,423 342,423 354,423 365,421 377,419 389,415 402,410 412,405 418,403 421,400 426,396 432,389 440,381 447,374 453,370 459,367 465,366 470,366 476,366 482,368 488,371 495,376 502,382 508,387 515,394 522,401 529,410 536,418 547,427 563,435 583,443 602,449 617,453 632,456 647,457 662,457 676,454 692,452 710,449 729,446 742,444" stroke="#00FFFF" stroke-width="1"/>
<path d="M251,525 254,519 258,510 262,502 265,494 269,486 272,478 275,470 277,462 280,454 282,445 284,436 286,427 287,419 288,412 290,402 292,387 294,369 296,351 299,334 302,317 304,301 307,283 310,265 312,250 314,239 316,230 318,222 320,214 322,207 324,201 326,196 327,192 329,189 331,186 334,183 336,182 339,183 343,185 346,187 350,189 353,191 357,193 360,194 364,196 367,197 371,198 375,200 378,202 381,204 385,207 388,211 391,216 394,223 398,232 403,243 409,257 414,269 419,281 423,291 427,301 430,307 432,312 435,318 440,327 445,337 450,346 453,352 454,356 457,361 461,369 466,378 470,386 474,393 477,398 480,404 482,408 484,413 488,418 494,424 501,430 508,436 515,440 521,444 528,447 534,450 541,453 548,455 556,457 564,460 573,461 581,462 588,463 598,462 611,460 627,457 643,454 658,451 673,448 688,445 706,443 725,440 738,439" stroke="#FF00FF" stroke-width="1"/>
<path d="M262,416 262,416 263,416 267,416 275,416 287,415 300,415 313,414 326,413 340,411 351,408 363,405 375,401 389,399 403,396 415,395 419,393 421,392 424,391 430,390 437,389 445,388 451,387 457,387 463,387 468,387 474,387 480,389 485,390 491,393 500,398 512,406 528,416 545,424 562,429 581,432 600,436 617,441 634,446 650,449 663,451 676,451 690,451 707,450 726,450 740,449" stroke="#0000FF" stroke-width="1"/>
<path d="M255,525 257,519 262,511 266,502 269,495 272,487 276,479 278,471 281,463 284,455 286,446 288,437 290,428 291,420 292,413 294,403 295,388 298,370 300,352 303,335 305,319 308,302 311,284 313,267 316,252 318,240 320,231 322,223 324,215 326,208 328,202 329,197 331,193 333,190 335,187 337,185 340,184 343,185 346,187 349,189 352,190 356,192 359,194 362,196 366,197 369,199 373,200 376,201 379,203 383,205 386,208 389,212 393,218 396,225 399,233 404,245 410,258 415,271 420,282 425,293 428,302 431,308 433,313 436,319 441,328 447,338 451,347 454,353 456,357 458,362 462,370 467,379 471,387 475,394 478,399 481,405 484,409 486,414 489,419 495,425 502,431 509,437 516,441 523,445 529,448 536,451 542,454 549,456 557,458 566,460 574,462 582,463 590,464 599,463 613,461 629,458 644,455 659,452 674,449 689,446 708,443 726,441 739,440" stroke="#FF00FF" stroke-width="1"/>
<path d="M256,523 259,517 263,509 267,500 270,493 274,485 277,477 280,469 282,461 285,453 287,444 289,435 291,426 292,419 293,411 295,401 297,386 299,369 301,351 304,334 307,318 309,301 312,284 314,266 317,251 319,240 321,231 323,223 325,215 327,208 329,202 331,197 332,193 334,190 336,187 338,185 341,184 344,185 347,187 350,189 353,190 357,192 360,194 363,196 367,197 370,199 373,200 377,201 380,203 383,205 387,208 390,212 393,218 396,224 400,233 405,244 411,258 416,270 421,281 425,292 429,301 432,307 434,312 437,318 442,327 447,337 452,346 455,352 456,356 459,361 463,369 468,378 472,386 476,393 479,398 482,403 484,408 486,412 490,417 496,423 503,430 510,435 517,439 523,443 530,446 536,449 543,452 550,454 558,457 566,459 575,460 583,461 590,462 600,461 613,459 629,456 645,453 660,450 675,447 690,444 708,442 727,440 740,438" stroke="#FF00FF" stroke-width="1"/>
<path d="M262,421 261,421 260,421 267,421 287,420 314,419 340,418 362,417 383,417 400,417 411,416 417,415 423,414 431,414 438,414 445,413 451,413 457,412 463,412 469,412 474,412 480,412 485,412 491,413 500,415 513,418 528,421 545,425 563,428 582,430 600,432 616,433 630,434 645,435 660,435 675,434 690,434 708,434 727,433 740,433" stroke="#FF0000" stroke-width="1"/>
<path d="M263,422 264,422 265,422 268,422 277,421 289,420 301,419 314,418 328,417 341,415 353,412 365,408 376,405 391,402 405,400 416,398 421,397 423,396 425,395 432,393 439,392 446,391 453,391 459,391 464,391 470,391 476,391 481,392 487,394 493,397 501,402 514,409 530,419 546,427 564,432 583,436 601,440 619,444 636,449 651,453 665,454 678,454 691,454 709,454 728,454 741,453" stroke="#0000FF" stroke-width="1"/>
<path d="M261,429 262,429 263,429 266,429 275,428 287,426 299,425 312,423 326,421 339,419 351,416 363,412 374,409 389,407 403,405 414,403 419,402 421,400 423,399 430,398 437,397 444,396 451,396 457,396 462,396 468,396 474,396 479,397 485,399 491,402 499,406 512,413 528,422 544,430 562,436 581,440 599,444 617,449 634,453 649,457 663,458 676,459 689,459 707,459 726,459 739,458" stroke="#0000FF" stroke-width="1"/>
<path d="M263,419 264,419 264,419 268,419 277,418 289,418 301,417 314,416 328,415 341,413 353,410 364,406 376,403 390,400 405,398 416,396 421,395 423,394 425,393 432,392 439,390 446,389 453,389 459,389 464,389 470,389 475,389 481,390 487,392 493,395 501,400 514,407 530,417 546,425 564,430 583,434 601,438 619,442 636,447 651,451 665,452 678,452 691,452 709,452 728,452 741,451" stroke="#0000FF" stroke-width="1"/>
<path d="M261,423 262,423 262,423 266,423 275,423 287,423 299,423 312,424 326,424 339,424 351,424 363,423 374,420 387,416 399,411 409,406 415,404 419,401 423,397 430,390 437,382 444,375 451,371 457,368 462,367 468,366 474,367 479,369 486,372 493,377 499,382 506,388 512,395 519,402 526,411 534,420 544,428 561,436 581,444 599,450 615,454 630,457 644,458 659,458 674,456 689,453 708,450 726,447 739,445" stroke="#00FFFF" stroke-width="1"/>
<path d="M262,418 261,418 260,418 267,418 287,417 314,416 340,415 362,414 383,413 400,412 411,411 417,410 424,409 431,408 438,408 445,407 451,407 457,406 463,405 469,405 474,405 480,405 486,406 491,408 500,410 513,413 528,417 545,420 563,422 582,424 600,425 616,426 630,426 645,427 660,426 675,426 690,425 708,425 727,425 740,424" stroke="#FF0000" stroke-width="1"/>
<path d="M262,393 270,393 278,393 286,393 294,393 302,393 310,393 318,393 326,393 334,393 342,393 350,393 358,394 366,394 374,394 382,394 390,394 398,394 406,395 414,395 422,396 430,397 438,398 446,399 454,400 462,402 470,405 478,408 486,411 494,415 502,420 510,425 518,430 526,436 534,442 542,448 550,454 558,459 566,464 574,468 582,472 590,475 598,477 606,479 614,481 622,482 630,483 638,484 646,484 654,484 662,484 670,483 678,483 686,483 694,482 702,482 710,481 718,481 726,480 734,480 742,479" stroke="#008000" stroke-width="1"/>
<path d="M264,419 263,419 262,419 269,419 289,418 316,417 342,416 364,415 385,415 402,414 413,413 419,412 426,411 433,410 440,410 447,410 453,409 459,408 465,408 471,407 476,407 482,408 488,409 493,410 502,412 515,415 530,419 547,422 565,424 584,426 602,428 618,429 632,429 647,430 662,430 677,429 692,429 710,428 729,428 742,428" stroke="#FF0000" stroke-width="1"/>
<path d="M262,410 270,410 278,410 286,410 294,410 302,410 310,410 318,410 326,410 334,410 342,410 350,410 358,410 366,409 374,408 382,406 390,404 398,400 406,396 414,390 422,383 430,375 438,367 446,361 454,356 462,354 470,354 478,358 486,365 494,374 502,384 510,395 518,406 526,416 534,425 542,433 550,439 558,445 566,450 574,453 582,456 590,459 598,461 606,462 614,463 622,464 630,465 638,465 646,466 654,466 662,466 670,466 678,466 686,466 694,466 702,466 710,466 718,466 726,466 734,466 742,466" stroke="#008000" stroke-width="1"/>
<path d="M263,423 263,423 264,423 268,423 276,422 288,421 301,420 314,419 327,417 341,415 352,412 364,409 376,405 390,403 404,401 416,399 420,398 422,396 425,395 431,394 438,393 446,392 452,392 458,392 464,392 469,392 475,392 481,393 486,395 492,398 501,402 513,410 529,419 546,427 563,433 582,436 601,440 618,445 635,450 651,453 664,455 677,455 691,455 708,455 727,455 741,454" stroke="#0000FF" stroke-width="1"/>
<path d="M262,414 262,414 263,414 267,414 275,414 287,414 300,413 313,413 327,412 340,410 352,407 363,403 375,400 389,397 404,395 415,393 420,392 421,391 424,390 430,389 438,387 445,386 451,386 457,385 463,386 468,386 474,386 480,387 485,389 491,392 500,397 513,405 528,415 545,423 563,428 581,431 600,435 617,439 634,444 650,448 664,449 676,449 690,449 708,449 726,448 740,448" stroke="#0000FF" stroke-width="1"/>
<path d="M261,520 263,514 268,505 272,497 275,489 278,482 282,474 284,466 287,458 290,450 292,441 294,432 296,423 297,415 298,408 300,398 302,383 304,365 306,348 309,331 311,315 314,298 317,280 319,263 322,248 324,237 326,228 328,220 330,212 332,205 334,199 335,194 337,190 339,187 341,184 343,182 345,181 348,182 351,184 354,186 357,187 360,189 363,191 366,193 369,194 372,195 375,197 379,198 382,200 385,202 388,205 392,209 395,215 398,221 402,230 407,241 413,254 418,267 423,278 427,289 431,298 434,304 436,309 439,315 444,324 449,334 454,343 457,348 458,353 461,358 465,366 470,375 474,383 477,389 481,395 484,400 486,405 488,409 492,414 498,420 505,426 512,432 519,436 525,440 532,443 538,446 545,448 552,451 560,453 568,455 577,457 584,458 592,458 602,458 615,456 631,453 647,450 662,447 676,444 692,441 710,438 729,436 742,435" stroke="#FF00FF" stroke-width="1"/>
<path d="M254,520 256,514 261,506 265,497 268,489 271,482 275,474 277,466 280,458 283,450 285,441 287,431 289,422 290,415 291,407 293,397 295,382 297,365 299,347 302,330 304,313 307,296 310,279 312,261 315,246 317,235 319,226 321,218 323,210 325,203 327,197 328,192 330,188 332,185 334,182 336,180 339,179 342,179 345,181 348,183 351,185 355,187 358,189 362,190 365,192 369,193 372,195 376,196 379,198 382,200 386,203 389,207 392,212 395,219 399,228 404,239 410,253 415,265 420,277 424,287 428,296 431,303 433,308 436,314 441,323 446,333 451,342 454,347 456,352 458,357 462,365 467,374 471,382 475,389 478,394 481,399 483,404 486,408 489,413 495,419 502,426 509,431 516,436 522,439 529,443 536,446 542,448 549,451 557,453 566,455 574,457 582,458 589,458 599,458 613,456 628,453 644,450 659,447 674,443 689,441 707,438 726,436 739,434" stroke="#FF00FF" stroke-width="1"/>
<path d="M262,421 261,421 260,421 267,421 287,420 314,419 340,418 362,417 383,417 400,417 411,416 417,414 424,414 431,413 438,413 445,413 451,413 457,412 463,412 469,411 474,411 480,412 486,412 492,413 500,415 513,418 529,421 545,425 563,427 582,430 600,432 616,433 631,434 645,434 660,434 675,434 690,434 708,433 727,433 740,433" stroke="#FF0000" stroke-width="1"/>
<path d="M261,433 261,434 262,434 266,433 274,432 286,431 299,429 312,427 325,424 339,422 350,418 362,415 374,412 388,410 402,408 414,407 418,405 420,403 423,402 429,401 436,400 444,400 450,400 456,400 462,400 467,400 473,400 479,401 484,402 490,405 499,409 511,416 527,425 544,433 561,438 580,443 599,447 616,452 633,456 649,460 662,461 675,462 689,463 706,463 725,462 739,462" stroke="#0000FF" stroke-width="1"/>
<path d="M262,438 270,437 278,437 286,436 294,436 302,435 310,434 318,433 326,432 334,431 342,430 350,428 358,427 366,425 374,424 382,422 390,421 398,419 406,418 414,417 422,416 430,415 438,414 446,413 454,413 462,412 470,412 478,412 486,412 494,412 502,412 510,412 518,412 526,413 534,413 542,413 550,413 558,413 566,413 574,413 582,413 590,413 598,413 606,413 614,413 622,413 630,413 638,413 646,413 654,412 662,411 670,410 678,409 686,409 694,408 702,407 710,406 718,405 726,404 734,403 742,402" stroke="#008000" stroke-width="1"/>
<path d="M262,405 279,405 303,405 330,405 359,404 391,402 420,400 443,397 462,394 480,392 496,391 510,391 523,392 536,395 548,400 560,405 571,410 582,416 595,421 611,424 628,427 650,428 681,429 715,428 740,428" stroke="#008000" stroke-width="1"/>
<path d="M261,418 259,418 259,418 266,418 285,417 313,416 339,415 361,414 382,413 399,412 409,411 416,410 422,409 430,408 437,408 444,408 450,407 456,406 462,405 467,405 473,405 479,405 484,406 490,408 499,410 511,413 527,417 544,420 562,422 581,424 599,425 614,426 629,427 644,427 658,427 673,426 689,426 707,425 726,425 739,425" stroke="#FF0000" stroke-width="1"/>
<path d="M262,418 261,418 260,418 267,418 287,417 314,416 340,415 362,414 383,413 400,412 410,411 417,410 423,409 431,408 438,408 445,407 451,406 457,405 463,405 468,404 474,404 480,405 485,406 491,407 500,410 513,413 528,416 545,420 563,422 582,423 600,424 616,425 630,426 645,426 660,426 674,425 690,425 708,424 727,424 740,424" stroke="#FF0000" stroke-width="1"/>
<path d="M262,434 262,434 263,434 267,434 275,432 287,431 300,429 313,427 326,424 340,422 351,418 363,415 375,412 389,410 403,408 415,407 419,405 421,403 424,402 430,401 437,400 445,400 451,400 457,400 463,400 468,400 474,400 480,401 485,402 491,405 500,409 512,416 528,425 545,433 562,438 581,443 600,447 617,452 634,456 650,460 663,462 676,462 690,463 707,463 726,462 740,462" stroke="#0000FF" stroke-width="1"/>
<path d="M262,421 262,421 263,421 267,421 276,421 288,421 300,421 313,422 327,423 340,422 352,422 364,420 375,418 388,414 400,409 410,404 416,402 420,399 424,395 431,388 438,380 445,373 451,369 457,367 463,365 469,365 474,365 480,367 487,371 493,375 500,381 507,387 513,393 520,400 527,409 534,417 545,426 562,434 581,442 600,448 616,452 631,455 645,456 660,456 675,453 690,451 708,448 727,445 740,442" stroke="#00FFFF" stroke-width="1"/>
<path d="M261,429 261,429 262,429 266,429 274,428 286,427 299,425 312,423 326,421 339,419 351,416 362,412 374,409 388,407 403,405 414,404 419,402 420,400 423,399 429,398 437,397 444,397 450,397 456,397 462,397 467,397 473,397 479,398 484,399 490,402 499,406 512,414 527,423 544,431 562,436 580,440 599,444 616,449 633,454 649,457 662,459 675,459 689,460 707,460 725,459 739,459" stroke="#0000FF" stroke-width="1"/>
<path d="M253,526 256,519 260,511 264,502 267,493 270,485 274,476 277,468 279,460 282,451 284,442 286,433 288,423 289,416 290,409 292,399 294,383 296,364 298,346 301,329 303,312 306,295 309,278 311,259 314,244 316,232 318,223 320,215 322,207 324,200 326,193 327,188 329,184 331,180 333,177 335,175 338,174 340,175 343,177 347,179 350,181 353,183 357,185 360,186 363,187 367,188 370,190 373,191 377,194 380,196 383,199 387,204 390,209 393,216 397,224 402,236 407,250 413,263 417,275 422,285 426,294 428,301 431,306 434,312 438,322 444,332 449,342 451,348 453,352 456,358 460,365 464,374 469,383 472,389 476,395 479,400 481,405 483,409 487,414 492,421 500,428 507,434 513,439 520,442 527,446 533,449 540,451 547,453 555,456 563,458 572,460 579,461 587,461 597,461 610,458 626,455 642,452 656,449 671,446 687,443 705,441 723,438 737,436" stroke="#FF00FF" stroke-width="1"/>
<path d="M261,421 261,421 262,421 266,421 275,420 286,420 299,419 312,417 326,416 339,414 351,411 362,407 374,404 388,402 403,400 414,398 419,396 420,395 423,394 429,393 437,392 444,391 450,391 456,391 462,391 468,391 473,391 479,392 484,394 490,396 499,401 512,409 527,418 544,426 562,432 581,435 599,439 616,444 633,449 649,452 663,454 675,454 689,454 707,454 726,453 739,453" stroke="#0000FF" stroke-width="1"/>
<path d="M261,414 261,414 262,414 266,414 274,414 286,414 299,413 312,413 326,412 339,410 351,407 362,403 374,400 388,397 403,395 414,393 419,392 420,391 423,390 429,389 437,387 444,386 450,386 456,386 462,386 467,386 473,386 479,387 484,389 490,392 499,397 512,405 527,415 544,423 562,428 580,431 599,435 616,439 633,444 649,448 662,449 675,449 689,449 707,449 725,448 739,448" stroke="#0000FF" stroke-width="1"/>
<path d="M262,422 262,422 263,422 267,422 276,422 288,422 300,422 313,422 327,423 340,423 352,422 364,420 375,418 388,414 400,409 410,405 416,402 420,399 424,396 431,389 438,380 445,373 451,369 457,367 463,365 469,365 474,366 480,367 487,371 493,376 500,381 507,387 513,393 520,401 527,409 534,418 545,426 562,434 581,442 600,448 616,452 630,455 645,456 660,456 675,454 690,451 708,448 727,445 740,442" stroke="#00FFFF" stroke-width="1"/>
<path d="M264,421 264,421 265,421 269,421 277,421 289,421 302,421 315,421 328,422 342,422 354,421 365,419 377,417 389,413 402,408 412,404 418,401 421,399 426,395 432,388 440,379 447,372 453,368 459,366 465,365 470,364 476,365 482,367 488,370 495,375 502,380 508,386 515,393 522,400 529,408 536,417 547,425 563,433 583,441 602,447 617,451 632,454 647,455 661,455 676,453 692,450 710,447 729,444 742,441" stroke="#00FFFF" stroke-width="1"/>
<path d="M261,419 260,419 259,420 266,419 286,418 313,417 339,416 361,416 382,415 399,415 410,414 416,412 423,412 430,411 437,411 444,411 450,410 456,409 462,409 468,408 473,408 479,409 485,409 491,411 499,413 512,416 527,419 544,423 562,425 581,427 599,429 615,430 630,431 644,431 659,431 674,430 689,430 707,430 726,429 739,429" stroke="#FF0000" stroke-width="1"/>
<path d="M262,408 270,408 278,408 286,408 294,408 302,408 310,408 318,408 326,408 334,408 342,408 350,408 358,407 366,406 374,405 382,403 390,401 398,397 406,392 414,386 422,380 430,374 438,367 446,363 454,359 462,359 470,360 478,365 486,372 494,381 502,391 510,402 518,413 526,424 534,434 542,444 550,452 558,459 566,464 574,469 582,472 590,475 598,477 606,478 614,479 622,480 630,481 638,481 646,481 654,481 662,480 670,480 678,480 686,480 694,479 702,479 710,478 718,478 726,478 734,477 742,477" stroke="#008000" stroke-width="1"/>
<path d="M272,430 274,424 278,416 281,404 283,388 286,370 288,350 291,327 294,304 296,285 298,276 299,271 300,265 302,254 303,242 305,230 307,219 309,208 311,199 313,194 315,190 318,188 322,186 326,185 330,185 335,187 339,191 345,195 352,198 359,202 366,207 373,214 379,221 386,232 392,245 398,261 406,280 418,305 431,333 443,355 451,364 458,367 465,370 474,376 484,383 495,392 508,403 523,415 540,428 559,442 580,458 600,470 616,478 631,484 650,488 680,489 715,489 740,488" stroke="#008000" stroke-width="1"/>
<path d="M255,522 258,516 262,507 266,499 269,491 273,484 276,476 279,468 281,460 284,452 286,443 288,434 290,425 291,417 292,410 294,400 296,385 298,368 300,350 303,333 305,317 308,300 311,283 313,265 316,250 318,239 320,230 322,222 324,214 326,207 328,201 329,196 331,192 333,189 335,186 337,184 340,183 343,184 346,186 349,188 352,189 356,191 359,193 363,195 366,196 369,198 373,199 376,200 379,202 383,204 386,207 389,211 393,217 396,224 399,232 404,243 410,257 415,269 420,280 425,291 428,300 431,306 433,311 436,317 441,326 447,336 451,345 454,351 456,355 458,360 462,368 467,377 471,385 475,391 478,397 481,402 484,407 486,411 489,416 495,422 502,428 509,434 516,438 523,442 529,445 536,448 542,450 549,453 557,455 566,457 574,459 582,460 590,460 599,460 613,458 629,455 644,452 659,449 674,446 689,443 708,440 726,438 739,437" stroke="#FF00FF" stroke-width="1"/>
<path d="M262,427 263,427 263,427 267,427 276,427 288,427 300,427 313,428 327,428 340,428 352,428 364,427 375,425 388,421 400,415 410,410 416,407 420,405 424,401 431,394 438,386 445,379 452,375 457,372 463,370 469,370 474,370 480,372 487,376 494,380 500,386 507,392 513,399 520,406 527,415 535,424 545,433 562,441 582,449 600,455 616,459 631,462 645,463 660,462 675,460 690,458 708,456 727,453 740,451" stroke="#00FFFF" stroke-width="1"/>
<path d="M260,416 261,417 262,417 265,416 274,416 286,416 298,415 311,414 325,413 338,411 350,409 362,405 373,401 388,399 402,397 413,395 418,393 420,392 422,391 429,390 436,389 443,388 450,387 456,387 461,387 467,387 473,388 478,389 484,391 490,393 498,398 511,406 527,416 543,424 561,429 580,433 598,436 616,441 633,446 648,449 662,451 675,451 688,451 706,450 725,450 738,449" stroke="#0000FF" stroke-width="1"/>
<path d="M260,419 261,419 261,419 265,419 274,418 286,417 298,417 311,416 325,415 338,413 350,410 362,406 373,403 387,400 402,398 413,396 418,395 420,394 422,393 429,391 436,390 443,389 450,389 456,389 461,389 467,389 473,389 478,390 484,392 490,395 498,399 511,407 527,417 543,425 561,430 580,434 598,437 616,442 633,447 648,451 662,452 675,452 688,452 706,452 725,451 738,451" stroke="#0000FF" stroke-width="1"/>
<path d="M262,419 261,419 260,420 267,419 287,418 314,417 340,416 362,416 383,415 400,414 410,413 417,412 423,411 431,411 438,411 445,411 451,410 457,409 463,409 468,408 474,408 480,409 485,409 491,411 500,412 513,415 528,419 545,422 563,425 582,427 600,429 615,430 630,430 645,431 660,431 674,430 690,430 708,429 727,429 740,429" stroke="#FF0000" stroke-width="1"/>
<path d="M261,427 261,427 262,427 266,427 275,427 286,427 299,427 312,428 326,428 339,428 351,428 362,427 374,425 386,421 399,415 409,410 415,407 418,405 423,401 429,394 437,386 444,379 450,375 456,372 462,370 468,370 473,371 479,372 485,376 492,380 499,386 505,392 512,399 519,406 526,415 533,424 544,433 560,441 580,449 599,455 615,459 629,462 644,463 659,462 674,460 689,458 707,456 726,453 739,451" stroke="#00FFFF" stroke-width="1"/>
<path d="M262,415 262,416 263,416 267,415 275,415 287,415 300,414 313,413 326,413 340,411 352,408 363,404 375,401 389,398 403,396 415,394 420,393 421,392 424,391 430,390 437,388 445,387 451,387 457,386 463,387 468,387 474,387 480,388 485,390 491,393 500,397 512,406 528,415 545,424 562,429 581,432 600,435 617,440 634,445 650,449 663,450 676,450 690,450 707,450 726,449 740,449" stroke="#0000FF" stroke-width="1"/>
<path d="M262,419 262,419 263,419 267,419 275,418 287,418 300,417 313,416 326,415 340,413 352,410 363,406 375,403 389,400 403,398 415,396 420,395 421,394 424,393 430,392 437,390 445,389 451,389 457,389 463,389 468,389 474,389 480,390 485,392 491,395 500,400 512,408 528,417 545,425 562,431 581,434 600,438 617,442 634,447 650,451 663,452 676,453 690,452 707,452 726,452 740,451" stroke="#0000FF" stroke-width="1"/>
<path d="M262,428 262,428 263,428 267,428 276,428 287,428 300,428 313,428 327,429 340,429 352,428 364,428 375,426 387,421 400,416 410,411 416,408 420,405 424,402 431,395 438,386 445,379 451,375 457,372 463,371 469,370 474,371 480,373 486,376 493,381 500,386 507,392 513,399 520,407 527,415 534,425 545,434 562,442 581,450 600,456 616,460 630,462 645,463 660,463 675,461 690,459 708,456 727,453 740,451" stroke="#00FFFF" stroke-width="1"/>
<path d="M251,523 254,517 258,508 262,499 266,492 269,484 272,476 275,468 278,460 280,452 283,443 285,434 286,425 288,417 289,410 290,399 292,384 295,367 297,349 299,332 302,315 305,298 307,281 310,263 312,248 314,236 316,227 318,219 320,211 322,204 324,198 326,193 328,189 329,186 332,183 334,181 337,180 340,181 343,183 346,184 350,186 353,188 357,190 361,192 364,193 368,195 371,196 375,197 378,199 382,201 385,204 388,208 391,214 394,221 398,229 403,241 409,254 414,267 419,278 423,289 427,298 430,305 432,309 435,315 440,325 445,335 450,344 453,349 455,354 457,359 461,367 466,376 470,384 474,391 477,396 480,401 483,406 485,411 488,416 494,422 501,428 508,434 515,438 521,442 528,445 535,448 541,451 548,453 556,455 565,457 573,459 581,460 588,461 598,460 612,458 627,455 643,452 658,449 673,446 688,443 706,440 725,438 738,437" stroke="#FF00FF" stroke-width="1"/>
<path d="M261,524 264,518 268,509 272,500 275,493 279,485 282,477 285,469 287,461 290,453 292,444 294,435 296,426 297,418 298,411 300,401 302,386 304,368 306,351 309,334 312,317 314,300 317,283 319,265 322,250 324,239 326,230 328,222 330,214 332,207 334,201 336,196 337,192 339,189 341,186 343,183 345,182 348,183 351,185 354,187 357,189 360,191 363,193 366,194 369,196 372,197 376,198 379,200 382,202 385,204 389,207 392,211 395,216 398,223 402,232 407,243 413,256 418,269 423,280 427,291 431,300 434,307 436,311 439,317 444,326 449,337 454,345 457,351 458,355 461,361 465,369 470,378 474,386 478,392 481,398 484,403 486,408 488,412 492,417 498,423 505,429 512,435 519,439 525,443 532,446 538,449 545,452 552,454 560,457 568,459 577,460 585,461 592,462 602,461 615,459 631,456 647,453 662,450 677,447 692,444 710,442 729,440 742,438" stroke="#FF00FF" stroke-width="1"/>
<path d="M261,431 261,431 262,431 266,431 274,430 286,428 299,426 312,425 325,423 339,420 350,417 362,413 374,410 388,408 402,406 414,405 418,403 420,401 423,400 429,399 436,398 444,398 450,398 456,398 462,398 467,398 473,398 479,399 484,401 490,403 499,407 511,415 527,424 544,431 561,437 580,441 599,445 616,450 633,455 649,458 662,460 675,461 689,461 706,461 725,460 739,460" stroke="#0000FF" stroke-width="1"/>
<path d="M256,521 259,515 263,506 267,498 271,490 274,482 277,474 280,467 283,459 285,450 288,441 290,432 291,423 293,416 294,408 295,398 297,383 300,365 302,348 304,331 307,314 310,297 313,280 315,262 317,247 320,236 321,227 323,219 325,211 327,204 329,198 331,193 333,189 334,186 337,183 339,181 341,180 344,180 347,182 350,184 354,186 357,188 360,190 364,191 367,193 370,194 374,196 377,197 380,199 383,201 387,204 390,208 393,214 396,220 400,229 405,241 411,254 416,266 421,278 425,288 429,297 432,304 434,309 437,315 442,324 447,334 452,343 455,348 457,352 459,358 463,366 468,375 472,383 476,389 479,395 482,400 485,405 487,409 490,414 496,420 503,427 510,432 517,436 523,440 530,443 537,446 543,449 550,451 558,454 567,456 575,457 583,458 590,459 600,458 614,456 629,453 645,450 660,447 675,444 690,441 708,439 727,437 740,435" stroke="#FF00FF" stroke-width="1"/>
<path d="M261,523 264,517 268,508 272,500 276,492 279,485 282,477 285,469 288,462 290,453 292,445 294,436 296,427 297,419 299,412 300,402 302,387 304,370 307,353 309,336 312,320 315,303 317,286 320,269 322,254 324,243 326,234 328,226 330,218 332,211 334,205 336,200 337,197 339,193 341,191 343,188 346,187 348,188 351,190 354,192 357,194 360,196 363,197 366,199 369,200 373,202 376,203 379,204 382,206 385,208 389,211 392,215 395,221 398,227 402,236 407,247 413,260 418,272 423,284 427,294 431,303 434,309 436,314 439,320 444,329 449,339 454,348 457,353 459,357 461,362 465,370 470,379 474,387 478,393 481,399 484,404 486,409 489,413 492,418 498,424 505,430 512,436 519,440 525,443 532,447 539,449 545,452 552,454 560,457 569,459 577,460 585,461 592,462 602,461 616,459 631,456 647,453 662,450 677,447 692,445 710,442 729,440 742,439" stroke="#FF00FF" stroke-width="1"/>
<path d="M260,429 261,429 261,430 265,429 274,428 286,427 298,425 311,423 325,422 338,419 350,416 362,412 373,409 388,407 402,405 413,404 418,402 420,400 422,399 429,398 436,397 443,397 450,397 456,397 461,397 467,397 473,397 478,398 484,399 490,402 498,406 511,414 527,423 543,431 561,436 580,440 598,444 616,449 633,454 648,457 662,459 675,459 688,460 706,460 725,459 738,459" stroke="#0000FF" stroke-width="1"/>
<path d="M262,422 262,422 263,422 267,422 276,421 288,421 300,419 313,418 327,417 340,415 352,412 363,408 375,405 389,402 404,400 415,399 420,397 421,396 424,395 430,394 438,392 445,392 451,391 457,391 463,392 469,391 474,392 480,393 486,394 492,397 500,402 513,409 529,419 545,427 563,432 582,436 600,440 618,444 634,449 650,453 664,454 676,455 690,455 708,454 727,454 740,454" stroke="#0000FF" stroke-width="1"/>
<path d="M254,524 257,518 261,509 265,501 268,493 272,486 275,478 278,470 280,463 283,454 285,446 287,437 289,428 290,420 291,413 293,403 295,388 297,371 299,353 302,337 305,320 307,304 310,286 313,269 315,254 317,243 319,234 321,226 323,219 325,212 327,206 329,201 330,197 332,194 334,191 336,189 339,188 342,188 345,190 348,192 352,194 355,196 359,198 362,199 366,201 369,202 372,203 376,205 379,207 383,209 386,211 389,215 392,221 395,228 399,236 404,248 410,261 415,273 420,284 424,295 428,304 431,310 433,315 436,321 441,329 446,340 451,348 454,354 456,358 458,363 462,371 467,380 471,388 475,394 478,400 481,405 484,410 486,414 489,419 495,425 502,431 509,437 516,441 522,444 529,447 536,450 542,453 549,455 557,458 566,460 574,461 582,462 589,463 599,462 613,460 628,457 644,454 659,451 674,448 689,446 707,443 726,441 739,440" stroke="#FF00FF" stroke-width="1"/>
<path d="M263,421 263,421 264,421 268,421 276,421 288,420 301,421 314,421 327,422 341,422 353,421 364,419 376,417 388,413 400,408 411,404 417,401 420,398 425,395 431,387 439,379 446,372 452,368 458,366 464,364 469,364 475,365 481,366 487,370 494,375 501,380 507,386 514,392 521,400 527,408 535,416 546,425 562,433 582,440 601,447 616,451 631,454 646,455 660,454 675,452 691,450 709,447 727,443 741,441" stroke="#00FFFF" stroke-width="1"/>
<path d="M262,423 262,423 263,423 267,423 276,422 287,422 300,423 313,423 327,424 340,424 352,423 363,421 375,419 387,415 400,410 410,406 416,403 420,400 424,397 431,389 438,381 445,374 451,370 457,368 463,366 469,366 474,366 480,368 486,372 493,376 500,382 506,388 513,394 520,402 527,410 534,419 545,427 561,435 581,443 600,449 616,453 630,456 645,457 660,457 675,455 690,452 708,449 727,446 740,444" stroke="#00FFFF" stroke-width="1"/>
<path d="M263,419 262,419 261,419 268,419 288,418 315,417 341,416 363,415 384,415 401,414 412,413 418,412 425,411 432,411 439,410 446,410 452,409 458,409 464,408 470,408 475,408 481,408 487,409 493,410 501,412 514,415 530,419 546,422 564,424 583,426 601,428 617,429 632,430 646,430 661,430 676,429 691,429 709,429 728,428 741,428" stroke="#FF0000" stroke-width="1"/>
<path d="M250,525 253,519 257,510 261,502 265,494 268,487 271,479 274,471 277,463 279,455 282,446 284,437 285,428 287,420 288,413 289,403 291,388 293,370 296,353 298,336 301,319 304,303 306,285 309,268 311,253 313,241 315,233 317,225 319,217 321,210 323,204 325,199 326,195 328,192 331,189 333,187 336,186 339,186 342,188 346,190 349,192 353,194 356,196 360,197 364,199 367,200 371,201 374,203 378,205 381,207 384,210 388,214 391,219 394,226 398,235 403,246 408,259 414,272 418,283 423,294 427,303 429,309 432,314 435,320 439,329 445,339 450,348 452,353 454,357 457,363 461,371 465,380 470,388 473,394 477,400 480,405 482,409 484,414 488,419 493,425 501,431 508,437 514,441 521,445 528,448 534,451 541,453 548,456 556,458 564,460 573,462 580,463 588,463 598,463 611,461 627,458 643,455 658,452 672,449 688,446 706,443 725,441 738,440" stroke="#FF00FF" stroke-width="1"/>
<path d="M261,418 261,419 262,419 266,418 275,418 286,417 299,417 312,416 326,414 339,413 351,410 362,406 374,403 388,400 403,398 414,396 419,395 420,394 423,393 429,391 437,390 444,389 450,389 456,389 462,389 468,389 473,389 479,390 485,392 490,395 499,399 512,407 527,417 544,425 562,430 581,434 599,437 616,442 633,447 649,451 663,452 675,452 689,452 707,452 726,451 739,451" stroke="#0000FF" stroke-width="1"/>
<path d="M262,418 262,418 263,418 267,418 276,418 287,417 300,416 313,415 327,414 340,412 352,409 363,406 375,402 389,400 404,398 415,396 420,394 421,393 424,392 430,391 438,390 445,389 451,388 457,388 463,389 469,389 474,389 480,390 486,392 491,394 500,399 513,407 528,417 545,425 563,430 582,434 600,437 617,442 634,447 650,450 664,452 676,452 690,452 708,452 727,451 740,451" stroke="#0000FF" stroke-width="1"/>
<path d="M264,421 264,421 265,421 269,421 278,421 290,421 302,421 315,421 329,422 342,422 354,421 366,420 377,417 390,413 402,408 412,404 418,401 422,399 426,395 433,388 440,379 447,372 453,368 459,366 465,365 471,364 476,365 482,367 489,370 495,375 502,380 509,386 515,393 522,400 529,408 536,417 547,425 564,433 584,441 602,447 618,451 633,454 647,456 662,455 677,453 692,450 710,447 729,444 742,441" stroke="#00FFFF" stroke-width="1"/>
<path d="M262,430 270,430 278,430 286,430 294,429 302,429 310,429 318,428 326,427 334,426 342,424 350,423 358,420 366,417 374,414 382,410 390,405 398,400 406,395 414,390 422,385 430,380 438,375 446,372 454,369 462,368 470,368 478,370 486,373 494,377 502,383 510,391 518,399 526,408 534,418 542,428 550,438 558,448 566,456 574,464 582,470 590,475 598,480 606,483 614,485 622,487 630,489 638,490 646,490 654,490 662,489 670,489 678,488 686,487 694,487 702,486 710,485 718,484 726,484 734,483 742,482" stroke="#008000" stroke-width="1"/>
<path d="M262,417 261,417 260,417 267,417 287,416 314,415 340,414 363,413 384,412 400,411 411,410 418,409 424,408 431,407 439,407 445,406 452,405 458,405 463,404 469,404 474,403 480,404 486,405 492,407 500,409 513,412 529,416 545,419 563,421 582,422 600,424 616,424 631,425 645,425 660,425 675,424 690,424 708,423 727,423 740,423" stroke="#FF0000" stroke-width="1"/>
<path d="M262,426 262,426 263,426 267,426 276,426 288,426 300,426 313,427 327,427 340,427 352,427 364,426 375,424 388,420 400,414 410,409 416,406 420,404 424,400 431,393 438,385 445,378 451,374 457,371 463,369 469,369 474,370 480,371 487,375 493,380 500,385 507,391 513,398 520,405 527,414 534,423 545,432 562,440 582,448 600,454 616,458 631,460 645,462 660,461 675,459 690,457 708,454 727,451 740,449" stroke="#00FFFF" stroke-width="1"/>
<path d="M261,424 261,424 262,424 266,424 275,424 287,424 299,424 312,424 326,425 339,425 351,424 363,423 374,421 387,416 399,411 409,407 415,404 419,401 423,398 430,391 437,382 444,375 450,371 456,369 462,367 468,367 473,367 479,369 486,373 492,377 499,383 506,389 512,395 519,403 526,411 533,420 544,429 561,437 580,444 599,451 615,455 629,457 644,459 659,458 674,456 689,454 707,451 726,448 739,445" stroke="#00FFFF" stroke-width="1"/>
<path d="M263,415 263,415 264,415 268,415 277,415 288,414 301,414 314,413 328,412 341,411 353,408 364,404 376,401 390,398 405,396 416,394 421,392 422,392 425,391 431,389 439,388 446,387 452,386 458,386 464,386 470,386 475,387 481,388 486,390 492,392 501,397 514,405 529,415 546,424 564,428 583,432 601,435 618,440 635,445 651,449 665,450 677,450 691,450 709,449 728,449 741,448" stroke="#0000FF" stroke-width="1"/>
<path d="M262,426 263,426 263,426 267,426 276,425 288,424 300,423 313,421 327,419 340,417 352,414 364,410 375,407 390,405 404,403 415,401 420,400 422,399 424,397 431,396 438,395 445,394 452,394 458,394 463,395 469,395 475,395 480,395 486,397 492,400 500,404 513,412 529,421 545,429 563,434 582,438 600,442 618,447 635,452 650,455 664,457 677,457 690,457 708,457 727,457 740,457" stroke="#0000FF" stroke-width="1"/>
<path d="M263,424 263,424 264,424 268,424 276,424 288,424 301,424 314,425 328,425 341,425 353,425 364,424 376,422 388,417 401,412 411,407 417,405 420,402 425,398 431,391 439,383 446,376 452,372 458,369 464,368 469,367 475,368 481,370 487,373 494,378 501,383 507,389 514,396 521,403 528,412 535,421 546,430 562,438 582,445 601,452 617,456 631,458 646,460 661,459 675,457 691,455 709,452 728,449 741,447" stroke="#00FFFF" stroke-width="1"/>
<path d="M262,401 270,401 278,401 286,401 294,401 302,401 310,401 318,401 326,401 334,401 342,401 350,401 358,401 366,401 374,401 382,401 390,401 398,402 406,402 414,402 422,402 430,402 438,403 446,403 454,404 462,404 470,405 478,406 486,408 494,409 502,411 510,414 518,416 526,419 534,423 542,426 550,429 558,433 566,436 574,439 582,442 590,444 598,446 606,448 614,449 622,450 630,451 638,452 646,452 654,451 662,450 670,450 678,449 686,448 694,447 702,446 710,446 718,445 726,444 734,443 742,442" stroke="#008000" stroke-width="1"/>
<path d="M261,417 262,417 262,417 266,417 275,417 287,416 299,416 312,415 326,414 339,412 351,409 363,405 374,402 389,399 403,397 414,395 419,394 421,393 423,392 430,391 437,389 444,388 451,388 457,388 462,388 468,388 474,388 479,389 485,391 491,394 499,399 512,407 528,416 544,425 562,430 581,433 599,437 617,441 634,446 649,450 663,451 676,451 689,451 707,451 726,450 739,450" stroke="#0000FF" stroke-width="1"/>
<path d="M262,412 270,412 278,412 286,412 294,412 302,412 310,412 318,412 326,412 334,412 342,412 350,412 358,411 366,411 374,409 382,408 390,405 398,401 406,396 414,390 422,384 430,376 438,370 446,365 454,362 462,361 470,364 478,370 486,379 494,388 502,399 510,410 518,420 526,429 534,437 542,444 550,449 558,454 566,457 574,460 582,462 590,464 598,466 606,467 614,467 622,468 630,469 638,469 646,469 654,469 662,469 670,469 678,468 686,468 694,468 702,468 710,467 718,467 726,467 734,466 742,466" stroke="#008000" stroke-width="1"/>
<path d="M256,519 259,513 263,505 267,497 271,489 274,481 277,474 280,466 283,458 285,450 288,441 290,432 291,424 293,416 294,409 295,399 297,384 300,367 302,350 304,333 307,317 310,300 312,283 315,266 317,251 319,240 321,231 323,224 325,216 327,209 329,203 331,198 333,194 334,191 336,188 339,186 341,185 344,186 347,188 350,190 354,191 357,193 360,195 364,197 367,198 370,199 374,201 377,202 380,204 383,206 387,209 390,213 393,218 396,225 400,233 405,245 411,258 416,270 421,281 425,291 429,300 432,307 434,311 437,317 442,326 447,336 452,345 455,350 457,354 459,360 463,367 468,376 472,384 476,390 479,396 482,401 485,406 487,410 490,415 496,421 503,427 510,432 517,437 523,440 530,443 537,446 543,449 550,451 558,453 567,456 575,457 583,458 590,459 600,458 614,456 629,453 645,450 660,447 675,444 690,441 708,439 727,437 740,435" stroke="#FF00FF" stroke-width="1"/>
<path d="M262,448 269,448 280,447 292,445 307,442 324,438 340,434 352,432 363,430 375,428 389,426 404,423 420,420 439,416 459,412 480,410 500,412 520,416 540,420 557,424 574,427 600,430 646,431 701,430 740,430" stroke="#FF0000" stroke-width="1"/>
<path d="M261,418 260,418 259,418 266,418 286,417 313,416 339,415 361,414 382,413 399,412 410,411 416,410 423,409 430,408 437,408 444,407 450,406 456,405 462,405 468,404 473,404 479,405 485,406 490,407 499,410 512,413 527,416 544,420 562,422 581,423 599,424 615,425 629,426 644,426 659,426 674,425 689,425 707,424 726,424 739,424" stroke="#FF0000" stroke-width="1"/>
<path d="M262,421 262,421 263,421 267,421 276,421 287,421 300,421 313,421 327,422 340,422 352,421 363,419 375,417 387,413 400,408 410,404 416,401 419,399 424,395 430,388 438,379 445,372 451,368 457,366 463,365 469,364 474,365 480,367 486,370 493,375 500,380 506,386 513,393 520,400 527,408 534,417 545,425 561,433 581,441 600,447 616,451 630,454 645,455 660,455 675,453 690,450 708,447 727,444 740,441" stroke="#00FFFF" stroke-width="1"/>
<path d="M262,421 261,421 260,421 267,421 287,420 314,419 340,418 363,417 384,417 400,416 411,416 418,414 424,413 431,413 439,413 445,413 452,413 458,412 463,411 469,411 475,411 480,411 486,412 492,413 500,414 513,417 529,421 545,424 563,427 582,430 600,432 616,433 631,434 645,434 660,434 675,434 690,433 709,433 727,433 740,432" stroke="#FF0000" stroke-width="1"/>
<path d="M262,421 261,421 261,421 267,421 287,420 315,419 340,418 363,418 384,418 400,417 411,416 418,415 424,414 431,414 439,414 445,414 452,413 458,413 463,412 469,412 475,412 480,412 486,413 492,414 500,415 513,418 529,422 545,425 563,428 582,431 600,433 616,434 631,435 645,435 660,435 675,435 690,435 709,434 727,434 740,434" stroke="#FF0000" stroke-width="1"/>
<path d="M263,417 262,417 261,417 268,417 288,416 315,415 341,414 363,413 384,411 401,410 411,409 418,408 424,407 432,407 439,406 446,405 452,405 458,404 464,403 469,403 475,402 481,403 486,404 492,406 501,408 514,412 529,415 546,418 564,420 583,422 601,423 616,423 631,424 646,424 661,424 675,423 691,423 709,422 728,422 741,422" stroke="#FF0000" stroke-width="1"/>
<path d="M260,415 260,415 261,415 265,415 274,414 285,414 298,413 311,413 325,412 338,410 350,407 361,404 373,400 387,398 402,395 413,393 418,392 419,391 422,390 428,389 436,388 443,386 449,386 455,386 461,386 467,386 472,386 478,387 484,389 489,392 498,397 511,405 526,415 543,423 561,428 580,431 598,435 615,440 632,445 648,448 662,450 674,450 688,449 706,449 725,448 738,448" stroke="#0000FF" stroke-width="1"/>
<path d="M255,525 258,519 262,510 266,501 269,493 273,486 276,478 279,470 281,461 284,452 286,443 288,434 290,425 291,417 292,408 294,397 296,382 298,365 300,347 303,330 305,313 308,296 311,277 313,259 316,243 318,232 320,223 322,215 324,207 326,199 328,193 329,187 331,183 333,179 335,176 337,174 340,173 342,174 346,176 349,178 352,180 355,183 359,185 362,187 365,188 369,189 372,190 375,192 379,194 382,196 385,199 389,204 392,209 395,216 399,224 404,236 409,249 415,262 419,274 424,285 428,295 430,302 433,307 436,313 440,322 446,332 451,341 453,347 455,351 458,357 462,365 466,374 471,382 474,389 478,395 481,400 483,405 485,409 489,414 494,421 502,428 509,434 515,439 522,442 529,445 535,448 542,451 549,454 557,456 565,458 574,459 581,460 589,461 599,460 612,458 628,455 644,451 658,448 673,446 689,443 707,441 726,438 739,437" stroke="#FF00FF" stroke-width="1"/>
<path d="M262,422 262,422 263,422 267,422 276,422 287,422 300,422 313,422 327,423 340,423 352,422 363,421 375,418 387,414 400,409 410,405 416,402 420,400 424,396 431,389 438,380 445,373 451,369 457,367 463,365 469,365 474,366 480,367 486,371 493,376 500,381 506,387 513,393 520,401 527,409 534,418 545,426 561,434 581,442 600,448 616,452 630,455 645,456 660,456 675,454 690,451 708,448 727,445 740,443" stroke="#00FFFF" stroke-width="1"/>
<path d="M252,522 255,516 259,507 263,498 267,491 270,483 273,475 276,467 279,459 281,451 283,442 285,433 287,424 289,416 290,409 291,399 293,384 295,366 298,348 300,331 303,314 306,298 308,280 311,262 313,247 315,236 317,227 319,219 321,211 323,204 325,198 327,193 328,189 330,186 332,183 335,181 338,180 340,180 344,182 347,184 350,186 354,188 358,190 361,191 365,193 368,194 372,196 375,197 378,199 382,201 385,204 388,208 392,213 395,220 398,229 403,241 409,254 414,266 419,278 424,288 427,298 430,304 432,309 435,315 440,324 446,334 450,343 453,349 455,353 457,358 461,366 466,375 470,383 474,390 477,395 480,401 483,405 485,410 488,415 494,421 501,427 508,433 515,437 522,441 528,444 535,447 541,450 548,452 556,454 565,456 573,458 581,459 589,460 598,459 612,457 628,454 643,451 658,448 673,445 688,442 707,439 725,437 738,436" stroke="#FF00FF" stroke-width="1"/>
<path d="M262,419 261,419 260,419 267,419 287,418 314,417 340,416 362,415 383,415 400,414 411,413 417,412 424,411 431,410 438,410 445,410 451,409 457,408 463,408 469,407 474,407 480,408 486,409 491,410 500,412 513,415 528,419 545,422 563,424 582,426 600,428 616,429 630,429 645,430 660,430 675,429 690,429 708,428 727,428 740,428" stroke="#FF0000" stroke-width="1"/>
<path d="M263,430 263,430 264,431 268,430 277,429 288,428 301,426 314,424 328,422 341,420 353,416 364,413 376,410 390,408 405,406 416,404 421,403 422,401 425,400 431,399 439,398 446,397 452,397 458,397 464,398 470,398 475,398 481,398 486,400 492,403 501,407 514,414 529,423 546,431 564,437 583,441 601,445 618,450 635,454 651,458 665,459 677,460 691,460 709,460 728,460 741,460" stroke="#0000FF" stroke-width="1"/>
<path d="M262,416 262,416 263,416 267,416 276,416 288,416 300,415 313,414 327,413 340,411 352,408 363,405 375,401 389,399 404,396 415,395 420,393 421,392 424,391 430,390 438,389 445,388 451,387 457,387 463,387 469,387 474,387 480,389 486,391 491,393 500,398 513,406 528,416 545,424 563,429 582,432 600,436 617,441 634,446 650,449 664,451 676,451 690,451 708,450 727,450 740,449" stroke="#0000FF" stroke-width="1"/>
<path d="M276,430 279,424 283,416 286,404 288,388 290,369 292,350 294,329 297,308 299,290 301,279 302,273 303,265 305,254 306,242 308,230 310,220 311,210 313,202 315,196 317,193 320,190 323,188 327,187 332,187 337,189 344,193 350,197 357,200 363,204 370,210 376,218 383,227 390,240 398,258 406,280 415,300 425,317 437,332 447,345 455,355 462,364 470,372 479,381 488,389 500,400 515,414 532,430 550,445 570,457 590,467 610,475 626,482 641,487 660,490 687,490 718,487 740,485" stroke="#008000" stroke-width="1"/>
<path d="M263,419 262,419 261,419 268,419 288,418 315,417 341,416 363,415 384,415 401,414 412,413 418,412 424,411 432,411 439,411 446,410 452,410 458,409 464,408 470,408 475,408 481,408 486,409 492,410 501,412 514,415 529,419 546,422 564,425 583,427 601,428 617,429 631,430 646,430 661,430 676,430 691,429 709,429 728,429 741,428" stroke="#FF0000" stroke-width="1"/>
<path d="M262,415 263,415 264,415 267,415 276,414 288,414 300,413 313,413 327,412 340,410 352,407 364,404 375,400 390,398 404,395 415,393 420,392 422,391 424,390 431,389 438,387 445,386 452,386 458,386 463,386 469,386 475,386 480,387 486,389 492,392 500,397 513,405 529,415 545,423 563,428 582,431 600,435 618,440 635,445 650,448 664,450 677,450 690,449 708,449 727,448 740,448" stroke="#0000FF" stroke-width="1"/>
<path d="M251,522 254,516 258,508 262,499 266,492 269,484 272,476 275,468 278,460 280,452 282,443 284,434 286,425 288,417 289,410 290,399 292,384 294,367 297,349 299,332 302,315 305,298 307,281 310,263 312,248 314,237 316,228 318,220 320,212 322,205 324,199 326,194 327,190 329,186 331,184 334,181 337,180 340,181 343,183 346,185 350,187 353,189 357,190 360,192 364,194 368,195 371,196 375,198 378,200 381,202 385,205 388,209 391,214 394,221 398,230 403,241 409,255 414,267 419,279 423,289 427,298 430,305 432,310 435,316 440,325 445,335 450,344 453,349 455,354 457,359 461,367 466,376 470,384 474,391 477,396 480,401 482,406 485,411 488,416 494,422 501,428 508,434 515,438 521,442 528,445 535,448 541,450 548,453 556,455 565,457 573,459 581,460 588,460 598,460 612,458 627,455 643,452 658,449 673,446 688,443 706,440 725,438 738,437" stroke="#FF00FF" stroke-width="1"/>
<path d="M262,401 270,401 278,401 286,401 294,401 302,401 310,401 318,401 326,400 334,400 342,400 350,399 358,399 366,398 374,397 382,395 390,393 398,391 406,388 414,384 422,381 430,377 438,373 446,369 454,365 462,362 470,359 478,358 486,358 494,358 502,360 510,364 518,367 526,372 534,377 542,383 550,388 558,394 566,398 574,403 582,407 590,410 598,413 606,415 614,417 622,418 630,419 638,420 646,420 654,420 662,419 670,419 678,419 686,418 694,418 702,417 710,417 718,416 726,416 734,415 742,415" stroke="#008000" stroke-width="1"/>
<path d="M263,421 263,421 264,421 268,421 277,421 289,421 301,421 314,422 328,422 341,422 353,422 365,420 376,418 389,414 401,409 411,404 417,402 421,399 425,395 432,388 439,380 446,373 452,369 458,367 464,365 470,365 475,365 481,367 488,371 494,375 501,381 508,387 514,393 521,400 528,409 535,417 546,426 563,434 582,442 601,448 617,452 631,455 646,456 661,455 676,453 691,451 709,448 728,444 741,442" stroke="#00FFFF" stroke-width="1"/>
<path d="M260,419 260,419 261,419 265,419 274,418 286,418 298,417 311,416 325,415 338,413 350,410 361,406 373,403 387,400 402,398 413,396 418,395 419,394 422,393 428,391 436,390 443,389 449,389 455,389 461,389 467,389 472,389 478,390 484,392 490,395 498,399 511,407 526,417 543,425 561,430 580,434 598,437 616,442 632,447 648,451 662,452 674,452 688,452 706,452 725,451 738,451" stroke="#0000FF" stroke-width="1"/>
<path d="M262,418 261,418 260,418 267,418 287,417 314,416 340,415 362,414 383,413 400,412 411,411 417,410 423,409 431,409 438,408 445,408 451,407 457,406 463,405 469,405 474,405 480,405 486,406 491,408 500,410 513,413 528,417 545,420 563,422 582,424 600,425 616,426 630,427 645,427 660,427 675,426 690,426 708,425 727,425 740,425" stroke="#FF0000" stroke-width="1"/>
<path d="M263,427 263,427 264,427 268,427 276,427 288,427 301,427 314,427 328,428 341,428 353,427 364,427 376,424 388,420 401,415 411,410 417,407 420,405 425,401 431,394 439,385 446,378 452,374 458,371 464,370 469,369 475,370 481,372 487,375 494,380 501,385 507,391 514,398 521,406 528,414 535,424 546,432 562,441 582,448 601,454 616,459 631,461 646,462 661,462 675,460 691,457 709,455 728,452 741,450" stroke="#00FFFF" stroke-width="1"/>
<path d="M263,428 263,428 264,428 268,428 277,428 289,428 301,428 314,428 328,429 341,429 353,429 365,428 376,426 389,422 401,416 411,411 417,408 421,406 425,402 432,395 439,386 446,379 452,375 458,372 464,371 470,370 475,371 481,373 488,376 494,381 501,386 508,393 514,399 521,407 528,416 535,425 546,434 563,442 582,450 601,456 617,460 632,462 646,463 661,463 676,461 691,459 709,457 728,454 741,452" stroke="#00FFFF" stroke-width="1"/>
<path d="M263,419 263,419 264,419 268,419 276,418 288,417 301,417 314,416 327,415 341,413 353,410 364,406 376,403 390,400 404,398 416,396 421,395 422,394 425,393 431,391 438,390 446,389 452,389 458,389 464,389 469,389 475,389 481,390 486,392 492,395 501,399 513,407 529,417 546,425 563,430 582,434 601,437 618,442 635,447 651,451 664,452 677,452 691,452 708,452 727,451 741,451" stroke="#0000FF" stroke-width="1"/>
<path d="M260,418 259,418 258,418 265,418 285,417 312,416 338,415 361,414 381,413 398,412 409,411 415,410 422,409 429,409 436,408 443,408 450,407 455,406 461,406 467,405 472,405 478,406 484,407 490,408 498,410 511,413 527,417 543,420 561,423 580,424 598,426 614,426 629,427 643,427 658,427 673,427 688,426 706,426 725,425 738,425" stroke="#FF0000" stroke-width="1"/>
<path d="M262,422 262,422 263,422 267,422 276,421 288,420 300,419 313,418 327,417 340,415 352,412 363,408 375,405 389,402 404,400 415,398 420,397 421,396 424,395 430,393 438,392 445,391 451,391 457,391 463,391 469,391 474,391 480,392 486,394 491,397 500,402 513,409 528,419 545,427 563,432 582,436 600,440 617,444 634,449 650,453 664,454 676,454 690,454 708,454 727,454 740,453" stroke="#0000FF" stroke-width="1"/>
<path d="M264,422 264,422 265,422 269,422 277,422 289,422 302,422 315,423 328,423 342,423 354,423 365,421 377,419 389,415 401,410 412,405 418,402 421,400 426,396 432,389 440,381 447,374 453,370 459,367 465,366 470,366 476,366 482,368 488,371 495,376 502,382 508,387 515,394 522,401 528,410 536,418 547,427 563,435 583,443 602,449 617,453 632,456 647,457 661,456 676,454 692,452 710,449 728,446 742,443" stroke="#00FFFF" stroke-width="1"/>
<path d="M262,418 261,418 260,418 267,418 287,417 314,416 340,415 362,414 383,413 400,412 410,411 417,410 423,409 431,408 438,408 445,407 451,406 457,405 463,405 468,404 474,404 480,405 485,406 491,408 500,410 513,413 528,417 545,420 563,422 582,423 600,425 615,425 630,426 645,426 660,426 674,425 690,425 708,425 727,424 740,424" stroke="#FF0000" stroke-width="1"/>
<path d="M261,421 262,421 263,421 266,421 275,421 287,421 299,421 312,421 326,422 339,422 352,421 363,420 374,417 387,413 399,408 409,404 415,401 419,399 423,395 430,388 437,379 444,372 451,368 457,366 462,365 468,364 474,365 479,367 486,370 493,375 499,380 506,386 512,393 519,400 526,408 534,417 544,425 561,433 581,441 599,447 615,451 630,454 644,456 659,455 674,453 689,450 708,447 726,444 739,441" stroke="#00FFFF" stroke-width="1"/>
<path d="M262,466 283,466 312,465 340,462 363,457 385,450 409,442 439,432 471,420 500,416 522,423 541,436 560,450 581,465 602,481 625,492 651,494 677,490 700,485 717,480 731,474 740,470" stroke="#008000" stroke-width="1"/>
<path d="M262,417 260,417 260,417 267,417 286,416 314,415 340,414 362,413 383,412 400,411 410,409 417,408 423,408 430,407 438,406 445,406 451,405 457,404 463,403 468,403 474,403 480,403 485,404 491,406 500,409 512,412 528,415 545,419 563,421 582,422 600,423 615,424 630,424 645,424 659,424 674,424 690,423 708,423 726,422 740,422" stroke="#FF0000" stroke-width="1"/>
<path d="M263,426 264,426 265,426 268,426 277,425 289,424 301,422 314,421 328,419 341,417 353,414 365,410 376,407 391,405 405,403 416,401 421,400 423,398 425,397 432,396 439,395 446,394 453,394 459,394 464,394 470,394 476,394 481,395 487,397 493,400 501,404 514,412 530,421 546,429 564,434 583,438 601,442 619,447 636,452 651,455 665,457 678,457 691,457 709,457 728,457 741,456" stroke="#0000FF" stroke-width="1"/>
<path d="M263,424 263,424 264,424 268,424 276,424 288,424 301,424 314,425 327,425 341,425 353,425 364,424 376,422 388,417 401,412 411,407 417,405 420,402 425,398 431,391 439,383 446,376 452,372 458,369 464,368 469,367 475,368 481,370 487,373 494,378 501,383 507,389 514,396 521,403 528,412 535,421 546,430 562,438 582,445 601,452 616,456 631,458 646,460 660,459 675,457 691,455 709,452 728,449 741,447" stroke="#00FFFF" stroke-width="1"/>
<path d="M263,417 261,417 261,417 268,417 287,416 315,415 341,414 363,413 384,412 401,411 411,410 418,408 424,408 432,407 439,406 446,406 452,405 458,404 464,403 469,403 475,403 481,403 486,405 492,406 501,409 513,412 529,416 546,419 564,421 583,422 601,423 616,424 631,424 646,424 660,424 675,424 691,423 709,423 728,422 741,422" stroke="#FF0000" stroke-width="1"/>
<path d="M262,423 262,423 263,423 267,423 275,423 287,423 300,423 313,423 326,424 340,424 352,423 363,422 375,420 387,416 400,411 410,406 416,403 419,401 424,397 430,390 438,381 445,374 451,370 457,368 463,367 468,366 474,367 480,369 486,372 493,377 500,382 506,388 513,395 520,402 526,410 534,419 545,428 561,436 581,444 600,450 615,454 630,457 645,458 659,457 674,455 690,453 708,450 726,447 740,444" stroke="#00FFFF" stroke-width="1"/>
<path d="M262,422 262,422 263,422 267,422 276,421 287,421 300,422 313,422 327,423 340,423 352,422 364,420 375,418 387,414 400,409 410,405 416,402 420,399 424,396 431,388 438,380 445,373 451,369 457,367 463,365 469,365 474,365 480,367 486,371 493,375 500,381 506,387 513,393 520,401 527,409 534,417 545,426 561,434 581,442 600,448 616,452 630,455 645,456 660,456 675,453 690,451 708,448 727,445 740,442" stroke="#00FFFF" stroke-width="1"/>
<path d="M263,433 263,433 264,433 268,433 276,432 288,430 301,428 314,426 327,424 341,421 352,418 364,414 376,411 390,409 404,408 416,406 420,404 422,403 425,401 431,400 438,400 446,399 452,399 458,399 464,400 469,399 475,399 481,400 486,402 492,404 501,409 513,416 529,425 546,432 563,438 582,442 601,447 618,451 635,456 651,459 664,461 677,462 691,462 708,462 727,462 741,462" stroke="#0000FF" stroke-width="1"/>
<path d="M260,424 260,424 261,424 265,424 274,424 285,424 298,424 311,424 325,425 338,425 350,424 361,423 373,421 385,416 398,411 408,407 414,404 417,401 422,398 428,391 436,382 443,375 449,371 455,369 461,367 467,367 472,367 478,369 484,373 491,377 498,383 504,389 511,395 518,403 525,411 532,420 543,429 559,437 579,444 598,451 614,455 628,457 643,459 658,458 673,456 688,454 706,451 725,448 738,445" stroke="#00FFFF" stroke-width="1"/>
<path d="M263,419 263,420 264,420 268,419 276,419 288,418 301,417 314,416 327,415 341,413 352,410 364,407 376,403 390,401 404,399 416,397 420,395 422,394 425,393 431,392 438,391 446,390 452,389 458,389 464,390 469,390 475,390 481,391 486,393 492,395 501,400 513,408 529,418 546,426 563,431 582,434 601,438 618,443 635,448 651,451 664,453 677,453 691,453 708,453 727,452 741,452" stroke="#0000FF" stroke-width="1"/>
<path d="M262,427 262,427 263,427 267,427 276,427 287,427 300,427 313,428 327,428 340,428 352,428 363,427 375,425 387,421 400,415 410,410 416,407 420,405 424,401 431,394 438,386 445,379 451,375 457,372 463,370 469,370 474,370 480,372 486,376 493,380 500,386 506,392 513,399 520,406 527,415 534,424 545,433 561,441 581,449 600,455 616,459 630,462 645,463 660,462 675,460 690,458 708,456 727,453 740,451" stroke="#00FFFF" stroke-width="1"/>
<path d="M259,522 262,516 266,507 270,499 274,491 277,484 280,476 283,468 286,460 288,452 291,443 293,434 294,425 296,418 297,410 298,400 300,386 303,368 305,351 307,334 310,318 313,301 315,284 318,266 320,251 322,240 324,231 326,223 328,216 330,209 332,203 334,198 336,194 337,191 339,188 342,186 344,185 347,185 350,187 353,189 356,191 359,193 362,195 365,196 369,198 372,199 375,200 378,202 381,204 385,206 388,209 391,213 394,218 398,225 401,233 406,245 412,258 417,270 422,281 426,292 430,301 433,307 435,312 438,318 443,327 449,337 453,346 456,351 458,355 460,361 464,369 469,377 473,386 477,392 480,397 483,402 486,407 488,412 491,416 497,422 504,429 511,434 518,438 525,442 531,445 538,448 544,451 551,453 559,455 568,458 576,459 584,460 592,461 601,460 615,458 631,455 646,452 661,449 676,446 691,443 709,441 728,439 741,437" stroke="#FF00FF" stroke-width="1"/>
<path d="M262,418 261,418 260,418 267,418 287,417 314,416 340,415 362,414 383,413 400,412 411,411 417,410 423,409 431,408 438,408 445,408 451,407 457,406 463,405 469,405 474,405 480,405 485,406 491,408 500,410 513,413 528,417 545,420 563,422 582,424 600,425 616,426 630,427 645,427 660,427 675,426 690,426 708,425 727,425 740,425" stroke="#FF0000" stroke-width="1"/>
<path d="M263,421 262,421 261,421 268,421 288,420 315,419 341,418 363,417 384,417 401,417 411,416 418,414 424,414 432,413 439,413 446,413 452,413 458,412 464,412 469,411 475,411 481,412 486,412 492,413 501,415 514,417 529,421 546,425 564,427 583,430 601,432 617,433 631,434 646,434 661,434 675,434 691,433 709,433 728,433 741,432" stroke="#FF0000" stroke-width="1"/>
<path d="M264,425 264,425 265,425 269,425 278,424 290,423 302,422 315,420 329,419 342,416 354,413 365,410 377,406 391,404 406,402 417,401 422,399 423,398 426,396 432,395 440,394 447,394 453,393 459,393 465,394 471,394 476,394 482,395 488,396 494,399 502,404 515,411 530,420 547,428 565,434 584,438 602,442 620,446 636,451 652,454 666,456 678,457 692,457 710,456 729,456 742,456" stroke="#0000FF" stroke-width="1"/>
<path d="M262,424 262,424 263,424 267,424 276,424 288,424 300,424 313,424 327,425 340,425 352,424 364,423 375,421 388,417 400,412 410,407 416,404 420,402 424,398 431,391 438,382 445,375 451,371 457,369 463,367 469,367 474,367 480,369 487,373 493,377 500,383 507,389 513,396 520,403 527,411 534,420 545,429 562,437 581,445 600,451 616,455 631,458 645,459 660,458 675,456 690,454 708,451 727,448 740,446" stroke="#00FFFF" stroke-width="1"/>
<path d="M262,415 262,415 263,415 267,415 276,415 287,414 300,414 313,413 327,412 340,410 352,408 363,404 375,400 389,398 404,395 415,394 420,392 421,391 424,390 430,389 438,388 445,387 451,386 457,386 463,386 468,386 474,386 480,388 485,389 491,392 500,397 513,405 528,415 545,423 563,428 582,432 600,435 617,440 634,445 650,448 664,450 676,450 690,450 708,449 727,449 740,448" stroke="#0000FF" stroke-width="1"/>
<path d="M262,420 263,421 264,421 267,420 276,420 288,419 300,418 313,417 327,416 340,414 352,411 364,407 375,404 390,401 404,399 415,398 420,396 422,395 424,394 431,393 438,391 445,391 452,390 458,390 463,390 469,390 475,390 480,392 486,393 492,396 500,401 513,408 529,418 545,426 563,431 582,435 600,439 618,443 635,448 650,452 664,453 677,454 690,454 708,453 727,453 740,452" stroke="#0000FF" stroke-width="1"/>
<path d="M260,417 261,417 262,417 265,417 274,416 286,416 298,415 311,414 325,413 338,412 350,409 362,405 373,402 388,399 402,397 413,395 418,393 420,393 422,392 429,390 436,389 443,388 450,387 456,387 461,387 467,387 473,388 478,389 484,391 490,393 498,398 511,406 527,416 543,424 561,429 580,433 598,436 616,441 633,446 648,450 662,451 675,451 688,451 706,450 725,450 738,449" stroke="#0000FF" stroke-width="1"/>
<path d="M261,419 259,419 259,419 266,419 285,418 313,417 339,416 361,415 382,414 399,413 409,412 416,411 422,410 430,410 437,410 444,409 450,409 456,408 462,407 467,407 473,407 479,407 484,408 490,409 499,411 511,414 527,418 544,421 562,424 581,426 599,427 614,428 629,429 644,429 658,429 673,428 689,428 707,428 725,427 739,427" stroke="#FF0000" stroke-width="1"/>
<path d="M261,418 260,418 259,419 266,418 286,418 313,416 339,415 362,415 383,414 399,413 410,412 417,411 423,410 430,409 438,409 444,409 451,408 457,407 462,407 468,406 474,406 479,407 485,408 491,409 499,411 512,414 528,418 544,421 562,423 581,425 599,426 615,428 630,428 644,428 659,428 674,428 689,427 708,427 726,427 739,426" stroke="#FF0000" stroke-width="1"/>
<path d="M262,418 261,418 260,418 267,418 287,417 314,416 340,415 363,414 383,414 400,413 411,412 417,411 424,410 431,409 438,409 445,408 452,408 457,407 463,406 469,406 474,406 480,406 486,407 492,409 500,411 513,414 529,418 545,421 563,423 582,425 600,426 616,427 631,428 645,428 660,428 675,427 690,427 708,426 727,426 740,426" stroke="#FF0000" stroke-width="1"/>
<path d="M263,417 262,417 261,417 268,417 288,416 315,415 341,414 364,413 385,412 401,411 412,410 419,409 425,408 432,407 440,407 446,406 453,406 459,405 464,404 470,404 475,404 481,404 487,405 493,407 501,409 514,412 530,416 546,419 564,421 583,423 601,424 617,425 632,425 646,425 661,425 676,424 691,424 709,424 728,423 741,423" stroke="#FF0000" stroke-width="1"/>
<path d="M261,419 260,420 259,420 266,419 286,419 313,417 339,416 362,416 382,415 399,415 410,414 416,413 423,412 430,411 437,411 444,411 451,410 456,409 462,409 468,409 473,409 479,409 485,410 491,411 499,413 512,416 528,419 544,423 562,425 581,427 599,429 615,430 630,431 644,431 659,431 674,431 689,430 707,430 726,429 739,429" stroke="#FF0000" stroke-width="1"/>
<path d="M262,423 263,423 263,423 267,423 276,423 288,422 300,423 313,423 327,424 340,424 352,423 364,422 375,419 388,415 400,410 410,406 416,403 420,400 424,397 431,390 438,381 445,374 452,370 458,368 463,366 469,366 475,366 480,368 487,372 494,376 500,382 507,388 513,394 520,402 527,410 535,419 545,427 562,435 582,443 600,449 616,453 631,456 645,457 660,457 675,455 690,452 709,449 727,446 740,444" stroke="#00FFFF" stroke-width="1"/>
<path d="M261,425 261,425 262,425 266,425 274,424 286,423 299,422 312,421 325,419 339,417 350,414 362,410 374,407 388,404 402,402 414,401 418,399 420,398 423,397 429,396 436,395 444,394 450,394 456,394 462,394 467,394 473,394 479,395 484,397 490,399 499,404 511,411 527,421 544,429 561,434 580,438 599,442 616,446 633,451 649,455 662,456 675,457 689,457 706,457 725,456 739,456" stroke="#0000FF" stroke-width="1"/>
<path d="M262,399 270,399 278,399 286,399 294,399 302,399 310,399 318,399 326,399 334,399 342,400 350,400 358,400 366,400 374,400 382,400 390,400 398,400 406,400 414,401 422,401 430,401 438,402 446,403 454,403 462,404 470,406 478,407 486,409 494,411 502,413 510,416 518,419 526,422 534,426 542,430 550,433 558,437 566,441 574,444 582,447 590,450 598,452 606,454 614,456 622,457 630,459 638,460 646,460 654,460 662,459 670,459 678,458 686,458 694,457 702,457 710,456 718,455 726,454 734,454 742,453" stroke="#008000" stroke-width="1"/>
<path d="M262,427 262,428 263,428 267,427 275,427 287,425 300,424 313,422 326,420 340,418 351,415 363,411 375,408 389,406 403,404 415,402 419,401 421,399 424,398 430,397 437,396 445,395 451,395 457,395 463,396 468,396 474,396 480,396 485,398 491,401 500,405 512,413 528,422 545,430 562,435 581,439 600,443 617,448 634,453 650,456 663,458 676,458 690,458 707,458 726,458 740,458" stroke="#0000FF" stroke-width="1"/>
<path d="M260,417 259,417 258,417 265,417 285,416 312,415 338,414 360,413 381,411 398,410 408,409 415,408 421,407 429,407 436,406 443,405 449,404 455,404 461,403 466,402 472,402 478,403 483,404 489,406 498,408 511,411 526,415 543,418 561,420 580,421 598,422 614,423 628,424 643,424 658,424 672,423 688,422 706,422 725,422 738,421" stroke="#FF0000" stroke-width="1"/>
<path d="M261,421 259,421 259,421 266,421 285,420 313,419 339,418 361,417 382,417 399,417 409,416 416,414 422,414 430,413 437,413 444,413 450,413 456,412 462,412 467,411 473,411 479,412 484,412 490,413 499,415 511,418 527,421 544,425 562,427 581,430 599,432 614,433 629,434 644,434 658,434 673,434 689,434 707,433 726,433 739,433" stroke="#FF0000" stroke-width="1"/>
<path d="M259,419 258,419 257,419 264,419 284,418 311,417 337,416 360,416 380,415 397,414 408,413 414,412 421,411 428,411 435,411 442,411 449,410 454,409 460,409 466,408 471,408 477,409 483,409 489,411 497,412 510,415 526,419 542,422 560,425 579,427 597,429 613,430 628,430 642,431 657,431 672,430 687,430 705,429 724,429 737,429" stroke="#FF0000" stroke-width="1"/>
<path d="M261,428 261,428 262,428 266,428 275,427 287,426 299,424 312,422 326,421 339,418 351,415 362,411 374,408 388,406 403,404 414,403 419,401 420,400 423,398 429,397 437,396 444,396 450,395 456,396 462,396 468,396 473,396 479,397 485,398 491,401 499,405 512,413 528,422 544,430 562,435 581,439 599,443 617,448 633,453 649,456 663,458 675,458 689,459 707,459 726,458 739,458" stroke="#0000FF" stroke-width="1"/>
<path d="M261,419 260,419 259,419 266,419 286,418 313,417 339,416 362,415 382,415 399,414 410,413 416,412 423,411 430,410 437,410 444,410 451,409 456,408 462,408 468,408 473,407 479,408 485,409 491,410 499,412 512,415 528,419 544,422 562,424 581,426 599,428 615,429 630,430 644,430 659,430 674,429 689,429 707,428 726,428 739,428" stroke="#FF0000" stroke-width="1"/>
<path d="M261,427 262,427 262,427 266,427 275,427 287,427 299,427 312,427 326,428 339,428 351,428 363,427 374,425 387,420 399,415 409,410 415,407 419,405 423,401 430,394 437,385 444,378 451,374 456,372 462,370 468,370 473,370 479,372 486,375 492,380 499,386 506,392 512,398 519,406 526,415 534,424 544,433 561,441 581,449 599,455 615,459 630,461 644,462 659,462 674,460 689,458 707,455 726,452 739,450" stroke="#00FFFF" stroke-width="1"/>
<path d="M262,417 261,417 260,417 267,417 287,416 314,415 340,414 363,413 383,412 400,411 411,410 417,409 424,408 431,407 438,406 445,406 452,405 457,404 463,403 469,403 474,403 480,403 486,405 492,406 500,409 513,412 529,416 545,419 563,421 582,422 600,423 616,424 631,424 645,425 660,424 675,424 690,423 708,423 727,422 740,422" stroke="#FF0000" stroke-width="1"/>
<path d="M261,426 261,426 262,426 266,426 275,426 286,426 299,426 312,426 326,427 339,427 351,426 362,426 374,423 386,419 399,414 409,409 415,406 418,404 423,400 429,393 437,384 444,377 450,373 456,371 462,369 468,369 473,369 479,371 485,375 492,379 499,385 505,391 512,397 519,405 526,413 533,423 544,431 560,440 580,447 599,453 615,457 629,460 644,461 659,461 674,459 689,456 707,454 726,451 739,449" stroke="#00FFFF" stroke-width="1"/>
<path d="M261,418 259,418 259,418 266,418 285,417 313,416 339,415 361,414 382,413 399,412 409,411 416,410 422,409 430,409 437,408 444,408 450,407 456,406 462,406 467,405 473,405 479,406 484,407 490,408 499,410 511,413 527,417 544,420 562,423 581,424 599,425 614,426 629,427 644,427 659,427 673,427 689,426 707,426 726,425 739,425" stroke="#FF0000" stroke-width="1"/>
<path d="M262,443 270,443 278,443 286,443 294,442 302,442 310,442 318,441 326,440 334,439 342,438 350,436 358,434 366,432 374,430 382,427 390,425 398,422 406,418 414,415 422,412 430,409 438,407 446,405 454,403 462,403 470,403 478,404 486,406 494,408 502,412 510,417 518,422 526,427 534,433 542,439 550,444 558,449 566,454 574,458 582,461 590,464 598,467 606,469 614,470 622,472 630,473 638,474 646,475 654,475 662,476 670,476 678,477 686,477 694,477 702,477 710,477 718,478 726,478 734,478 742,478" stroke="#008000" stroke-width="1"/>
<path d="M261,421 261,421 262,421 266,421 275,421 287,420 299,419 312,418 326,416 339,414 351,411 362,408 374,404 388,402 403,400 414,398 419,397 420,395 423,394 429,393 437,392 444,391 450,391 456,391 462,391 468,391 473,391 479,392 485,394 490,397 499,401 512,409 527,418 544,427 562,432 581,435 599,439 617,444 633,449 649,452 663,454 675,454 689,454 707,454 726,453 739,453" stroke="#0000FF" stroke-width="1"/>
<path d="M261,424 261,424 262,424 266,424 275,424 287,424 299,424 312,425 326,425 339,425 351,424 363,423 374,421 387,417 399,412 409,407 415,404 419,402 423,398 430,391 437,382 444,376 450,371 456,369 462,368 468,367 473,368 479,370 486,373 492,378 499,383 506,389 512,396 519,403 526,411 533,420 544,429 561,437 580,445 599,451 615,455 630,458 644,459 659,458 674,456 689,454 707,451 726,448 739,446" stroke="#00FFFF" stroke-width="1"/>
<path d="M263,428 263,428 264,428 268,428 276,427 288,425 301,424 314,422 328,421 341,418 353,415 364,411 376,408 390,406 405,404 416,403 421,401 422,399 425,398 431,397 439,396 446,396 452,395 458,396 464,396 469,396 475,396 481,397 486,398 492,401 501,405 514,413 529,422 546,430 564,435 582,439 601,443 618,448 635,453 651,456 665,458 677,458 691,459 709,458 727,458 741,458" stroke="#0000FF" stroke-width="1"/>
<path d="M262,470 270,470 278,470 286,469 294,469 302,468 310,467 318,465 326,463 334,461 342,458 350,454 358,450 366,446 374,440 382,435 390,429 398,423 406,417 414,412 422,408 430,404 438,401 446,400 454,400 462,402 470,404 478,408 486,412 494,418 502,423 510,429 518,434 526,440 534,444 542,449 550,452 558,456 566,458 574,460 582,462 590,463 598,464 606,465 614,465 622,465 630,466 638,466 646,466 654,466 662,466 670,467 678,467 686,467 694,467 702,467 710,467 718,468 726,468 734,468 742,468" stroke="#008000" stroke-width="1"/>
<path d="M261,420 262,420 263,420 266,420 275,420 287,419 299,418 312,417 326,416 339,414 351,411 363,407 374,404 389,401 403,399 414,397 419,396 421,395 423,394 430,392 437,391 444,390 451,390 457,390 462,390 468,390 474,390 479,391 485,393 491,396 499,401 512,408 528,418 544,426 562,431 581,435 599,439 617,443 634,448 649,452 663,453 676,453 689,453 707,453 726,453 739,452" stroke="#0000FF" stroke-width="1"/>
<path d="M262,418 262,418 263,418 267,418 275,417 287,417 300,416 313,415 326,414 340,412 351,409 363,405 375,402 389,400 403,397 415,395 419,394 421,393 424,392 430,391 437,389 445,388 451,388 457,388 463,388 468,388 474,388 480,389 485,391 491,394 500,399 512,407 528,417 545,425 562,430 581,433 600,437 617,442 634,447 650,450 663,452 676,452 690,451 707,451 726,451 740,450" stroke="#0000FF" stroke-width="1"/>
<path d="M261,424 262,424 262,425 266,424 275,424 287,423 299,421 312,420 326,418 339,416 351,413 363,409 374,406 389,404 403,402 414,400 419,399 421,397 423,396 430,395 437,394 444,393 451,393 457,393 462,393 468,393 474,393 479,394 485,396 491,399 499,403 512,411 528,420 544,428 562,433 581,437 599,441 617,446 634,451 649,454 663,456 676,456 689,456 707,456 726,456 739,455" stroke="#0000FF" stroke-width="1"/>
<path d="M263,418 263,418 264,419 268,418 277,418 288,417 301,417 314,416 328,414 341,413 353,410 364,406 376,403 390,400 405,398 416,396 421,395 422,394 425,393 431,391 439,390 446,389 452,389 458,389 464,389 470,389 475,389 481,390 487,392 492,395 501,399 514,407 529,417 546,425 564,430 583,434 601,437 618,442 635,447 651,451 665,452 677,452 691,452 709,452 728,451 741,451" stroke="#0000FF" stroke-width="1"/>
<path d="M261,421 262,421 262,421 266,421 275,421 287,421 299,421 312,421 326,422 339,422 351,421 363,419 374,417 387,413 399,408 409,404 415,401 419,399 423,395 430,388 437,379 444,372 451,368 457,366 462,365 468,364 474,365 479,367 486,370 493,375 499,380 506,386 512,393 519,400 526,408 534,417 544,425 561,433 581,441 599,447 615,451 630,454 644,455 659,455 674,452 689,450 708,447 726,443 739,441" stroke="#00FFFF" stroke-width="1"/>
<path d="M262,420 262,420 263,420 267,420 275,420 287,420 300,420 313,421 326,421 340,421 352,420 363,419 375,416 387,412 400,408 410,403 416,400 419,398 424,394 430,387 438,379 445,372 451,368 457,365 463,364 468,364 474,364 480,366 486,370 493,374 500,380 506,386 513,392 520,399 526,407 534,416 545,424 561,432 581,440 600,446 615,451 630,453 645,455 659,454 674,452 690,449 708,446 726,443 740,440" stroke="#00FFFF" stroke-width="1"/>
<path d="M262,440 279,442 303,445 330,445 359,442 391,437 420,430 442,419 461,406 480,400 500,406 520,419 540,432 560,443 580,454 600,462 621,467 641,469 660,470 676,470 689,468 700,466 706,465 709,464 712,462 715,460 717,457 719,452 721,443 723,432 726,418 729,398 733,376 736,360" stroke="#008000" stroke-width="1"/>
<path d="M264,422 264,422 265,422 269,422 278,422 289,421 302,422 315,422 329,423 342,423 354,422 365,420 377,418 389,414 402,409 412,405 418,402 422,399 426,396 433,389 440,380 447,373 453,369 459,367 465,365 471,365 476,365 482,367 488,371 495,375 502,381 508,387 515,393 522,401 529,409 536,418 547,426 563,434 583,442 602,448 618,452 632,455 647,456 662,456 677,453 692,451 710,448 729,445 742,442" stroke="#00FFFF" stroke-width="1"/>
<path d="M262,439 270,439 278,439 286,439 294,439 302,439 310,439 318,439 326,439 334,439 342,439 350,438 358,438 366,438 374,437 382,436 390,435 398,433 406,431 414,429 422,426 430,423 438,419 446,417 454,415 462,414 470,414 478,416 486,419 494,423 502,428 510,434 518,440 526,446 534,452 542,457 550,460 558,463 566,466 574,467 582,469 590,469 598,470 606,470 614,471 622,471 630,471 638,471 646,471 654,470 662,470 670,469 678,469 686,468 694,468 702,468 710,467 718,467 726,466 734,466 742,465" stroke="#008000" stroke-width="1"/>
<path d="M259,524 262,518 266,510 270,501 273,493 277,486 280,478 283,470 285,462 288,454 290,445 292,436 294,427 295,420 296,412 298,402 300,387 302,370 304,352 307,336 310,319 312,302 315,285 318,267 320,252 322,241 324,232 326,224 328,217 330,209 332,203 334,198 335,195 337,191 339,189 341,186 344,185 346,186 349,188 352,190 355,192 359,194 362,195 365,197 368,198 371,200 375,201 378,203 381,204 384,207 388,209 391,213 394,219 397,226 401,234 406,246 412,259 417,271 422,283 426,293 430,302 433,309 435,313 438,319 443,328 449,338 453,347 456,353 458,357 460,362 464,370 469,379 473,387 477,394 480,399 483,404 486,409 488,413 491,418 497,424 504,430 511,436 518,440 525,444 531,447 538,450 544,453 551,455 559,457 568,460 576,461 584,462 591,463 601,462 615,460 630,457 646,454 661,451 676,448 691,445 709,443 728,441 741,439" stroke="#FF00FF" stroke-width="1"/>
<path d="M261,425 261,425 262,425 266,425 275,425 286,425 299,425 312,425 326,426 339,426 351,425 363,424 374,422 386,418 399,413 409,408 415,405 419,403 423,399 430,392 437,383 444,376 450,372 456,370 462,368 468,368 473,368 479,370 485,374 492,378 499,384 506,390 512,397 519,404 526,412 533,422 544,430 561,438 580,446 599,452 615,456 629,459 644,460 659,460 674,458 689,455 707,453 726,450 739,447" stroke="#00FFFF" stroke-width="1"/>
<path d="M256,523 259,518 263,509 267,500 270,493 274,485 277,477 280,470 282,462 285,453 287,445 289,435 291,426 292,419 293,412 295,401 297,387 299,369 301,351 304,335 306,318 309,301 312,284 314,266 317,251 319,240 321,231 323,223 325,215 327,208 329,202 330,197 332,193 334,190 336,187 338,185 341,184 344,185 347,187 350,189 353,191 356,192 360,194 363,196 366,197 370,199 373,200 377,201 380,203 383,205 387,208 390,212 393,218 396,225 400,233 405,245 411,258 416,270 421,282 425,292 429,301 432,308 434,312 437,318 442,327 447,338 452,346 455,352 456,356 459,361 463,369 468,378 472,386 475,393 479,398 482,403 484,408 486,413 490,417 496,423 503,430 510,435 517,440 523,443 530,446 536,449 543,452 550,454 558,457 566,459 575,460 582,461 590,462 600,461 613,459 629,457 645,453 660,450 674,447 690,444 708,442 727,440 740,438" stroke="#FF00FF" stroke-width="1"/>
<path d="M262,429 262,429 263,429 267,429 275,428 287,426 300,425 313,423 327,421 340,419 352,416 363,412 375,409 389,407 404,405 415,403 420,402 421,400 424,399 430,398 438,397 445,396 451,396 457,396 463,397 468,396 474,396 480,397 485,399 491,402 500,406 513,413 528,422 545,430 563,436 581,440 600,444 617,449 634,453 650,457 664,459 676,459 690,459 708,459 726,459 740,459" stroke="#0000FF" stroke-width="1"/>
<path d="M257,523 260,517 264,509 268,500 271,492 275,485 278,477 281,469 283,461 286,453 288,444 290,435 292,426 293,418 294,411 296,400 298,386 300,368 302,350 305,333 308,317 310,300 313,282 315,265 318,250 320,238 322,230 324,222 326,214 328,207 330,200 331,195 333,192 335,188 337,185 339,183 342,182 344,183 347,185 351,187 354,189 357,191 360,192 364,194 367,195 370,197 374,198 377,200 380,201 384,204 387,206 390,210 393,216 397,223 400,232 405,243 411,256 416,269 421,280 425,291 429,300 432,306 434,311 437,317 442,326 448,336 452,345 455,351 457,355 459,360 463,368 468,377 472,385 476,392 479,397 482,402 485,407 487,412 490,417 496,423 503,429 510,435 517,439 524,442 530,446 537,449 543,451 550,454 558,456 567,458 575,460 583,461 590,461 600,461 614,459 630,456 645,453 660,450 675,446 690,444 708,441 727,439 740,438" stroke="#FF00FF" stroke-width="1"/>
<path d="M262,428 262,428 263,428 267,428 275,428 287,428 300,428 313,428 326,429 340,429 352,429 363,428 375,426 387,421 400,416 410,411 416,408 419,406 424,402 430,395 438,386 445,379 451,375 457,372 463,371 468,370 474,371 480,373 486,376 493,381 500,386 506,392 513,399 520,407 527,416 534,425 545,434 561,442 581,450 600,456 615,460 630,462 645,463 660,463 674,461 690,459 708,456 727,454 740,452" stroke="#00FFFF" stroke-width="1"/>
<path d="M263,417 262,417 261,417 268,417 288,416 315,415 341,414 364,413 384,412 401,411 412,410 418,409 425,408 432,408 439,407 446,406 453,406 458,405 464,404 470,404 475,404 481,404 487,405 493,407 501,409 514,412 530,416 546,419 564,421 583,423 601,424 617,425 632,425 646,425 661,425 676,425 691,424 709,424 728,423 741,423" stroke="#FF0000" stroke-width="1"/>
<path d="M262,426 262,426 263,426 267,426 276,426 288,426 300,426 313,426 327,427 340,427 352,426 364,425 375,423 388,419 400,413 410,409 416,406 420,403 424,400 431,393 438,384 445,377 451,373 457,370 463,369 469,368 474,369 480,371 487,374 493,379 500,384 507,390 513,397 520,405 527,413 534,422 545,431 562,439 581,447 600,453 616,457 631,460 645,461 660,460 675,458 690,456 708,453 727,450 740,448" stroke="#00FFFF" stroke-width="1"/>
<path d="M252,520 255,514 259,505 263,497 267,489 270,481 273,474 276,466 279,458 281,450 284,441 286,431 287,422 289,415 290,408 291,397 293,383 295,365 298,347 300,331 303,314 306,297 308,280 311,262 313,247 315,236 317,227 319,219 321,211 323,204 325,198 327,193 328,189 330,186 332,183 335,181 338,180 341,181 344,182 347,184 351,186 354,188 358,190 361,191 365,193 368,194 372,196 375,197 379,199 382,201 385,204 389,208 392,213 395,220 399,229 404,240 409,254 415,266 419,277 424,288 428,297 430,303 433,308 436,314 440,323 446,333 451,342 453,348 455,352 458,357 462,365 466,374 471,382 474,389 477,394 481,399 483,404 485,409 489,413 494,419 501,426 509,431 515,436 522,439 529,442 535,445 541,448 549,451 556,453 565,455 574,457 581,458 589,458 599,458 612,456 628,453 644,450 658,446 673,443 689,440 707,438 725,436 739,434" stroke="#FF00FF" stroke-width="1"/>
<path d="M263,421 262,422 261,422 268,421 288,421 315,419 341,418 363,418 384,418 401,418 412,417 418,416 424,415 432,415 439,415 446,415 452,415 458,414 464,413 470,413 475,413 481,413 487,414 492,415 501,416 514,419 529,423 546,426 564,429 583,432 601,434 617,435 631,436 646,436 661,437 676,436 691,436 709,436 728,435 741,435" stroke="#FF0000" stroke-width="1"/>
<path d="M262,455 272,453 286,450 300,447 313,444 327,441 340,438 352,435 363,432 375,428 389,424 404,420 420,415 436,409 452,402 470,400 492,407 517,418 540,428 558,435 574,440 600,445 646,450 701,455 740,458" stroke="#0000FF" stroke-width="1"/>
<path d="M263,421 263,421 264,421 268,421 277,421 288,421 301,421 314,421 328,422 341,422 353,421 364,419 376,417 388,413 401,408 411,404 417,401 420,398 425,395 431,388 439,379 446,372 452,368 458,366 464,365 470,364 475,365 481,367 487,370 494,375 501,380 507,386 514,392 521,400 528,408 535,416 546,425 562,433 582,441 601,447 617,451 631,454 646,455 661,455 676,452 691,450 709,447 728,443 741,441" stroke="#00FFFF" stroke-width="1"/>
<path d="M256,520 259,514 263,505 267,497 271,489 274,482 277,474 280,466 283,458 285,450 288,441 290,432 291,423 293,415 294,408 295,397 297,383 300,365 302,347 305,330 307,314 310,297 313,279 315,262 317,247 320,235 322,227 323,219 325,211 328,204 329,197 331,193 333,189 334,185 337,183 339,180 341,179 344,180 347,182 350,184 354,186 357,188 360,189 364,191 367,192 370,194 374,195 377,197 380,198 384,201 387,203 390,207 393,213 396,220 400,229 405,240 411,253 416,266 421,277 425,288 429,297 432,303 434,308 437,314 442,323 448,333 452,342 455,348 457,352 459,357 463,365 468,374 472,382 476,389 479,394 482,399 485,404 487,409 490,413 496,419 503,426 510,432 517,436 524,439 530,443 537,446 543,448 550,451 558,453 567,455 575,457 583,458 590,458 600,458 614,456 629,453 645,450 660,447 675,443 690,441 708,438 727,436 740,435" stroke="#FF00FF" stroke-width="1"/>
<path d="M260,422 261,422 262,422 265,422 274,422 286,422 298,422 311,422 325,423 338,423 350,422 362,420 373,418 386,414 398,409 408,405 414,402 418,400 422,396 429,389 436,380 443,373 450,369 456,367 461,365 467,365 473,366 478,367 485,371 492,376 498,381 505,387 511,393 518,401 525,409 533,418 543,426 560,434 580,442 598,448 614,452 629,455 643,456 658,456 673,454 688,451 707,448 725,445 738,443" stroke="#00FFFF" stroke-width="1"/>
<path d="M262,422 262,422 263,422 267,422 276,421 287,421 300,422 313,422 327,423 340,423 352,422 363,420 375,418 387,414 400,409 410,405 416,402 420,399 424,396 431,388 438,380 445,373 451,369 457,367 463,365 469,365 474,365 480,367 486,371 493,375 500,381 506,387 513,393 520,401 527,409 534,417 545,426 561,434 581,442 600,448 616,452 630,455 645,456 660,456 675,453 690,451 708,448 727,445 740,442" stroke="#00FFFF" stroke-width="1"/>
<path d="M263,428 263,428 264,428 268,428 276,428 288,428 301,428 314,428 327,429 341,429 353,429 364,428 376,426 388,421 401,416 411,411 417,408 420,406 425,402 431,395 439,386 446,379 452,375 458,372 464,371 469,370 475,371 481,373 487,376 494,381 501,386 507,392 514,399 521,407 528,416 535,425 546,434 562,442 582,450 601,456 616,460 631,462 646,463 661,463 675,461 691,459 709,456 728,454 741,452" stroke="#00FFFF" stroke-width="1"/>
<path d="M259,519 262,513 266,505 270,496 274,489 277,481 280,473 283,465 286,457 288,449 290,440 292,431 294,422 295,415 297,407 298,397 300,382 302,365 305,347 307,330 310,314 313,297 315,279 318,262 320,247 322,236 324,227 326,219 328,211 330,204 332,198 334,193 335,189 337,186 339,183 341,181 344,180 347,181 349,182 352,184 356,186 359,188 362,190 365,191 368,193 372,194 375,196 378,197 381,199 385,201 388,204 391,208 394,213 397,220 401,229 406,240 412,253 417,266 422,277 426,288 430,297 433,303 435,308 438,314 443,323 449,333 453,342 456,348 458,352 460,357 464,365 469,374 473,382 477,388 480,394 483,399 486,404 488,408 491,413 497,419 504,426 511,431 518,435 525,439 531,442 538,445 544,448 551,450 559,453 568,455 576,456 584,457 591,458 601,457 615,455 630,452 646,449 661,446 676,443 691,440 709,438 728,436 741,434" stroke="#FF00FF" stroke-width="1"/>
<path d="M261,424 262,424 262,424 266,424 275,424 287,424 299,424 312,425 326,425 339,425 351,425 363,423 374,421 387,417 399,412 409,407 415,404 419,402 423,398 430,391 437,383 444,376 451,372 456,369 462,368 468,367 473,368 479,370 486,373 492,378 499,383 506,389 512,396 519,403 526,412 534,421 544,429 561,437 581,445 599,451 615,455 630,458 644,459 659,459 674,457 689,454 707,451 726,448 739,446" stroke="#00FFFF" stroke-width="1"/>
<path d="M261,417 260,417 259,417 266,417 286,416 313,415 339,414 361,413 382,412 399,411 410,410 416,409 423,408 430,407 437,406 444,406 450,405 456,404 462,403 468,403 473,403 479,403 485,405 490,406 499,409 512,412 527,416 544,419 562,421 581,422 599,423 615,424 629,424 644,425 659,424 674,424 689,423 707,423 726,422 739,422" stroke="#FF0000" stroke-width="1"/>
<path d="M260,525 263,519 267,510 271,502 275,494 278,487 281,479 284,471 287,463 289,455 291,446 293,437 295,428 297,420 298,413 299,403 301,388 303,370 306,353 308,336 311,319 314,303 316,285 319,268 321,253 323,242 325,233 327,225 329,217 331,210 333,204 335,199 336,195 338,192 340,189 342,187 345,186 347,187 350,188 353,190 356,192 359,194 363,196 366,197 369,199 372,200 375,202 378,203 382,205 385,207 388,210 392,214 395,219 398,226 402,235 407,246 412,259 418,272 422,283 427,294 431,303 433,309 436,314 439,320 443,329 449,339 454,348 456,353 458,358 461,363 465,371 469,380 474,388 477,394 481,400 484,405 486,410 488,414 492,419 497,425 505,431 512,437 518,441 525,445 532,448 538,451 545,453 552,456 560,458 568,460 577,462 584,463 592,463 602,463 615,461 631,458 647,455 661,452 676,449 692,446 710,443 728,441 742,440" stroke="#FF00FF" stroke-width="1"/>
<path d="M261,420 260,420 260,420 266,420 286,419 314,418 339,417 362,416 383,416 399,415 410,414 417,413 423,412 430,412 438,411 444,411 451,411 457,410 462,409 468,409 474,409 479,409 485,410 491,411 499,413 512,416 528,420 544,423 562,426 582,428 599,429 615,431 630,431 644,432 659,432 674,431 689,431 708,430 726,430 739,430" stroke="#FF0000" stroke-width="1"/>
<path d="M263,422 263,422 264,422 268,422 277,422 288,422 301,422 314,423 328,423 341,423 353,422 364,421 376,419 388,415 401,410 411,405 417,402 420,400 425,396 431,389 439,380 446,374 452,370 458,367 464,366 469,365 475,366 481,368 487,371 494,376 501,381 507,387 514,394 521,401 528,409 535,418 546,427 562,435 582,442 601,449 617,453 631,456 646,457 661,456 675,454 691,452 709,449 728,445 741,443" stroke="#00FFFF" stroke-width="1"/>
<path d="M250,520 253,514 257,505 261,497 265,489 268,481 271,474 274,466 277,458 279,450 281,441 283,431 285,422 286,415 288,408 289,397 291,383 293,365 296,347 298,331 301,314 304,297 306,280 309,262 311,247 313,236 315,227 317,219 319,211 321,204 323,198 325,193 326,189 328,186 330,183 333,181 336,180 339,181 342,182 345,184 349,186 353,188 356,190 360,191 363,193 367,194 371,196 374,197 378,199 381,201 384,204 388,208 391,213 394,220 398,229 403,240 408,254 414,266 418,277 423,288 427,297 429,303 432,308 435,314 439,323 445,333 450,342 452,348 454,352 457,357 461,365 465,374 470,382 473,389 477,394 480,399 482,404 484,409 488,413 493,419 501,426 508,432 514,436 521,439 528,443 534,445 541,448 548,451 556,453 564,455 573,457 580,458 588,458 598,458 611,456 627,453 643,450 657,447 672,443 688,441 706,438 724,436 738,435" stroke="#FF00FF" stroke-width="1"/>
<path d="M260,423 261,423 261,423 265,423 274,423 286,423 298,423 311,423 325,424 338,424 350,423 362,422 373,420 386,415 398,410 408,406 414,403 418,401 422,397 429,390 436,381 443,374 450,370 455,368 461,366 467,366 472,367 478,368 485,372 492,377 498,382 505,388 511,395 518,402 525,410 533,419 543,428 560,436 580,443 598,450 614,454 629,456 643,458 658,457 673,455 688,453 706,450 725,446 738,444" stroke="#00FFFF" stroke-width="1"/>
<path d="M261,418 260,418 260,418 266,418 286,417 314,416 339,415 362,414 383,413 399,412 410,411 417,410 423,409 430,408 438,408 444,408 451,407 457,406 462,405 468,405 474,405 479,405 485,406 491,408 499,410 512,413 528,417 544,420 562,422 581,424 599,425 615,426 630,427 644,427 659,427 674,426 689,426 708,425 726,425 739,425" stroke="#FF0000" stroke-width="1"/>
<path d="M262,421 261,421 260,421 267,421 287,420 314,419 340,418 363,418 383,418 400,418 411,417 417,415 424,415 431,414 438,415 445,414 452,414 457,413 463,413 469,413 474,413 480,413 486,413 492,414 500,416 513,418 529,422 545,426 563,429 582,431 600,433 616,435 631,435 645,436 660,436 675,436 690,435 708,435 727,435 740,434" stroke="#FF0000" stroke-width="1"/>
<path d="M262,421 261,421 260,421 267,421 287,420 314,419 340,418 363,418 383,417 400,417 411,416 417,415 424,414 431,414 438,414 445,414 452,413 457,413 463,412 469,412 474,412 480,412 486,413 492,414 500,415 513,418 529,422 545,425 563,428 582,431 600,433 616,434 631,435 645,435 660,435 675,435 690,434 708,434 727,434 740,433" stroke="#FF0000" stroke-width="1"/>
<path d="M263,420 263,420 264,420 268,420 276,420 288,420 301,420 314,421 327,421 341,421 353,420 364,419 376,416 388,412 401,408 411,403 417,401 420,398 425,394 431,387 439,379 446,372 452,368 458,366 464,364 469,364 475,364 481,366 487,370 494,374 501,380 507,386 514,392 521,399 528,407 535,416 546,424 562,432 582,440 601,446 616,451 631,454 646,455 661,454 675,452 691,449 709,446 728,443 741,440" stroke="#00FFFF" stroke-width="1"/>
<path d="M263,420 262,420 261,420 268,420 288,419 315,418 341,417 364,417 384,416 401,416 412,415 418,414 425,413 432,412 439,412 446,412 453,412 458,411 464,410 470,410 475,410 481,410 487,411 493,412 501,414 514,417 530,420 546,424 564,427 583,429 601,431 617,432 632,433 646,433 661,433 676,433 691,432 709,432 728,431 741,431" stroke="#FF0000" stroke-width="1"/>
<path d="M264,428 264,428 265,428 269,428 278,428 289,428 302,428 315,428 329,429 342,429 354,429 365,428 377,426 389,422 402,416 412,411 418,408 422,406 426,402 433,395 440,386 447,379 453,375 459,373 465,371 471,370 476,371 482,373 488,376 495,381 502,386 508,393 515,399 522,407 529,416 536,425 547,434 563,442 583,450 602,456 618,460 632,462 647,463 662,463 677,461 692,459 710,457 729,454 742,452" stroke="#00FFFF" stroke-width="1"/>
<path d="M261,419 260,419 259,419 266,419 286,418 313,417 339,416 361,415 382,414 399,413 409,412 416,411 422,410 430,410 437,410 444,409 450,408 456,408 462,407 467,407 473,407 479,407 484,408 490,409 499,411 512,414 527,418 544,421 562,424 581,426 599,427 615,428 629,429 644,429 659,429 673,428 689,428 707,427 726,427 739,427" stroke="#FF0000" stroke-width="1"/>
<path d="M263,432 263,432 264,432 268,432 277,431 288,429 301,427 314,425 328,423 341,421 353,418 364,414 376,411 390,409 405,407 416,406 421,404 422,402 425,401 431,400 439,399 446,399 452,398 458,399 464,399 470,399 475,399 481,400 487,401 492,404 501,408 514,415 529,424 546,432 564,437 583,442 601,446 618,451 635,455 651,459 665,461 677,461 691,462 709,462 728,461 741,461" stroke="#0000FF" stroke-width="1"/>
<path d="M262,425 262,425 263,425 267,425 275,425 287,425 300,425 313,425 327,426 340,426 352,425 363,424 375,422 387,418 400,413 410,408 416,405 419,403 424,399 430,392 438,383 445,376 451,372 457,370 463,368 468,368 474,368 480,370 486,374 493,378 500,384 506,390 513,396 520,404 527,412 534,421 545,430 561,438 581,446 600,452 616,456 630,459 645,460 660,459 674,457 690,455 708,452 727,449 740,447" stroke="#00FFFF" stroke-width="1"/>
<path d="M262,432 262,432 263,432 267,432 276,431 287,429 300,427 313,426 327,423 340,421 352,418 363,414 375,411 389,409 404,407 415,406 420,404 421,402 424,401 430,400 438,399 445,399 451,399 457,399 463,399 469,399 474,399 480,400 485,401 491,404 500,408 513,415 528,424 545,432 563,438 582,442 600,446 617,451 634,455 650,459 664,461 676,461 690,462 708,462 727,461 740,461" stroke="#0000FF" stroke-width="1"/>
<path d="M262,424 262,424 263,424 267,424 276,424 287,424 300,424 313,424 327,425 340,425 352,424 363,423 375,421 387,417 400,412 410,407 416,404 420,402 424,398 431,391 438,382 445,375 451,371 457,369 463,367 469,367 474,367 480,369 486,373 493,377 500,383 506,389 513,396 520,403 527,411 534,420 545,429 561,437 581,445 600,451 616,455 630,458 645,459 660,458 675,456 690,454 708,451 727,448 740,446" stroke="#00FFFF" stroke-width="1"/>
<path d="M262,470 277,468 298,465 320,462 340,459 361,456 380,452 397,448 414,444 430,440 446,434 463,428 480,425 499,429 520,436 540,445 561,456 582,469 600,480 611,487 620,491 630,494 645,494 662,493 680,490 701,485 724,479 740,475" stroke="#008000" stroke-width="1"/>
<path d="M262,459 270,459 278,459 286,459 294,459 302,459 310,459 318,459 326,459 334,459 342,459 350,459 358,459 366,458 374,457 382,456 390,454 398,451 406,447 414,443 422,437 430,429 438,421 446,412 454,403 462,395 470,387 478,381 486,378 494,377 502,379 510,384 518,391 526,400 534,409 542,420 550,430 558,439 566,447 574,454 582,460 590,464 598,467 606,470 614,471 622,473 630,473 638,474 646,475 654,475 662,476 670,476 678,477 686,477 694,477 702,478 710,478 718,479 726,479 734,480 742,480" stroke="#008000" stroke-width="1"/>
<path d="M262,417 261,417 260,417 267,417 287,416 314,415 340,414 363,413 383,412 400,411 411,410 417,409 424,408 431,407 438,407 445,406 452,405 457,405 463,404 469,404 474,403 480,404 486,405 492,407 500,409 513,412 529,416 545,419 563,421 582,422 600,424 616,424 631,425 645,425 660,425 675,424 690,424 708,423 727,423 740,423" stroke="#FF0000" stroke-width="1"/>
<path d="M253,525 256,519 260,510 264,502 267,494 271,486 274,478 277,471 280,463 282,454 284,445 286,436 288,427 289,419 291,412 292,402 294,387 296,369 299,351 301,335 304,318 307,301 309,283 312,266 314,251 316,239 318,230 320,222 322,214 324,207 326,201 328,196 329,192 331,189 333,186 336,184 338,183 341,184 344,186 348,188 351,189 355,191 358,193 362,195 365,196 369,198 372,199 375,200 379,202 382,204 385,207 389,211 392,217 395,224 399,232 404,244 409,257 415,270 420,281 424,292 428,301 431,307 433,312 436,318 441,327 446,338 451,346 454,352 455,356 458,361 462,369 466,379 471,387 474,393 478,399 481,404 483,409 485,413 489,418 495,424 502,430 509,436 515,440 522,444 529,447 535,450 542,453 549,455 557,458 565,460 574,461 581,462 589,463 599,462 612,460 628,457 644,454 659,451 673,448 689,445 707,443 726,441 739,439" stroke="#FF00FF" stroke-width="1"/>
<path d="M256,525 259,519 263,510 267,502 271,494 274,486 277,478 280,470 283,462 285,454 287,445 289,436 291,427 292,419 294,412 295,402 297,387 299,369 302,351 304,334 307,317 310,301 312,283 315,265 317,250 319,239 321,230 323,222 325,214 327,207 329,201 331,196 332,192 334,189 336,186 339,183 341,182 344,183 347,185 350,187 353,189 357,191 360,193 363,194 367,196 370,197 373,198 377,200 380,202 383,204 387,207 390,211 393,216 396,223 400,232 405,243 411,257 416,269 421,281 425,291 429,301 432,307 434,312 437,318 442,327 447,337 452,346 455,352 457,356 459,361 463,369 468,378 472,386 476,393 479,398 482,404 484,408 487,413 490,418 496,424 503,430 510,436 517,440 523,444 530,447 537,450 543,453 550,455 558,457 567,460 575,461 583,462 590,463 600,462 614,460 629,457 645,454 660,451 675,448 690,445 708,443 727,440 740,439" stroke="#FF00FF" stroke-width="1"/>
<path d="M262,424 262,424 263,424 267,424 276,423 288,423 300,424 313,424 327,425 340,425 352,424 364,423 375,420 388,416 400,411 410,407 416,404 420,401 424,398 431,390 438,382 445,375 451,371 457,368 463,367 469,367 474,367 480,369 487,372 493,377 500,383 507,389 513,395 520,403 527,411 534,420 545,428 562,437 582,444 600,450 616,455 631,457 645,458 660,458 675,456 690,453 708,451 727,448 740,445" stroke="#00FFFF" stroke-width="1"/>
<path d="M263,428 263,428 264,428 268,428 276,427 288,426 301,424 314,423 327,421 341,418 352,415 364,412 376,408 390,406 404,404 416,403 420,401 422,400 425,398 431,397 438,396 446,396 452,396 458,396 464,396 469,396 475,396 481,397 486,399 492,401 501,406 513,413 529,422 546,430 563,435 582,439 601,444 618,448 635,453 651,456 664,458 677,459 691,459 708,459 727,458 741,458" stroke="#0000FF" stroke-width="1"/>
<path d="M261,421 261,421 262,421 266,421 274,421 286,421 299,421 312,421 325,422 339,422 351,421 362,419 374,417 386,413 399,408 409,404 415,401 418,399 423,395 429,388 437,379 444,372 450,368 456,366 462,365 467,364 473,365 479,367 485,370 492,375 499,380 505,386 512,393 519,400 526,408 533,417 544,425 560,433 580,441 599,447 614,451 629,454 644,455 659,455 673,452 689,450 707,447 726,443 739,441" stroke="#00FFFF" stroke-width="1"/>
<path d="M262,415 262,415 263,415 267,415 276,415 288,415 300,414 313,413 327,412 340,411 352,408 363,404 375,401 389,398 404,396 415,394 420,393 421,392 424,391 430,389 438,388 445,387 451,386 457,386 463,386 469,386 474,387 480,388 486,390 492,393 500,397 513,405 529,415 545,424 563,429 582,432 600,435 618,440 634,445 650,449 664,450 677,450 690,450 708,449 727,449 740,448" stroke="#0000FF" stroke-width="1"/>
<path d="M261,431 262,431 262,431 266,431 275,430 287,428 299,427 312,425 326,423 339,420 351,417 363,413 374,410 388,408 403,407 414,405 419,403 421,402 423,400 430,399 437,398 444,398 451,398 457,398 462,398 468,398 474,398 479,399 485,401 491,403 499,408 512,415 528,424 544,432 562,437 581,441 599,446 617,450 634,455 649,458 663,460 676,461 689,461 707,461 726,461 739,460" stroke="#0000FF" stroke-width="1"/>
<path d="M253,524 256,518 260,510 264,501 267,493 271,484 274,476 277,469 279,461 282,453 284,444 286,434 288,424 289,416 290,409 292,399 294,383 296,365 298,347 301,329 304,311 306,294 309,276 311,258 314,242 316,231 318,223 320,215 322,206 324,199 326,192 327,187 329,183 331,180 333,177 335,175 338,174 341,175 344,177 347,179 350,181 353,183 357,184 360,186 363,187 367,189 370,190 373,192 377,194 380,196 383,199 387,204 390,209 393,215 397,224 402,236 407,250 413,263 417,275 422,286 426,295 429,302 431,307 434,313 439,322 444,332 449,341 451,347 453,352 456,358 460,366 464,375 469,383 472,390 476,395 479,400 481,405 483,411 487,416 493,422 500,427 507,433 513,437 520,442 527,445 533,448 540,450 547,452 555,455 563,457 572,459 579,460 587,461 597,461 610,459 626,456 642,453 657,449 671,446 687,443 705,440 724,438 737,436" stroke="#FF00FF" stroke-width="1"/>
<path d="M261,421 260,421 259,421 266,421 286,420 313,419 339,418 361,418 382,418 399,418 409,417 416,416 422,415 430,414 437,415 444,415 450,414 456,413 462,413 467,413 473,413 479,413 484,413 490,414 499,416 512,418 527,422 544,426 562,429 581,431 599,433 615,435 629,436 644,436 659,436 673,436 689,435 707,435 726,435 739,434" stroke="#FF0000" stroke-width="1"/>
<path d="M261,420 260,420 259,420 266,420 286,419 313,418 339,417 362,416 383,416 399,415 410,414 417,413 423,412 430,412 438,412 444,412 451,411 457,410 462,410 468,410 473,410 479,410 485,410 491,412 499,413 512,416 528,420 544,423 562,426 581,428 599,430 615,431 630,432 644,432 659,432 674,432 689,431 707,431 726,431 739,430" stroke="#FF0000" stroke-width="1"/>
<path d="M263,427 263,427 264,427 268,427 276,427 288,427 301,427 314,428 327,428 341,428 353,428 364,427 376,425 388,421 401,415 411,410 417,407 420,405 425,401 431,394 439,386 446,379 452,374 458,372 464,370 469,370 475,370 481,372 487,376 494,380 501,386 507,392 514,399 521,406 528,415 535,424 546,433 562,441 582,449 601,455 616,459 631,462 646,463 661,462 675,460 691,458 709,456 728,453 741,451" stroke="#00FFFF" stroke-width="1"/>
<path d="M262,454 270,454 278,454 286,454 294,454 302,454 310,454 318,454 326,454 334,454 342,453 350,453 358,451 366,449 374,447 382,443 390,438 398,432 406,424 414,416 422,408 430,400 438,393 446,388 454,385 462,385 470,388 478,393 486,401 494,410 502,419 510,428 518,437 526,445 534,451 542,457 550,461 558,465 566,467 574,469 582,471 590,472 598,473 606,473 614,474 622,474 630,474 638,475 646,474 654,473 662,472 670,471 678,470 686,469 694,467 702,466 710,465 718,464 726,463 734,462 742,461" stroke="#008000" stroke-width="1"/>
<path d="M255,523 258,517 262,508 266,499 269,492 272,484 276,476 279,468 281,460 284,452 286,443 288,434 290,425 291,417 292,409 294,399 296,384 298,366 300,349 303,332 305,315 308,298 311,280 313,263 316,247 318,236 320,227 322,219 324,211 326,204 328,198 329,193 331,189 333,186 335,183 337,180 340,179 343,180 346,182 349,184 352,186 356,188 359,190 363,191 366,193 369,194 373,195 376,197 379,199 383,201 386,204 389,208 393,213 396,220 399,229 404,241 410,254 415,267 420,278 425,289 428,298 431,304 433,309 436,315 441,324 447,335 451,343 454,349 456,353 458,359 462,367 467,376 471,384 475,390 478,396 481,401 484,406 486,410 489,415 495,421 502,428 509,434 516,438 523,442 529,445 536,448 542,450 549,453 557,455 566,457 574,459 582,460 590,460 599,460 613,458 629,455 644,452 659,449 674,446 689,443 708,440 726,438 739,437" stroke="#FF00FF" stroke-width="1"/>
<path d="M261,421 261,421 262,421 266,421 274,421 286,421 299,421 312,422 325,423 339,422 351,422 362,420 374,418 386,414 398,409 409,404 415,402 418,399 423,395 429,388 437,380 444,373 450,369 456,367 462,365 467,365 473,365 479,367 485,371 492,375 499,381 505,387 512,393 519,400 525,409 533,417 544,426 560,434 580,442 599,448 614,452 629,455 644,456 658,456 673,453 689,451 707,448 725,445 739,442" stroke="#00FFFF" stroke-width="1"/>
<path d="M256,522 259,516 263,507 267,499 270,492 274,484 277,477 280,469 282,461 285,453 287,445 289,436 291,427 292,420 293,412 295,403 297,388 299,371 301,354 304,338 307,321 309,305 312,288 314,271 317,256 319,245 321,237 323,229 325,221 327,214 329,209 330,204 332,200 334,197 336,194 338,192 341,191 344,192 347,193 350,195 353,197 356,199 360,201 363,202 367,204 370,205 373,206 377,208 380,209 383,212 387,214 390,218 393,224 396,230 400,239 405,250 411,263 416,275 421,286 425,296 429,305 432,311 434,316 437,322 442,330 447,340 452,349 455,354 456,358 459,364 463,371 468,380 472,388 476,394 479,400 482,405 484,409 486,413 490,418 496,424 503,430 510,436 517,440 523,443 530,446 536,449 543,452 550,454 558,457 566,459 575,460 582,461 590,462 600,461 613,459 629,456 645,453 660,450 675,447 690,445 708,442 727,440 740,439" stroke="#FF00FF" stroke-width="1"/>
<path d="M262,422 262,422 263,422 267,422 275,422 287,422 300,422 313,422 326,423 340,423 352,422 363,421 375,418 387,414 400,409 410,405 416,402 419,400 424,396 430,389 438,380 445,373 451,369 457,367 463,365 468,365 474,366 480,367 486,371 493,376 500,381 506,387 513,393 520,401 527,409 534,418 545,426 561,434 581,442 600,448 615,452 630,455 645,456 659,456 674,454 690,451 708,448 727,445 740,443" stroke="#00FFFF" stroke-width="1"/>
<path d="M262,402 270,402 278,402 286,402 294,402 302,402 310,402 318,402 326,402 334,402 342,402 350,402 358,402 366,402 374,402 382,401 390,400 398,399 406,398 414,396 422,393 430,390 438,387 446,383 454,379 462,375 470,372 478,371 486,372 494,374 502,379 510,387 518,396 526,406 534,416 542,426 550,436 558,444 566,451 574,456 582,460 590,463 598,465 606,467 614,468 622,468 630,469 638,469 646,469 654,469 662,468 670,468 678,467 686,466 694,466 702,465 710,465 718,464 726,464 734,463 742,463" stroke="#008000" stroke-width="1"/>
<path d="M258,524 261,518 265,510 269,501 273,493 276,486 279,478 282,470 285,462 287,454 289,445 291,436 293,427 295,419 296,412 297,401 299,386 301,369 304,351 306,334 309,317 312,301 314,283 317,265 319,250 321,239 323,230 325,222 327,214 329,207 331,201 333,196 334,192 336,189 338,186 340,184 343,183 346,183 349,185 352,187 355,189 358,191 361,193 365,194 368,196 371,197 374,199 378,200 381,202 384,204 388,207 391,211 394,216 397,223 401,232 406,244 412,257 417,269 422,281 426,291 430,301 433,307 435,312 438,318 443,327 448,337 453,346 456,352 457,356 460,361 464,369 469,378 473,386 476,393 480,398 483,403 485,408 487,413 491,417 497,423 504,430 511,436 518,440 524,443 531,447 537,450 544,452 551,455 559,457 567,459 576,461 583,462 591,462 601,462 614,460 630,457 646,454 661,451 675,447 691,445 709,442 728,440 741,439" stroke="#FF00FF" stroke-width="1"/>
<path d="M262,422 262,422 263,422 267,422 275,422 287,422 300,422 313,423 327,423 340,423 352,422 363,421 375,419 387,415 400,410 410,405 416,402 419,400 424,396 430,389 438,380 445,374 451,370 457,367 463,366 468,365 474,366 480,368 486,371 493,376 500,381 506,387 513,394 520,401 527,409 534,418 545,427 561,435 581,442 600,449 616,453 630,456 645,457 660,456 674,454 690,452 708,449 727,445 740,443" stroke="#00FFFF" stroke-width="1"/>
<path d="M260,520 263,514 267,505 271,497 275,489 278,481 281,474 284,466 287,458 289,450 291,441 293,432 295,423 296,415 298,408 299,398 301,383 303,365 306,348 308,331 311,314 314,298 316,280 319,263 321,248 323,236 325,228 327,220 329,212 331,205 333,199 335,194 336,190 338,187 340,184 342,182 345,181 347,181 350,183 353,185 356,187 359,189 363,191 366,192 369,194 372,195 375,196 378,198 382,200 385,202 388,204 392,209 395,214 398,221 402,230 407,241 412,254 418,267 422,278 427,288 431,298 433,304 436,309 439,315 443,324 449,334 454,343 456,348 458,352 461,358 465,365 469,374 474,383 477,389 481,394 484,400 486,404 488,409 492,414 497,420 505,426 512,432 518,436 525,439 532,443 538,446 545,448 552,451 560,453 568,455 577,457 584,458 592,458 602,458 615,456 631,453 647,450 661,447 676,443 692,441 710,438 728,436 742,435" stroke="#FF00FF" stroke-width="1"/>
<path d="M261,519 264,513 268,504 272,496 276,488 279,481 282,473 285,465 288,457 290,449 293,440 295,431 296,422 298,415 299,408 300,397 302,383 304,365 307,348 309,331 312,315 315,298 317,281 320,263 322,248 324,237 326,228 328,221 330,213 332,206 334,200 336,195 338,191 339,188 341,185 344,183 346,182 349,182 351,184 354,186 357,188 360,190 363,192 367,193 370,195 373,196 376,197 379,199 382,201 385,203 389,206 392,210 395,215 398,222 402,230 407,242 413,255 418,267 423,278 427,289 431,298 434,304 436,309 439,315 444,324 449,334 454,343 457,348 459,352 461,358 465,366 470,374 474,383 478,389 481,394 484,399 487,404 489,409 492,413 498,419 505,426 512,431 519,436 525,439 532,442 539,445 545,448 552,450 560,452 569,455 577,456 585,457 592,458 602,457 616,455 631,452 647,449 662,446 677,443 692,440 710,438 729,436 742,434" stroke="#FF00FF" stroke-width="1"/>
<path d="M262,424 263,424 263,424 267,424 276,423 288,423 300,424 313,424 327,425 340,425 352,424 364,423 375,420 388,416 400,411 410,407 416,404 420,401 424,398 431,390 438,382 445,375 452,371 457,368 463,367 469,367 474,367 480,369 487,372 493,377 500,383 507,389 513,395 520,403 527,411 535,420 545,428 562,437 582,444 600,450 616,455 631,457 645,458 660,458 675,456 690,453 708,451 727,448 740,445" stroke="#00FFFF" stroke-width="1"/>
<path d="M260,521 262,515 267,507 271,498 274,490 277,483 281,475 283,467 286,459 289,451 291,442 293,433 295,424 296,416 297,409 299,399 301,384 303,366 305,349 308,332 310,316 313,299 316,281 318,264 321,249 323,238 325,229 327,221 329,213 331,206 333,200 334,195 336,191 338,188 340,185 342,183 344,182 347,182 350,184 353,186 356,188 359,190 362,192 365,193 369,195 372,196 375,198 378,199 381,201 385,203 388,206 391,210 395,215 398,222 401,231 406,242 412,255 417,268 422,279 427,290 430,299 433,305 435,310 438,316 443,325 449,335 453,344 456,349 458,354 460,359 464,367 469,376 473,384 477,390 480,396 483,401 486,406 488,410 491,415 497,421 504,427 511,433 518,437 525,441 531,444 538,447 544,450 551,452 559,454 568,456 576,458 584,459 592,459 601,459 615,457 631,454 646,451 661,448 676,445 691,442 710,440 728,437 741,436" stroke="#FF00FF" stroke-width="1"/>
<path d="M260,418 259,418 258,419 265,418 285,418 312,416 338,415 360,414 381,414 398,413 409,412 415,411 422,410 429,409 436,409 443,409 449,408 455,407 461,406 467,406 472,406 478,406 484,407 489,409 498,411 511,414 526,418 543,421 561,423 580,425 598,426 614,427 628,428 643,428 658,428 673,428 688,427 706,427 725,426 738,426" stroke="#FF0000" stroke-width="1"/>
<path d="M261,428 261,428 262,428 266,428 274,428 286,428 299,428 312,428 325,429 339,429 351,428 362,428 374,426 386,421 399,416 409,411 415,408 418,405 423,402 429,395 437,386 444,379 450,375 456,372 462,371 467,370 473,371 479,373 485,376 492,381 499,386 505,392 512,399 519,407 526,415 533,425 544,434 560,442 580,450 599,456 614,460 629,462 644,463 659,463 673,461 689,459 707,456 726,453 739,452" stroke="#00FFFF" stroke-width="1"/>
<path d="M261,417 262,417 263,417 266,417 275,417 287,416 299,415 312,415 326,413 339,412 351,409 363,405 374,402 389,399 403,397 414,395 419,394 421,393 423,392 430,390 437,389 444,388 451,388 457,388 462,388 468,388 474,388 479,389 485,391 491,394 499,398 512,406 528,416 544,424 562,429 581,433 599,436 617,441 634,446 649,450 663,451 676,451 689,451 707,451 726,450 739,450" stroke="#0000FF" stroke-width="1"/>
<path d="M262,429 262,429 263,429 267,429 275,428 287,427 300,425 313,423 326,421 340,419 351,416 363,412 375,409 389,407 403,405 415,403 419,402 421,400 424,399 430,398 437,397 445,396 451,396 457,397 463,397 468,397 474,397 480,397 485,399 491,402 500,406 512,414 528,423 545,430 562,436 581,440 600,444 617,449 634,454 650,457 663,459 676,459 690,459 707,459 726,459 740,459" stroke="#0000FF" stroke-width="1"/>
<path d="M265,422 265,422 266,422 270,422 278,422 290,422 303,422 316,423 329,423 343,423 355,423 366,421 378,419 390,415 403,410 413,405 419,403 422,400 427,396 433,389 441,381 448,374 454,370 460,367 466,366 471,366 477,366 483,368 489,372 496,376 503,382 509,388 516,394 523,401 529,410 537,419 548,427 564,435 584,443 603,449 618,453 633,456 648,457 662,457 677,455 693,452 711,449 729,446 743,444" stroke="#00FFFF" stroke-width="1"/>
<path d="M263,425 263,425 264,425 268,425 276,425 288,425 301,425 314,425 327,426 341,426 353,425 364,424 376,422 388,418 401,412 411,408 417,405 420,402 425,399 431,392 439,383 446,376 452,372 458,369 464,368 469,367 475,368 481,370 487,373 494,378 501,384 507,389 514,396 521,404 527,412 535,421 546,430 562,438 582,446 601,452 616,456 631,458 646,460 660,459 675,457 691,455 709,452 727,449 741,447" stroke="#00FFFF" stroke-width="1"/>
<path d="M262,426 262,426 263,426 267,426 276,426 287,426 300,426 313,426 327,427 340,427 352,426 364,426 375,423 387,419 400,414 410,409 416,406 420,404 424,400 431,393 438,384 445,377 451,373 457,371 463,369 469,369 474,369 480,371 486,375 493,379 500,385 506,391 513,397 520,405 527,413 534,423 545,431 561,440 581,447 600,453 616,457 630,460 645,461 660,461 675,459 690,456 708,454 727,451 740,449" stroke="#00FFFF" stroke-width="1"/>
<path d="M262,420 262,420 263,420 267,420 275,420 287,420 300,420 313,421 326,421 340,421 352,420 363,419 375,416 387,412 400,407 410,403 416,400 419,398 424,394 430,387 438,379 445,372 451,368 457,365 463,364 468,364 474,364 480,366 486,370 493,374 500,380 506,385 513,392 520,399 527,407 534,416 545,424 561,432 581,440 600,446 615,451 630,453 645,455 660,454 674,452 690,449 708,446 727,443 740,440" stroke="#00FFFF" stroke-width="1"/>
<path d="M261,426 262,426 263,426 266,426 275,426 287,426 299,426 312,426 326,427 339,427 352,426 363,426 374,423 387,419 399,414 409,409 415,406 419,404 423,400 430,393 437,384 444,377 451,373 457,371 462,369 468,369 474,369 479,371 486,375 493,379 499,385 506,391 512,397 519,405 526,413 534,423 544,431 561,440 581,447 599,453 615,457 630,460 644,461 659,461 674,459 689,456 708,454 726,451 739,449" stroke="#00FFFF" stroke-width="1"/>
<path d="M262,409 270,409 278,409 286,409 294,409 302,409 310,409 318,409 326,409 334,409 342,408 350,408 358,408 366,407 374,406 382,405 390,402 398,399 406,395 414,389 422,384 430,377 438,372 446,367 454,364 462,364 470,366 478,371 486,378 494,386 502,396 510,406 518,415 526,425 534,433 542,440 550,446 558,452 566,457 574,461 582,464 590,467 598,469 606,471 614,472 622,473 630,474 638,475 646,475 654,475 662,474 670,474 678,474 686,473 694,472 702,472 710,471 718,471 726,470 734,469 742,469" stroke="#008000" stroke-width="1"/>
<path d="M264,425 264,425 265,425 269,425 277,425 289,425 302,425 315,425 328,426 342,426 354,425 365,424 377,422 389,418 401,413 412,408 417,405 421,403 426,399 432,392 439,383 447,376 453,372 459,370 465,368 470,368 476,368 482,370 488,374 495,378 502,384 508,390 514,397 522,404 528,412 536,421 547,430 563,438 583,446 602,452 617,456 632,459 647,460 661,459 676,457 692,455 710,452 728,449 742,447" stroke="#00FFFF" stroke-width="1"/>
<path d="M263,420 263,420 264,420 268,420 276,419 288,419 301,418 314,417 327,415 341,413 352,410 364,407 376,403 390,401 404,399 416,397 420,396 422,395 425,393 431,392 438,391 446,390 452,390 458,390 464,390 469,390 475,390 481,391 486,393 492,396 501,400 513,408 529,418 546,426 563,431 582,435 601,438 618,443 635,448 651,451 664,453 677,453 691,453 708,453 727,452 741,452" stroke="#0000FF" stroke-width="1"/>
<path d="M261,424 262,424 263,424 266,424 275,423 287,422 299,421 312,419 326,418 339,416 351,413 363,409 374,406 389,403 403,401 414,400 419,398 421,397 423,396 430,395 437,393 444,393 451,392 457,392 462,393 468,393 474,393 479,394 485,396 491,398 499,403 512,410 528,420 544,428 562,433 581,437 599,441 617,445 634,450 649,454 663,455 676,456 689,456 707,456 726,455 739,455" stroke="#0000FF" stroke-width="1"/>
<path d="M261,434 262,434 262,434 266,434 275,433 287,431 299,429 312,427 326,424 339,422 351,419 363,415 374,412 389,410 403,408 414,407 419,405 421,403 423,402 430,401 437,400 444,400 451,400 457,400 462,400 468,400 474,400 479,401 485,403 491,405 499,409 512,416 528,425 544,433 562,438 581,443 599,447 617,452 634,456 649,460 663,462 676,462 689,463 707,463 726,463 739,462" stroke="#0000FF" stroke-width="1"/>
<path d="M261,426 262,426 262,426 266,426 275,426 287,426 299,426 312,426 326,427 339,427 351,426 363,426 374,423 387,419 399,414 409,409 415,406 419,404 423,400 430,393 437,384 444,377 451,373 456,371 462,369 468,369 473,369 479,371 486,375 493,379 499,385 506,391 512,397 519,405 526,413 534,423 544,431 561,440 581,447 599,453 615,457 630,460 644,461 659,461 674,459 689,456 707,454 726,451 739,449" stroke="#00FFFF" stroke-width="1"/>
<path d="M263,424 263,424 264,424 268,424 277,423 289,422 301,421 314,419 328,418 341,416 353,413 364,409 376,406 390,403 405,401 416,400 421,398 422,397 425,396 431,395 439,393 446,393 452,392 458,393 464,393 470,393 475,393 481,394 487,396 492,398 501,403 514,410 529,420 546,428 564,433 583,437 601,441 619,445 635,450 651,454 665,455 677,456 691,456 709,456 728,455 741,455" stroke="#0000FF" stroke-width="1"/>
<path d="M262,418 262,418 263,418 267,418 275,418 287,417 300,416 313,415 327,414 340,413 352,410 363,406 375,403 389,400 404,398 415,396 420,395 421,394 424,393 430,391 438,390 445,389 451,389 457,388 463,389 468,389 474,389 480,390 485,392 491,395 500,399 513,407 528,417 545,425 563,430 581,434 600,437 617,442 634,447 650,451 663,452 676,452 690,452 708,452 726,451 740,451" stroke="#0000FF" stroke-width="1"/>
<path d="M260,521 263,515 267,507 271,498 274,491 278,483 281,475 284,468 286,460 289,452 291,443 293,434 295,425 296,417 297,410 299,400 301,385 303,367 305,350 308,333 311,317 313,300 316,283 319,265 321,250 323,239 325,230 327,222 329,215 331,208 333,202 335,197 336,193 338,190 340,187 342,185 345,184 347,184 350,186 353,188 356,190 359,192 363,194 366,195 369,197 372,198 375,199 378,201 382,203 385,205 388,207 392,211 395,217 398,224 402,232 407,244 412,257 418,269 422,281 427,291 431,300 433,306 436,311 439,317 443,326 449,336 454,345 456,351 458,355 461,360 465,368 469,377 474,385 477,391 481,397 484,402 486,406 488,411 492,416 497,422 504,428 512,434 518,438 525,441 532,445 538,448 545,450 552,453 560,455 568,457 577,459 584,460 592,460 602,460 615,458 631,455 647,452 661,449 676,445 692,443 710,440 728,438 742,437" stroke="#FF00FF" stroke-width="1"/>
<path d="M260,425 261,425 261,425 265,425 274,424 286,423 298,422 311,421 325,419 338,417 350,414 362,410 373,407 388,404 402,403 413,401 418,399 420,398 422,397 429,396 436,395 443,394 450,394 456,394 461,394 467,394 473,394 478,395 484,397 490,399 498,404 511,411 527,421 543,429 561,434 580,438 598,442 616,447 633,451 648,455 662,456 675,457 688,457 706,457 725,456 738,456" stroke="#0000FF" stroke-width="1"/>
<path d="M255,524 258,518 262,509 266,501 270,493 273,485 276,477 279,470 282,462 284,453 286,444 288,435 290,426 292,418 293,411 294,401 296,386 298,368 301,351 303,334 306,317 309,300 311,283 314,265 316,250 318,238 320,230 322,222 324,214 326,207 328,200 330,196 331,192 333,188 335,185 338,183 340,182 343,183 346,185 349,187 353,189 356,191 360,192 363,194 366,195 370,197 373,198 376,200 380,201 383,204 386,206 390,211 393,216 396,223 400,232 405,243 410,256 416,269 420,280 425,291 429,300 431,307 434,311 437,317 441,326 447,337 452,345 454,351 456,355 459,361 463,369 467,378 472,386 475,392 479,398 482,403 484,408 486,412 490,417 495,423 503,429 510,435 516,439 523,443 530,446 536,449 543,452 550,454 558,457 566,459 575,460 582,461 590,462 600,461 613,459 629,456 645,453 660,450 674,447 690,444 708,442 727,440 740,438" stroke="#FF00FF" stroke-width="1"/>
<path d="M262,429 262,429 263,429 267,429 276,428 288,426 300,425 313,423 327,421 340,419 352,416 363,412 375,409 389,406 404,405 415,403 420,402 421,400 424,399 430,398 438,397 445,396 451,396 457,396 463,396 469,396 474,396 480,397 486,399 492,402 500,406 513,413 528,422 545,430 563,436 582,440 600,444 618,449 634,453 650,457 664,458 676,459 690,459 708,459 727,459 740,458" stroke="#0000FF" stroke-width="1"/>
<path d="M262,427 270,427 278,427 286,427 294,427 302,427 310,427 318,426 326,426 334,425 342,424 350,423 358,422 366,420 374,417 382,414 390,411 398,407 406,402 414,397 422,392 430,386 438,380 446,375 454,370 462,366 470,364 478,362 486,362 494,364 502,367 510,372 518,378 526,386 534,394 542,402 550,411 558,419 566,427 574,434 582,441 590,446 598,451 606,454 614,457 622,460 630,462 638,463 646,464 654,464 662,464 670,463 678,463 686,462 694,462 702,461 710,460 718,460 726,459 734,458 742,457" stroke="#008000" stroke-width="1"/>
<path d="M261,428 261,428 262,428 266,428 274,428 286,428 299,428 312,428 325,429 339,429 351,429 362,428 374,426 386,421 398,416 409,411 415,408 418,406 423,402 429,395 437,386 444,379 450,375 456,372 462,371 467,370 473,371 479,373 485,376 492,381 499,386 505,392 512,399 519,407 525,416 533,425 544,434 560,442 580,450 599,456 614,460 629,462 644,463 658,463 673,461 689,459 707,456 725,454 739,452" stroke="#00FFFF" stroke-width="1"/>
<path d="M261,423 262,423 262,423 266,423 275,422 287,421 299,420 312,419 326,417 339,415 351,412 362,408 374,405 388,403 403,401 414,399 419,398 421,396 423,395 430,394 437,393 444,392 451,392 457,392 462,392 468,392 473,392 479,393 485,395 491,398 499,402 512,410 528,419 544,427 562,433 581,436 599,440 617,445 634,450 649,453 663,455 676,455 689,455 707,455 726,454 739,454" stroke="#0000FF" stroke-width="1"/>
<path d="M263,421 263,421 264,421 268,421 277,421 289,421 301,421 314,421 328,422 341,422 353,421 365,419 376,417 389,413 401,408 411,404 417,401 421,399 425,395 432,388 439,379 446,372 452,368 458,366 464,365 470,364 475,365 481,367 488,370 494,375 501,380 508,386 514,393 521,400 528,408 535,417 546,425 563,433 583,441 601,447 617,451 632,454 646,455 661,455 676,453 691,450 709,447 728,444 741,441" stroke="#00FFFF" stroke-width="1"/>
<path d="M254,525 257,519 261,510 265,501 268,493 272,485 275,477 278,468 281,460 283,451 285,443 287,434 289,425 290,417 292,409 293,398 295,382 297,364 299,346 302,329 305,313 307,295 310,277 313,258 315,242 317,231 319,223 321,215 323,207 325,199 327,193 329,188 330,183 332,180 334,177 336,175 339,174 342,175 345,176 348,178 351,179 355,181 358,183 361,185 365,187 368,189 371,191 375,192 378,194 381,196 385,199 388,203 391,209 394,216 398,225 403,237 409,250 414,262 419,274 423,285 427,294 430,301 432,307 435,313 440,322 445,332 450,341 453,347 455,351 457,357 461,365 466,375 470,383 474,390 477,396 480,401 482,406 485,410 488,414 494,421 501,428 508,434 515,438 521,441 528,444 534,447 541,450 548,453 556,456 564,458 573,460 581,461 588,462 598,461 612,459 627,455 643,451 658,449 673,446 688,443 706,441 725,438 738,436" stroke="#FF00FF" stroke-width="1"/>
<path d="M260,415 260,415 261,415 265,415 274,415 285,414 298,414 311,413 325,412 338,410 350,408 361,404 373,400 387,398 402,395 413,394 418,392 419,391 422,390 428,389 436,388 443,387 449,386 455,386 461,386 467,386 472,386 478,388 483,389 489,392 498,397 511,405 526,415 543,423 561,428 580,432 598,435 615,440 632,445 648,448 662,450 674,450 688,450 706,449 725,449 738,448" stroke="#0000FF" stroke-width="1"/>
<path d="M262,409 270,409 278,409 286,409 294,409 302,409 310,409 318,409 326,409 334,409 342,409 350,409 358,408 366,408 374,406 382,405 390,402 398,399 406,394 414,389 422,382 430,375 438,368 446,362 454,357 462,354 470,355 478,358 486,365 494,373 502,384 510,396 518,407 526,419 534,429 542,437 550,444 558,450 566,454 574,457 582,459 590,461 598,462 606,462 614,463 622,463 630,464 638,464 646,464 654,464 662,464 670,464 678,464 686,464 694,464 702,464 710,464 718,463 726,463 734,463 742,463" stroke="#008000" stroke-width="1"/>
<path d="M255,523 258,517 262,509 266,501 270,493 273,485 276,478 279,470 282,462 284,454 287,445 289,436 290,427 292,419 293,412 294,402 296,387 298,369 301,352 303,335 306,319 309,302 311,285 314,267 316,252 318,241 320,232 322,224 324,216 326,209 328,203 330,198 332,195 333,191 335,189 338,186 340,185 343,186 346,188 349,190 353,192 356,194 360,195 363,197 366,198 370,200 373,201 376,203 380,204 383,207 386,209 390,213 393,219 396,226 400,234 405,246 410,259 416,271 420,282 425,293 429,302 432,308 434,313 437,319 442,328 447,338 452,347 454,353 456,357 459,362 463,370 467,379 472,387 475,393 479,399 482,404 484,409 486,413 490,418 496,424 503,430 510,436 516,440 523,443 530,447 536,450 543,452 550,455 558,457 566,459 575,461 582,462 590,462 600,462 613,460 629,457 645,454 660,451 674,447 690,445 708,442 727,440 740,439" stroke="#FF00FF" stroke-width="1"/>
</g>
<path d="M246,113.5 H256.5 V643.5 H252" fill="none" stroke="#000" stroke-width="1"/>
<path d="M267.5,673 V663.5 H734.5 V673" fill="none" stroke="#000" stroke-width="1"/>
</svg>
<div class="t" style="left:199px;top:114px;color:#000;font-size:12px;line-height:12px;transform:scaleX(0.92);">6668.9692:</div>
<div class="t" style="left:199px;top:632px;color:#000;font-size:12px;line-height:12px;transform:scaleX(0.92);">-4323.0307</div>
<div class="t" style="left:199px;top:372px;color:#B8B8B8;font-size:13px;line-height:13px;transform:scaleX(1.0);">Ax 1</div>
<div class="t" style="left:215px;top:678px;color:#000;font-size:12px;line-height:12px;transform:scaleX(0.885);">Start (re trig)</div>
<div class="t" style="left:283px;top:678px;color:#000;font-size:12px;line-height:12px;transform:scaleX(0.9);">-1</div>
<div class="t" style="left:444px;top:678px;color:#000;font-size:12px;line-height:12px;transform:scaleX(0.9);">Sweep dur</div>
<div class="t" style="left:505px;top:678px;color:#000;font-size:12px;line-height:12px;transform:scaleX(0.9);">3</div>
<svg style="position:absolute;left:279px;top:19px" width="14" height="21"><path d="M0.5,0.5 L0.5,16.5 L4.5,12.5 L7.5,18.5 L9.5,17.5 L6.5,11.5 L11.5,11.5 Z" fill="#FFF" stroke="#000" stroke-width="1" stroke-linejoin="miter"/></svg>
</body></html>
